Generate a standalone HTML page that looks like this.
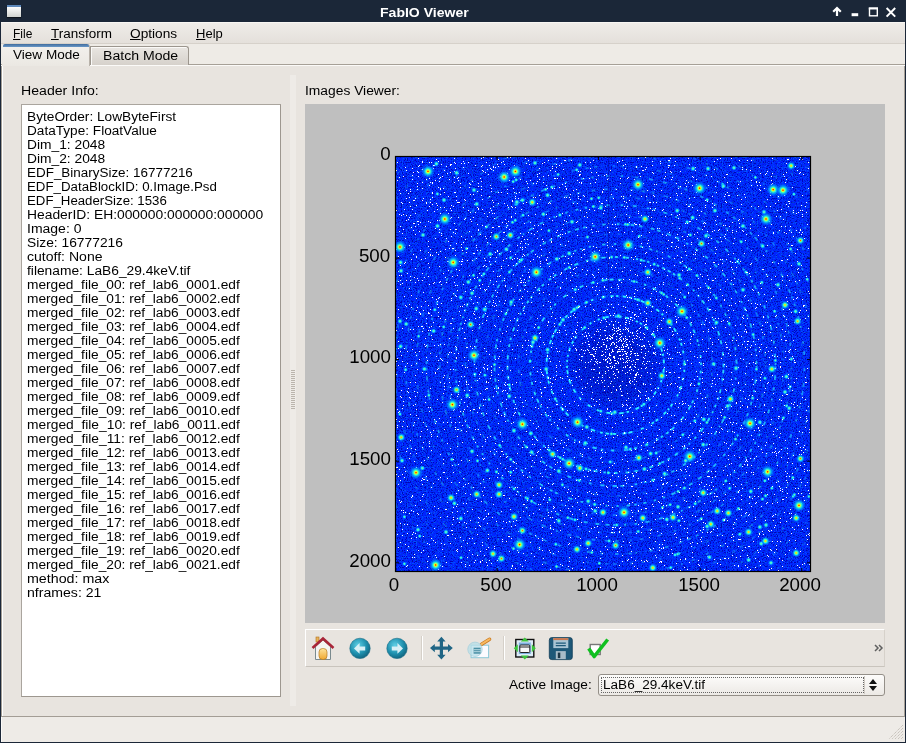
<!DOCTYPE html>
<html><head><meta charset="utf-8"><style>
*{margin:0;padding:0;box-sizing:border-box}
html,body{width:906px;height:743px;overflow:hidden;background:#1b2738}
body{position:relative;font-family:"Liberation Sans",sans-serif;font-size:12.5px;color:#000;line-height:14px}
div{position:absolute;white-space:pre}
u{text-decoration:underline}
p{height:14px;line-height:14px;white-space:pre}
.s{transform:scaleX(1.113);transform-origin:0 0}
.ax{font-size:17.5px;line-height:18px;color:#000}
</style></head><body>
<div style="left:0;top:0;width:906px;height:22px;background:#1b2738"></div><div style="left:7px;top:5px;width:14px;height:12px;background:linear-gradient(#fdfdfd,#d0d3d0);border-top:2px solid #5d88bb;box-shadow:0 1px 1px rgba(0,0,0,.5)"></div><div class="s" style="left:380px;top:6px;color:#fff;font-weight:bold;font-size:12.5px;line-height:14px;transform:scaleX(1.123)">FabIO Viewer</div><svg style="position:absolute;left:826px;top:0" width="80" height="22">
<path d="M11 16V9M7.2 11.8L11 8l3.8 3.8" stroke="#fff" stroke-width="2.2" fill="none" stroke-linecap="butt"/>
<rect x="25.6" y="13.2" width="6.6" height="3" fill="#fff"/>
<rect x="43.5" y="8.2" width="7.8" height="7.6" fill="none" stroke="#fff" stroke-width="1.4"/>
<rect x="42.8" y="7.5" width="9.2" height="2" fill="#fff"/>
<path d="M60.6 8l8.6 8.6M69.2 8l-8.6 8.6" stroke="#fff" stroke-width="2"/>
</svg><div style="left:1px;top:22px;width:904px;height:720px;background:#e8e4df"></div><div style="left:1px;top:22px;width:904px;height:21px;background:linear-gradient(#efece8,#e4e0db);border-top:1px solid #f8f6f3"></div><div style="left:1px;top:43px;width:904px;height:1px;background:#d6d1ca"></div><div class="s" style="left:13px;top:27px;transform:scaleX(0.96)"><u>F</u>ile</div><div class="s" style="left:51px;top:27px;transform:scaleX(1.078)"><u>T</u>ransform</div><div class="s" style="left:130px;top:27px;transform:scaleX(1.093)"><u>O</u>ptions</div><div class="s" style="left:196px;top:27px;transform:scaleX(1.041)"><u>H</u>elp</div><div style="left:1px;top:44px;width:904px;height:20px;background:#eeebe6"></div><div style="left:1px;top:64px;width:904px;height:1px;background:#a6a097"></div><div style="left:1px;top:65px;width:904px;height:1px;background:#fbfaf8"></div><div style="left:2px;top:44px;width:88px;height:22px;background:linear-gradient(#f3f1ee,#ebe8e3);border-right:1px solid #b8b2aa;border-radius:3px 3px 0 0"></div><div style="left:3px;top:44px;width:86px;height:3px;background:linear-gradient(#3f6b9c,#6a98c8);border-radius:2px 2px 0 0"></div><div class="s" style="left:13px;top:48px;transform:scaleX(1.085)">View Mode</div><div style="left:90px;top:46px;width:99px;height:19px;background:linear-gradient(#e9e6e2,#d6d1cb);border:1px solid #9c968e;border-bottom:none;border-radius:0 3px 0 0;box-shadow:inset 1px 1px 0 #fbfaf8"></div><div class="s" style="left:103px;top:49px;transform:scaleX(1.126)">Batch Mode</div><div style="left:1px;top:66px;width:1px;height:650px;background:#a39d95"></div><div style="left:2px;top:66px;width:1px;height:650px;background:#fff"></div><div style="left:904px;top:66px;width:1px;height:650px;background:#a6a097"></div><div style="left:1px;top:716px;width:904px;height:1px;background:#a39d95"></div><div style="left:1px;top:717px;width:904px;height:25px;background:#eeebe7;border-left:1px solid #fbfaf8"></div><div style="left:0;top:742px;width:906px;height:1px;background:#1b2738"></div><svg style="position:absolute;left:886px;top:722px" width="18" height="18"><path d="M17 3L3 17M17 6L6 17M17 9L9 17M17 12L12 17M17 15L15 17" stroke="#b8b2aa" stroke-width="1" stroke-dasharray="1,1"/></svg><div class="s" style="left:21px;top:84px;transform:scaleX(1.129)">Header Info:</div><div style="left:21px;top:104px;width:260px;height:593px;background:#fff;border:1px solid #aaa59e;border-bottom-color:#9d978f;border-right-color:#9d978f"></div><div style="left:27px;top:110px"><p style="transform:scaleX(1.095);transform-origin:0 0">ByteOrder: LowByteFirst</p><p style="transform:scaleX(1.089);transform-origin:0 0">DataType: FloatValue</p><p style="transform:scaleX(1.103);transform-origin:0 0">Dim_1: 2048</p><p style="transform:scaleX(1.103);transform-origin:0 0">Dim_2: 2048</p><p style="transform:scaleX(1.075);transform-origin:0 0">EDF_BinarySize: 16777216</p><p style="transform:scaleX(1.063);transform-origin:0 0">EDF_DataBlockID: 0.Image.Psd</p><p style="transform:scaleX(1.059);transform-origin:0 0">EDF_HeaderSize: 1536</p><p style="transform:scaleX(1.107);transform-origin:0 0">HeaderID: EH:000000:000000:000000</p><p style="transform:scaleX(1.119);transform-origin:0 0">Image: 0</p><p style="transform:scaleX(1.104);transform-origin:0 0">Size: 16777216</p><p style="transform:scaleX(1.124);transform-origin:0 0">cutoff: None</p><p style="transform:scaleX(1.102);transform-origin:0 0">filename: LaB6_29.4keV.tif</p><p style="transform:scaleX(1.097);transform-origin:0 0">merged_file_00: ref_lab6_0001.edf</p><p style="transform:scaleX(1.097);transform-origin:0 0">merged_file_01: ref_lab6_0002.edf</p><p style="transform:scaleX(1.097);transform-origin:0 0">merged_file_02: ref_lab6_0003.edf</p><p style="transform:scaleX(1.097);transform-origin:0 0">merged_file_03: ref_lab6_0004.edf</p><p style="transform:scaleX(1.097);transform-origin:0 0">merged_file_04: ref_lab6_0005.edf</p><p style="transform:scaleX(1.097);transform-origin:0 0">merged_file_05: ref_lab6_0006.edf</p><p style="transform:scaleX(1.097);transform-origin:0 0">merged_file_06: ref_lab6_0007.edf</p><p style="transform:scaleX(1.097);transform-origin:0 0">merged_file_07: ref_lab6_0008.edf</p><p style="transform:scaleX(1.097);transform-origin:0 0">merged_file_08: ref_lab6_0009.edf</p><p style="transform:scaleX(1.097);transform-origin:0 0">merged_file_09: ref_lab6_0010.edf</p><p style="transform:scaleX(1.103);transform-origin:0 0">merged_file_10: ref_lab6_0011.edf</p><p style="transform:scaleX(1.103);transform-origin:0 0">merged_file_11: ref_lab6_0012.edf</p><p style="transform:scaleX(1.097);transform-origin:0 0">merged_file_12: ref_lab6_0013.edf</p><p style="transform:scaleX(1.097);transform-origin:0 0">merged_file_13: ref_lab6_0014.edf</p><p style="transform:scaleX(1.097);transform-origin:0 0">merged_file_14: ref_lab6_0015.edf</p><p style="transform:scaleX(1.097);transform-origin:0 0">merged_file_15: ref_lab6_0016.edf</p><p style="transform:scaleX(1.097);transform-origin:0 0">merged_file_16: ref_lab6_0017.edf</p><p style="transform:scaleX(1.097);transform-origin:0 0">merged_file_17: ref_lab6_0018.edf</p><p style="transform:scaleX(1.097);transform-origin:0 0">merged_file_18: ref_lab6_0019.edf</p><p style="transform:scaleX(1.097);transform-origin:0 0">merged_file_19: ref_lab6_0020.edf</p><p style="transform:scaleX(1.097);transform-origin:0 0">merged_file_20: ref_lab6_0021.edf</p><p style="transform:scaleX(1.140);transform-origin:0 0">method: max</p><p style="transform:scaleX(1.127);transform-origin:0 0">nframes: 21</p></div><div style="left:290px;top:75px;width:6px;height:631px;background:#eeebe7"></div><div style="left:291px;top:370px;width:4px;height:39px;background:repeating-linear-gradient(#bab4ac 0 1px,transparent 1px 2px)"></div><div class="s" style="left:305px;top:84px;transform:scaleX(1.105)">Images Viewer:</div><div style="left:305px;top:104px;width:580px;height:519px;background:#bfbfbf"></div><svg width="906" height="743" style="position:absolute;left:0;top:0"><defs><radialGradient id="g3"><stop offset="0" stop-color="#e00000"/><stop offset=".07" stop-color="#ff6000"/><stop offset=".17" stop-color="#f0ff10"/><stop offset=".32" stop-color="#40ffc0"/><stop offset=".55" stop-color="#00b0ff" stop-opacity=".8"/><stop offset="1" stop-color="#0050ff" stop-opacity="0"/></radialGradient><radialGradient id="g2"><stop offset="0" stop-color="#ff3000"/><stop offset=".1" stop-color="#ffe000"/><stop offset=".38" stop-color="#30ffd0"/><stop offset=".65" stop-color="#00a0ff" stop-opacity=".7"/><stop offset="1" stop-color="#0050ff" stop-opacity="0"/></radialGradient><radialGradient id="g1"><stop offset="0" stop-color="#a0ff60"/><stop offset=".35" stop-color="#20e8ff"/><stop offset=".7" stop-color="#0090ff" stop-opacity=".6"/><stop offset="1" stop-color="#0050ff" stop-opacity="0"/></radialGradient><radialGradient id="cd"><stop offset="0" stop-color="#000080" stop-opacity=".3"/><stop offset=".6" stop-color="#000080" stop-opacity=".22"/><stop offset="1" stop-color="#000080" stop-opacity="0"/></radialGradient><filter id="nz" x="0" y="0" width="100%" height="100%"><feTurbulence type="fractalNoise" baseFrequency="0.8" numOctaves="2" seed="5"/><feColorMatrix type="matrix" values="0 0 0 0 0  0 0 0 0 0  0 0 0 0 0.4  -10 0 0 0 4.6"/></filter><filter id="nz2" x="0" y="0" width="100%" height="100%"><feTurbulence type="fractalNoise" baseFrequency="0.8" numOctaves="1" seed="11"/><feColorMatrix type="matrix" values="0 0 0 0 0  0 0 0 0 0.38  0 0 0 0 1  0 -10 0 0 4.6"/></filter><clipPath id="cl"><rect x="395" y="156" width="416" height="416"/></clipPath></defs><g clip-path="url(#cl)"><rect x="395" y="156" width="416" height="416" fill="#0024ff"/><rect x="395" y="156" width="416" height="416" fill="#000" filter="url(#nz)" opacity="0.85"/><rect x="395" y="156" width="416" height="416" filter="url(#nz2)" opacity="0.35"/><circle cx="615.5" cy="365" r="50" fill="url(#cd)"/><circle cx="615.5" cy="365" r="48.5" fill="none" stroke="#0070ff" stroke-width="2.4" stroke-opacity="0.22"/><circle cx="615.5" cy="365" r="48.5" fill="none" stroke="#30ecff" stroke-width="1.8" stroke-opacity="1.00" stroke-dasharray="3.4,2.2,2.3,3.6,3.7,6.7,4.2,2.6,2.8,2.2,2.2,5.5,1.6,3.4,3.4,5.8,2.2,6.1,3.9,2.0,3.9,6.9,2.5,3.1,4.4,4.4,1.8,2.7,4.0,6.2,3.9,7.1,3.1,8.8,2.6,5.9,4.0,6.3,4.1,6.0,3.6,2.3,2.2,4.0,1.7,3.6,1.8,3.9,3.4,4.6,2.6,3.5,2.3,8.6,3.4,6.3,2.0,7.1,2.0,4.7,4.5,6.5,3.2,6.8,4.0,7.4,2.2,2.2,2.4,3.9,2.1,8.6,4.1,4.2,3.5,4.8" stroke-dashoffset="18.3"/><circle cx="615.5" cy="365" r="69.0" fill="none" stroke="#0070ff" stroke-width="2.4" stroke-opacity="0.22"/><circle cx="615.5" cy="365" r="69.0" fill="none" stroke="#30ecff" stroke-width="1.8" stroke-opacity="1.00" stroke-dasharray="2.9,3.9,2.2,5.9,2.3,6.1,4.2,4.8,2.2,9.0,3.0,2.6,1.6,2.8,3.4,7.5,2.8,2.4,2.6,9.0,3.1,8.8,4.1,2.1,3.7,6.8,3.1,3.9,3.4,2.8,2.8,5.2,4.4,8.1,2.3,5.5,2.0,8.4,4.1,4.1,3.4,6.3,2.0,7.3,3.1,7.5,3.1,2.0,2.5,2.1,4.3,8.2,4.0,4.2,1.7,8.1,4.3,2.6,3.0,2.5,3.8,7.4,1.9,5.3,3.1,3.9,4.1,5.0,2.1,5.8,3.7,3.4,2.4,9.0,3.4,5.1,3.1,2.8,2.2,4.4,3.3,3.6,2.2,2.5,3.4,3.6,4.2,8.0,1.7,3.7,3.5,3.5,1.9,8.5,3.2,5.3,3.9,7.7,2.1,2.7,2.8,5.0,2.9,7.1,3.5,8.9" stroke-dashoffset="2.0"/><circle cx="615.5" cy="365" r="85.5" fill="none" stroke="#0070ff" stroke-width="2.4" stroke-opacity="0.19"/><circle cx="615.5" cy="365" r="85.5" fill="none" stroke="#30ecff" stroke-width="1.8" stroke-opacity="0.85" stroke-dasharray="2.7,4.9,4.1,4.2,2.1,5.8,2.8,4.4,2.2,9.5,2.8,9.0,3.2,2.6,4.5,8.8,4.4,9.5,4.0,3.5,3.0,3.9,2.7,2.7,2.6,10.0,2.3,8.4,2.9,5.6,4.4,10.0,3.2,7.9,2.0,4.6,4.4,6.8,3.1,8.1,1.7,6.8,3.0,8.9,2.0,9.8,1.7,3.7,3.3,7.5,2.2,3.2,4.2,4.2,3.3,7.1,2.8,6.8,3.1,9.6,2.1,7.9,2.2,5.3,3.5,4.6,2.4,8.1,1.7,5.8,4.5,10.1,1.7,3.9,2.3,9.6,4.1,9.1,2.6,3.5,4.0,7.8,3.3,10.0,3.5,2.3,4.0,4.6,3.5,9.6,1.9,3.1,1.8,6.6,2.3,7.0,3.7,3.8,3.4,4.3,3.0,9.3,4.0,3.0,2.8,4.4,1.5,8.3,3.4,4.3,3.7,6.6,2.8,2.3,1.7,9.2" stroke-dashoffset="18.1"/><circle cx="615.5" cy="365" r="97.0" fill="none" stroke="#0070ff" stroke-width="2.4" stroke-opacity="0.07"/><circle cx="615.5" cy="365" r="97.0" fill="none" stroke="#30ecff" stroke-width="1.8" stroke-opacity="0.30" stroke-dasharray="3.1,18.2,3.2,7.1,1.9,9.7,4.2,17.6,4.1,19.3,2.1,8.7,1.8,17.3,4.2,11.3,3.4,7.2,4.3,18.7,4.4,17.8,4.1,5.0,3.7,10.0,4.3,17.7,4.1,17.8,2.3,17.4,1.8,18.8,4.1,8.3,3.9,12.1,2.4,17.6,2.2,5.0,2.1,10.0,4.1,20.4,2.3,15.1,2.7,20.6,3.1,19.9,1.8,20.4,2.0,20.3,2.3,6.4,2.8,16.5,2.4,14.5,3.0,10.9,3.2,8.8,3.6,4.7,4.3,13.4,3.7,16.7" stroke-dashoffset="13.4"/><circle cx="615.5" cy="365" r="108.0" fill="none" stroke="#0070ff" stroke-width="2.4" stroke-opacity="0.19"/><circle cx="615.5" cy="365" r="108.0" fill="none" stroke="#30ecff" stroke-width="1.8" stroke-opacity="0.85" stroke-dasharray="2.6,2.8,3.5,4.8,2.4,8.9,3.7,4.6,2.4,5.4,2.7,4.6,1.9,5.5,4.3,7.6,4.2,7.1,2.4,6.5,1.5,4.5,2.8,6.8,3.5,5.9,2.8,3.9,2.9,9.3,3.9,3.6,1.8,6.3,3.4,4.9,4.0,8.1,3.5,4.0,2.1,2.4,2.2,6.0,4.0,2.8,2.7,7.2,2.1,7.7,3.0,4.2,3.5,2.3,3.8,8.3,1.8,5.6,2.0,9.8,3.1,2.6,2.2,8.9,2.9,8.5,3.5,10.0,3.3,9.7,4.2,7.0,3.7,6.2,4.0,6.5,4.2,8.1,2.9,4.3,2.2,7.2,3.8,6.3,3.4,4.4,1.7,4.5,2.3,4.7,3.1,3.3,2.2,7.7,3.6,2.7,2.7,6.5,2.7,3.9,2.8,9.3,3.3,7.7,4.1,8.2,2.6,2.3,2.6,8.2,4.1,9.7,2.8,8.1,3.1,7.0,2.2,4.0,2.8,2.5,2.5,7.6,2.7,3.5,2.9,3.2,3.4,2.5,2.7,6.7,1.6,7.3,1.9,5.9,1.7,5.2,2.1,4.8,3.8,5.2,3.8,8.8,2.3,2.9,1.6,6.5,4.5,5.0,3.5,8.4,3.5,8.2,4.3,3.8" stroke-dashoffset="0.4"/><circle cx="615.5" cy="365" r="121.0" fill="none" stroke="#0070ff" stroke-width="2.4" stroke-opacity="0.15"/><circle cx="615.5" cy="365" r="121.0" fill="none" stroke="#30ecff" stroke-width="1.8" stroke-opacity="0.70" stroke-dasharray="2.0,3.7,3.5,7.6,2.2,8.9,3.8,4.1,3.3,9.3,1.8,9.9,4.4,3.5,1.6,5.4,3.5,11.2,2.7,9.0,1.7,8.8,3.4,3.5,3.8,10.2,3.3,3.7,4.5,9.6,2.5,6.4,2.6,7.1,2.5,10.2,4.0,3.5,4.4,8.3,4.0,8.9,2.8,9.2,4.4,5.0,3.9,7.4,3.0,6.5,3.7,5.0,4.1,10.0,1.8,10.5,2.2,6.7,3.3,6.0,1.6,10.2,2.0,4.5,3.9,5.6,4.1,8.9,2.3,2.7,4.3,3.3,3.7,7.0,3.8,8.8,3.4,7.0,3.9,3.4,2.2,8.8,2.4,7.8,2.9,7.3,2.8,9.3,2.5,8.9,2.3,4.8,1.9,4.3,1.9,7.4,3.8,4.2,2.1,6.9,3.7,11.3,3.1,5.1,1.8,4.3,2.2,4.2,1.5,7.4,2.3,11.3,3.2,8.8,1.9,10.4,3.0,10.4,3.2,6.8,2.8,4.2,1.7,11.0,2.9,10.0,2.7,3.2,3.4,3.0,1.9,7.6,2.4,11.5,1.9,9.4,3.3,9.7,2.2,7.3,2.9,6.5,4.1,11.5,2.4,8.1,3.3,9.2,4.3,4.4" stroke-dashoffset="4.2"/><circle cx="615.5" cy="365" r="131.0" fill="none" stroke="#0070ff" stroke-width="2.4" stroke-opacity="0.06"/><circle cx="615.5" cy="365" r="131.0" fill="none" stroke="#30ecff" stroke-width="1.8" stroke-opacity="0.25" stroke-dasharray="3.5,8.2,2.0,6.7,1.5,13.6,3.3,10.7,2.2,18.3,3.6,13.7,3.6,22.3,3.9,16.8,3.5,22.5,2.8,15.3,3.4,22.1,4.0,6.6,2.0,11.0,3.7,15.8,2.4,7.6,3.6,18.2,4.3,14.5,3.0,6.8,1.6,13.3,2.5,9.9,1.8,23.0,4.0,15.9,4.4,23.7,3.5,10.3,1.6,19.2,2.9,17.3,4.2,8.6,3.3,17.0,3.0,7.0,2.5,11.4,3.5,21.1,2.5,18.1,2.4,22.7,3.9,15.4,2.9,11.1,2.5,23.2,2.7,14.8,4.5,17.4,3.1,12.9,2.1,12.0,3.8,16.8,3.8,9.0,3.1,22.4,2.8,18.2,1.9,23.3,3.3,9.7" stroke-dashoffset="3.2"/><circle cx="615.5" cy="365" r="141.0" fill="none" stroke="#0070ff" stroke-width="2.4" stroke-opacity="0.15"/><circle cx="615.5" cy="365" r="141.0" fill="none" stroke="#30ecff" stroke-width="1.8" stroke-opacity="0.70" stroke-dasharray="3.2,7.5,1.8,11.5,4.2,6.7,1.9,10.0,3.0,9.0,3.0,5.0,4.0,11.4,2.2,7.5,2.7,10.9,3.0,10.5,4.1,5.0,3.9,6.3,4.3,7.1,4.0,5.1,2.4,7.8,4.5,7.0,1.9,7.4,2.5,7.5,3.1,6.7,2.5,4.3,3.6,7.7,2.2,9.5,1.6,9.3,3.6,9.9,2.7,8.5,4.0,11.4,3.0,2.9,3.0,7.9,4.1,10.4,2.8,7.3,2.9,9.1,2.7,8.5,2.0,6.8,4.4,5.6,3.6,8.4,4.1,10.2,4.1,6.0,2.4,9.0,3.8,10.4,1.6,3.2,3.4,10.8,4.5,9.3,2.8,3.5,3.4,10.4,2.8,8.8,4.2,3.0,3.9,5.2,2.6,3.9,3.1,7.7,3.9,4.1,1.7,10.4,3.4,4.7,4.2,3.9,2.9,4.8,2.3,2.7,3.9,10.7,3.5,4.0,2.8,5.7,3.3,8.3,2.8,4.8,4.0,4.4,2.7,6.9,2.2,7.7,3.2,11.5,2.4,11.4,3.5,5.0,3.2,8.7,3.7,3.0,3.3,7.0,4.2,5.1,3.9,8.0,2.6,8.3,3.4,8.7,3.7,8.5,4.0,8.2,4.2,8.4,2.4,6.5,3.2,9.1,1.8,5.2,3.7,4.1,1.9,7.4,4.4,7.3,4.2,10.0,2.3,10.0" stroke-dashoffset="9.6"/><circle cx="615.5" cy="365" r="150.0" fill="none" stroke="#0070ff" stroke-width="2.4" stroke-opacity="0.07"/><circle cx="615.5" cy="365" r="150.0" fill="none" stroke="#30ecff" stroke-width="1.8" stroke-opacity="0.30" stroke-dasharray="3.9,16.8,2.5,6.5,4.4,6.9,4.4,18.6,3.7,20.6,4.4,17.7,2.6,17.5,1.5,13.4,2.9,15.6,3.5,14.2,4.0,19.9,1.8,8.4,1.6,19.0,3.2,19.5,2.2,5.7,4.0,19.4,2.4,11.3,1.9,20.0,2.4,12.7,1.8,19.1,1.9,12.0,3.5,16.7,4.3,11.5,3.7,7.2,2.7,6.3,3.0,11.3,4.4,5.2,2.6,11.9,4.4,18.6,1.8,15.8,3.1,20.5,2.6,11.1,2.1,6.6,4.0,12.0,3.5,15.1,3.3,5.0,3.9,8.6,1.9,13.8,1.7,17.1,2.1,8.2,4.1,10.0,1.9,19.3,1.5,18.6,1.9,6.8,2.3,7.5,3.5,5.1,1.5,17.5,2.2,9.9,2.0,5.5,3.7,13.2,3.7,12.4,3.8,13.0,1.8,12.8,4.3,5.4,3.8,18.7,3.1,12.1,4.4,5.6,2.9,11.2,3.6,12.6,4.2,5.8,1.7,14.5" stroke-dashoffset="1.3"/><circle cx="615.5" cy="365" r="160.0" fill="none" stroke="#0070ff" stroke-width="2.4" stroke-opacity="0.14"/><circle cx="615.5" cy="365" r="160.0" fill="none" stroke="#30ecff" stroke-width="1.8" stroke-opacity="0.65" stroke-dasharray="2.3,8.7,3.1,5.8,4.5,7.7,2.9,8.4,1.8,9.3,4.1,8.9,3.8,9.5,2.1,7.0,2.2,5.9,2.9,6.6,1.8,6.7,3.5,6.2,2.0,11.4,1.7,10.6,1.8,3.6,3.7,10.4,3.2,8.3,3.2,5.8,1.9,6.1,3.5,9.8,4.1,9.5,4.4,8.4,2.6,8.2,2.1,8.9,2.2,3.7,4.0,6.2,3.8,8.1,3.9,10.7,4.4,10.4,3.3,8.8,1.6,11.5,4.0,5.2,2.0,9.4,2.4,5.9,1.5,10.9,3.2,6.5,1.9,8.7,1.6,9.8,2.1,6.7,2.5,6.2,3.7,10.1,3.2,3.5,1.7,4.2,3.4,9.1,2.3,9.0,3.0,6.9,2.3,9.8,1.8,6.8,2.3,9.1,3.0,9.0,1.6,6.4,3.3,2.8,2.4,4.7,1.9,5.1,2.5,2.8,3.7,4.4,2.6,9.4,3.0,10.6,3.9,3.4,4.1,3.1,1.6,11.4,4.1,8.2,3.2,9.4,2.8,3.8,1.6,5.8,3.9,8.6,4.0,11.4,1.8,10.7,2.2,8.3,3.1,6.4,2.4,5.9,2.5,4.3,3.0,3.8,3.0,11.3,2.5,9.6,4.0,10.4,2.2,4.1,2.1,8.4,3.8,8.9,2.0,10.0,3.0,9.8,3.8,7.0,4.3,8.0,3.4,8.6,4.1,8.6,2.0,3.4,2.8,5.6,2.3,3.2,3.0,5.6,2.9,3.2,4.0,3.4,4.1,10.8,3.3,7.5,2.9,7.9,3.9,11.2,2.8,10.4,3.5,5.7" stroke-dashoffset="9.5"/><circle cx="615.5" cy="365" r="168.0" fill="none" stroke="#0070ff" stroke-width="2.4" stroke-opacity="0.07"/><circle cx="615.5" cy="365" r="168.0" fill="none" stroke="#30ecff" stroke-width="1.8" stroke-opacity="0.30" stroke-dasharray="2.0,5.7,1.8,19.3,2.5,16.3,3.0,7.5,2.2,11.8,2.8,13.1,2.0,10.7,2.3,11.3,2.5,14.4,3.9,15.2,1.7,6.2,3.5,9.3,3.7,15.3,4.2,18.8,2.5,14.1,1.9,10.3,4.4,16.0,2.7,14.3,4.3,9.7,2.6,17.5,3.9,15.5,4.0,16.7,3.6,13.2,3.4,11.5,2.6,10.5,2.0,8.1,4.3,12.6,2.2,6.9,1.7,18.4,1.8,17.2,4.0,19.0,1.6,10.1,3.8,6.8,2.6,7.3,4.0,17.2,3.9,7.3,2.8,11.3,3.5,8.5,2.8,9.3,3.7,11.9,3.1,9.7,3.9,12.3,4.0,10.6,4.3,20.7,2.9,9.2,2.6,13.2,4.4,17.9,3.9,6.9,2.3,15.1,4.1,13.7,1.8,18.4,4.1,9.3,3.8,9.1,4.2,7.0,2.8,20.0,2.2,12.0,2.5,5.1,1.7,12.8,2.2,20.8,2.6,5.1,4.3,18.3,3.4,17.5,1.9,9.3,4.0,16.0,1.9,16.1,2.8,4.7,1.7,8.8,4.0,13.6" stroke-dashoffset="14.5"/><circle cx="615.5" cy="365" r="176.0" fill="none" stroke="#0070ff" stroke-width="2.4" stroke-opacity="0.09"/><circle cx="615.5" cy="365" r="176.0" fill="none" stroke="#30ecff" stroke-width="1.8" stroke-opacity="0.40" stroke-dasharray="3.1,5.3,2.4,7.8,1.6,9.4,3.9,9.9,1.8,15.8,3.3,4.0,3.0,7.0,1.9,9.5,3.3,7.0,2.7,12.6,1.8,16.8,1.7,10.8,3.0,16.9,3.2,9.0,2.9,12.2,4.4,7.2,1.5,14.3,2.5,13.5,3.4,14.1,3.7,8.2,1.6,11.1,3.9,6.1,3.8,10.0,3.6,12.2,3.9,4.6,3.8,9.9,2.4,4.4,2.1,4.4,4.3,10.6,4.5,11.0,2.3,13.8,2.1,8.5,3.8,15.3,2.5,5.5,2.6,15.6,3.7,15.7,2.7,16.7,3.0,10.4,4.3,10.7,3.9,13.5,1.7,11.8,4.0,11.0,2.5,4.9,3.5,7.9,3.3,9.5,3.6,8.5,1.6,15.4,2.6,17.1,2.3,16.8,4.3,4.8,3.4,8.6,3.9,12.8,4.4,5.7,3.3,14.2,1.6,4.7,3.8,8.7,2.6,11.3,3.3,12.8,4.3,8.7,3.8,11.4,3.1,9.1,3.4,7.1,1.8,13.6,3.0,8.9,3.2,7.3,2.3,9.7,4.5,7.6,4.2,10.3,1.9,15.1,2.9,15.7,2.8,5.0,3.5,15.0,2.5,8.4,1.7,11.0,4.2,15.1,3.6,16.1,3.4,14.3,3.0,5.4,2.1,5.6,3.9,4.1,3.2,8.7,3.9,11.1,3.3,4.9" stroke-dashoffset="6.2"/><circle cx="615.5" cy="365" r="189.0" fill="none" stroke="#0070ff" stroke-width="2.4" stroke-opacity="0.11"/><circle cx="615.5" cy="365" r="189.0" fill="none" stroke="#30ecff" stroke-width="1.8" stroke-opacity="0.50" stroke-dasharray="4.5,11.4,3.1,12.0,4.0,4.1,4.4,10.6,2.8,11.0,2.5,13.2,3.8,10.5,2.0,14.2,2.8,13.6,1.7,4.7,2.0,5.1,2.5,11.3,2.5,13.9,4.2,12.9,2.3,10.5,3.2,4.7,2.4,9.3,3.0,5.2,4.3,5.0,3.5,11.4,3.3,12.8,3.2,12.6,1.6,3.8,3.4,9.8,3.5,12.0,2.7,10.5,3.0,10.4,2.4,14.1,2.9,12.4,3.6,6.6,1.7,3.9,2.8,8.8,2.1,10.1,2.4,11.4,3.7,13.0,4.4,4.7,2.6,9.6,2.5,8.6,2.3,6.1,1.8,6.5,2.7,10.2,2.2,13.1,2.0,7.0,3.2,6.8,3.8,8.9,3.0,8.9,2.4,3.5,4.3,9.0,4.4,5.7,2.6,3.8,3.0,13.3,3.5,8.6,3.1,12.9,2.8,13.3,3.7,11.9,2.6,7.8,3.2,5.5,3.2,4.1,3.0,11.9,2.3,14.5,3.5,4.6,4.4,7.7,3.9,7.1,4.3,11.8,2.1,9.0,3.0,3.8,1.9,7.0,2.9,8.4,3.3,9.1,2.5,10.2,2.0,14.5,3.7,6.7,2.5,12.7,3.1,11.3,2.4,12.5,2.6,10.9,4.4,9.9,3.9,11.5,3.6,3.6,2.9,14.2,3.8,12.1,3.2,11.5,3.3,5.2,3.4,10.3,4.0,4.9,3.5,3.6,4.3,4.5,1.6,6.8,2.0,11.1,2.7,12.1,4.3,13.2,3.7,4.0,1.9,5.6,2.5,10.8,3.1,6.8,2.0,13.6,2.5,7.3,3.8,11.4" stroke-dashoffset="12.9"/><circle cx="615.5" cy="365" r="199.0" fill="none" stroke="#0070ff" stroke-width="2.4" stroke-opacity="0.07"/><circle cx="615.5" cy="365" r="199.0" fill="none" stroke="#30ecff" stroke-width="1.8" stroke-opacity="0.30" stroke-dasharray="3.6,14.6,2.1,8.7,3.2,8.3,4.4,9.5,2.4,8.0,3.6,9.8,2.5,19.8,3.9,9.1,1.9,15.6,2.6,20.6,4.0,20.2,3.9,9.4,2.4,16.3,2.5,11.8,2.3,12.4,2.1,13.4,4.3,16.0,1.9,14.7,3.3,8.6,3.5,13.3,3.4,5.5,2.7,16.3,1.8,17.2,1.5,13.6,4.3,11.3,4.3,18.9,2.9,7.9,4.4,9.9,3.4,19.4,1.8,14.0,3.1,16.4,4.3,19.5,2.0,19.0,2.0,19.6,4.5,11.1,3.0,19.9,4.4,19.7,4.1,4.8,3.2,6.4,4.4,9.3,4.5,13.5,3.0,19.9,4.1,12.3,2.1,6.5,2.0,12.1,2.3,7.7,3.7,17.5,3.2,17.0,2.0,18.6,4.2,18.1,3.0,6.1,3.5,7.7,1.9,9.9,2.2,8.9,2.2,16.9,4.4,9.6,3.7,4.8,3.5,15.9,1.7,6.6,2.4,11.2,3.0,19.2,3.6,9.7,1.9,19.5,2.4,14.6,2.2,6.8,2.0,16.8,3.3,11.4,3.1,12.3,3.1,15.4,2.2,8.7,3.8,18.8,1.7,11.9,3.6,5.9,3.2,5.6,3.1,12.9,3.2,7.1,2.5,13.1,1.8,8.0,3.2,6.1,3.0,17.8" stroke-dashoffset="9.1"/><circle cx="615.5" cy="365" r="210.0" fill="none" stroke="#0070ff" stroke-width="2.4" stroke-opacity="0.08"/><circle cx="615.5" cy="365" r="210.0" fill="none" stroke="#30ecff" stroke-width="1.8" stroke-opacity="0.35" stroke-dasharray="3.0,10.8,1.7,10.9,3.9,14.7,2.7,16.1,3.7,12.6,1.6,9.2,1.7,18.7,4.3,5.2,4.3,4.6,2.7,15.4,3.8,18.5,3.4,10.3,4.5,9.8,4.1,17.4,2.6,14.1,3.5,12.0,3.5,9.2,2.0,12.0,3.1,14.8,2.2,4.2,1.6,8.5,3.5,12.1,3.1,16.2,2.2,9.2,2.3,17.9,3.7,5.8,3.9,10.3,3.8,17.1,1.5,7.2,1.8,4.7,3.3,14.4,1.6,15.0,2.7,7.6,2.2,16.8,1.7,11.5,2.4,16.1,3.7,8.8,3.3,14.0,2.5,8.6,1.9,13.8,2.2,8.6,1.7,18.0,4.1,17.5,3.4,10.4,3.0,18.4,4.3,14.0,3.9,8.8,2.7,6.3,2.6,15.2,2.9,16.6,2.4,14.5,3.9,17.5,3.2,18.3,3.2,6.1,2.2,7.1,3.4,17.6,4.0,5.5,3.7,7.0,2.3,14.0,3.3,16.9,2.1,15.3,3.7,12.3,2.9,16.9,2.5,18.1,1.5,17.8,4.4,5.9,4.5,11.2,2.2,13.0,2.1,17.5,3.2,15.5,2.6,12.0,2.6,8.0,3.0,11.4,1.8,18.5,2.9,16.4,4.2,9.6,2.7,12.4,2.2,6.3,2.3,17.8,3.2,10.3,2.0,9.0,2.6,16.3,3.0,13.7,3.6,7.9,4.0,18.3,3.4,11.3" stroke-dashoffset="3.4"/><circle cx="615.5" cy="365" r="221.0" fill="none" stroke="#0070ff" stroke-width="2.4" stroke-opacity="0.06"/><circle cx="615.5" cy="365" r="221.0" fill="none" stroke="#30ecff" stroke-width="1.8" stroke-opacity="0.25" stroke-dasharray="3.9,8.4,3.7,14.3,4.3,15.3,3.4,6.4,1.6,20.9,4.3,17.6,3.8,12.9,4.0,9.6,3.6,5.4,3.0,12.2,3.4,17.6,3.3,14.2,3.0,5.4,3.2,5.5,3.1,10.4,4.4,5.6,3.9,17.7,3.9,22.1,1.8,7.1,1.9,8.8,3.1,20.3,2.3,12.6,2.6,12.8,3.2,23.6,2.2,17.9,4.0,17.4,4.1,19.3,1.8,12.3,3.2,6.3,1.5,8.4,3.0,13.3,3.9,15.7,4.1,7.0,3.1,6.1,2.1,21.3,4.2,14.1,1.6,6.7,4.3,21.9,3.2,5.9,4.3,11.1,4.4,16.1,3.8,18.4,2.7,6.7,2.0,9.7,4.0,12.5,4.2,11.4,3.8,7.9,4.5,18.7,3.0,23.3,1.7,13.4,4.0,11.6,3.8,22.9,2.7,19.6,1.6,10.3,4.5,14.3,2.6,22.7,2.8,17.8,3.5,6.9,3.4,20.0,3.6,6.8,2.0,18.4,3.4,18.9,2.5,7.2,1.5,11.0,2.6,10.3,1.9,8.7,2.8,15.5,2.7,5.8,2.6,7.0,3.3,11.3,2.7,10.7,2.7,6.8,4.2,22.0,4.4,15.8,2.0,12.3,1.9,10.8,3.0,6.4,2.8,13.1,3.0,6.7,2.3,9.8,3.4,16.2,2.1,7.3,2.4,22.8,2.5,16.7,3.9,11.4,2.5,20.3" stroke-dashoffset="17.2"/><circle cx="615.5" cy="365" r="234.0" fill="none" stroke="#0070ff" stroke-width="2.4" stroke-opacity="0.06"/><circle cx="615.5" cy="365" r="234.0" fill="none" stroke="#30ecff" stroke-width="1.8" stroke-opacity="0.25" stroke-dasharray="4.4,7.8,2.5,22.8,2.1,11.1,4.4,23.2,2.4,18.1,3.0,15.9,2.2,12.2,3.9,12.5,1.8,15.7,3.3,15.4,3.5,15.4,4.4,13.8,3.6,13.4,2.4,18.1,4.0,20.0,2.7,14.5,3.4,9.7,3.5,18.5,3.9,6.6,4.5,14.1,2.7,14.6,4.3,18.1,3.1,19.9,2.6,21.8,3.1,17.1,1.8,19.5,3.5,11.8,3.4,6.1,4.5,17.8,2.7,19.2,4.4,13.2,1.5,10.1,3.0,14.9,3.2,15.9,2.8,12.5,3.8,16.2,3.0,11.7,1.6,7.2,2.7,23.0,1.8,22.7,1.9,11.0,2.9,9.1,2.9,14.1,2.8,18.1,2.5,10.8,3.9,7.4,4.0,17.2,3.5,8.3,4.5,9.8,2.0,8.2,3.2,23.0,2.2,12.8,2.1,17.1,2.8,5.8,3.3,8.9,3.3,12.5,3.6,9.1,3.8,20.2,1.7,7.2,4.1,8.7,2.5,13.7,2.3,21.2,3.1,17.1,3.3,16.6,3.3,11.7,4.0,16.7,3.9,18.3,2.4,16.6,1.8,7.8,1.9,10.9,2.0,18.1,3.0,13.0,1.9,12.4,2.1,17.0,3.6,17.2,4.5,15.5,3.0,7.9,2.4,13.6,1.7,11.9,1.5,7.8,3.9,23.1,3.0,14.4,3.6,13.0,4.0,14.3,1.7,5.8,3.8,10.7" stroke-dashoffset="5.5"/><circle cx="615.5" cy="365" r="247.0" fill="none" stroke="#0070ff" stroke-width="2.4" stroke-opacity="0.04"/><circle cx="615.5" cy="365" r="247.0" fill="none" stroke="#30ecff" stroke-width="1.8" stroke-opacity="0.20" stroke-dasharray="3.1,9.8,2.9,22.2,3.8,18.0,1.8,8.6,3.8,24.0,2.6,23.9,1.6,21.7,3.1,27.5,1.8,24.1,3.8,12.6,4.5,15.9,2.5,23.8,2.8,27.6,3.8,11.3,3.9,18.9,2.6,21.5,3.4,9.8,1.9,10.6,2.1,7.5,2.6,12.2,3.1,13.2,3.6,12.4,2.3,24.7,4.5,20.8,1.8,27.0,3.9,26.0,4.5,24.9,1.9,24.9,2.2,21.5,4.0,22.6,3.5,16.7,3.2,12.0,2.7,15.9,3.4,25.2,1.8,17.3,2.3,26.4,2.6,26.7,2.5,6.2,3.8,22.0,3.7,16.1,3.5,13.9,1.7,17.7,2.2,15.4,2.1,12.0,4.0,13.5,3.2,18.4,3.0,13.6,3.5,7.2,1.8,23.1,2.9,8.9,4.1,15.7,1.5,26.9,2.1,21.0,1.9,20.2,2.0,26.3,2.3,20.3,2.3,14.2,4.2,9.7,2.7,12.8,3.6,11.2,3.5,21.4,1.5,16.5,1.9,11.1,3.5,6.4,3.6,23.8,4.5,15.3,1.9,7.7,2.6,22.0,1.8,12.9,4.1,9.1,3.8,22.4,1.9,27.6,1.9,17.6,1.5,20.2,2.8,21.8,3.4,9.4" stroke-dashoffset="8.2"/><circle cx="615.5" cy="365" r="260.0" fill="none" stroke="#0070ff" stroke-width="2.4" stroke-opacity="0.04"/><circle cx="615.5" cy="365" r="260.0" fill="none" stroke="#30ecff" stroke-width="1.8" stroke-opacity="0.20" stroke-dasharray="3.6,24.7,1.8,8.3,3.8,18.9,2.7,27.0,2.4,9.2,2.3,8.0,3.2,19.1,3.3,23.0,3.6,24.5,3.5,12.7,3.1,17.2,3.7,12.6,1.7,25.6,4.4,16.9,1.8,17.0,3.3,17.6,4.4,27.5,4.3,9.0,4.1,18.4,2.6,20.9,3.8,26.8,3.8,6.5,1.7,11.8,1.6,7.5,3.9,17.1,3.4,17.0,2.7,21.3,1.7,17.8,3.3,12.2,2.4,17.2,2.1,23.6,3.1,14.6,3.4,24.2,3.5,7.6,3.6,21.9,4.0,7.4,1.8,15.6,2.9,19.3,2.4,22.2,3.7,8.7,3.6,21.3,2.0,26.8,3.1,23.1,3.7,9.8,1.9,23.0,2.3,25.3,3.8,6.8,3.9,12.0,1.7,21.6,3.2,7.8,2.9,13.9,3.0,18.4,2.6,11.7,1.8,18.6,3.7,11.1,3.0,7.1,4.1,11.5,2.9,14.4,2.0,26.3,4.1,18.1,4.2,22.2,2.8,13.1,2.7,21.7,2.3,7.9,2.6,17.0,4.2,10.0,3.9,27.4,4.4,7.7,2.9,12.3,4.0,13.2,3.2,6.3,2.1,18.3,2.4,19.6,2.9,18.9,3.0,22.9,2.1,25.6,3.8,11.5,1.5,15.0,2.2,13.7,4.0,25.1,4.4,6.2,3.5,24.5,3.7,8.4,3.1,11.3" stroke-dashoffset="9.8"/><circle cx="615.5" cy="365" r="275.0" fill="none" stroke="#0070ff" stroke-width="2.4" stroke-opacity="0.04"/><circle cx="615.5" cy="365" r="275.0" fill="none" stroke="#30ecff" stroke-width="1.8" stroke-opacity="0.18" stroke-dasharray="1.7,29.8,3.6,8.8,4.3,27.5,3.1,22.9,2.6,29.3,1.8,8.9,1.9,25.7,1.7,19.8,2.8,29.1,2.2,12.7,2.4,25.3,3.6,23.7,2.5,13.0,1.7,11.4,3.8,20.2,2.0,10.5,2.9,16.1,3.1,29.1,2.1,13.8,2.3,9.4,2.0,22.6,4.0,22.8,1.6,26.1,2.5,8.8,2.2,14.9,3.0,22.4,2.3,29.7,1.6,16.0,2.9,24.0,2.2,17.4,3.9,9.9,1.5,25.9,4.4,9.7,4.0,15.3,3.4,21.6,3.2,12.7,3.9,7.1,1.7,27.6,2.8,9.6,4.2,25.9,2.5,7.6,2.9,10.5,3.2,25.7,2.7,7.3,3.5,10.7,2.1,11.0,2.3,27.2,1.6,21.0,2.2,13.5,2.7,19.4,1.7,13.1,1.9,11.3,4.2,18.9,3.4,25.3,3.9,29.6,3.8,15.0,3.1,17.9,4.2,18.3,2.7,10.8,2.5,11.7,4.2,24.7,1.7,29.7,3.1,24.5,4.5,29.3,1.8,21.9,2.3,25.6,4.3,7.9,4.5,11.7,4.0,25.2,2.6,26.2,4.0,10.7,3.3,25.4,3.6,27.9,1.6,22.9,4.3,19.7,3.2,11.0,4.5,27.1,3.0,13.8,3.0,8.7,2.2,11.7,3.1,6.7" stroke-dashoffset="18.4"/><circle cx="615.5" cy="365" r="290.0" fill="none" stroke="#0070ff" stroke-width="2.4" stroke-opacity="0.03"/><circle cx="615.5" cy="365" r="290.0" fill="none" stroke="#30ecff" stroke-width="1.8" stroke-opacity="0.15" stroke-dasharray="2.1,11.0,3.7,31.8,4.0,16.1,1.6,23.0,4.3,28.0,4.0,30.3,4.4,17.4,4.3,18.0,1.8,15.5,1.9,11.7,4.3,28.5,4.4,24.7,2.0,33.1,3.6,32.1,3.9,13.4,3.3,12.2,2.4,25.7,1.9,26.8,4.3,32.6,2.7,33.8,4.4,8.4,3.3,31.9,4.4,13.4,3.2,32.3,1.9,27.2,2.2,33.5,2.0,30.9,1.8,26.3,3.4,31.0,2.8,14.6,2.2,9.3,2.3,10.4,1.5,17.7,3.7,33.1,4.2,20.6,2.6,22.0,1.8,20.2,4.1,24.7,3.6,11.8,1.7,29.9,2.4,16.0,4.4,9.5,2.0,17.5,3.7,22.0,4.2,10.0,3.3,23.8,2.9,8.4,4.3,11.9,4.2,11.7,1.8,13.0,2.1,26.0,3.7,26.8,2.3,15.0,2.2,8.9,3.2,29.7,2.0,17.1,2.8,15.3,3.5,23.4,2.1,8.2,2.0,15.3,1.7,29.8,2.4,18.0,3.0,25.0,1.8,21.9,2.1,30.9,2.6,19.3,2.3,19.8,2.2,14.6,1.7,27.4,3.5,9.8,2.5,21.8,4.4,23.1,3.2,29.8,4.0,18.6,3.1,30.4,2.9,30.8" stroke-dashoffset="9.5"/><circle cx="615.5" cy="365" r="305.0" fill="none" stroke="#0070ff" stroke-width="2.4" stroke-opacity="0.03"/><circle cx="615.5" cy="365" r="305.0" fill="none" stroke="#30ecff" stroke-width="1.8" stroke-opacity="0.15" stroke-dasharray="1.7,31.4,3.6,20.8,4.2,28.7,3.5,23.9,1.9,27.5,2.0,33.5,4.4,28.9,1.9,18.7,4.5,19.0,4.5,24.1,4.0,14.4,4.2,31.7,1.7,17.8,2.7,16.2,2.3,19.6,4.1,28.3,3.4,21.3,2.8,18.5,1.9,23.1,3.8,32.4,4.3,22.4,1.8,15.1,3.1,16.6,2.7,17.7,3.0,23.6,1.6,14.8,1.9,23.6,3.6,8.6,4.2,16.3,2.2,27.2,4.3,31.2,1.6,29.1,2.4,15.0,3.0,25.9,1.8,30.5,1.9,33.3,2.8,29.4,2.3,18.6,3.4,12.5,2.1,29.3,3.7,27.6,4.1,29.2,3.0,11.7,2.4,20.9,1.9,30.0,4.1,8.3,2.1,29.5,4.0,14.1,2.9,31.8,3.6,14.8,4.0,20.9,3.4,10.8,1.6,17.4,3.3,12.2,4.1,23.0,2.5,11.9,4.2,27.3,3.6,15.1,2.7,11.8,3.2,33.0,4.1,24.6,3.5,14.7,2.7,8.1,3.8,27.8,1.5,31.6,3.4,23.4,1.5,14.2,3.9,15.6,4.4,24.5,2.8,17.5,2.5,14.2,2.9,25.4,4.0,18.0,1.8,21.1,3.5,29.8,2.6,24.6,3.3,15.4,1.8,9.2" stroke-dashoffset="19.8"/><circle cx="584.7" cy="327.5" r="2.3" fill="url(#g1)"/><circle cx="646.8" cy="327.9" r="2.3" fill="url(#g1)"/><circle cx="612.1" cy="413.4" r="2.3" fill="url(#g1)"/><circle cx="603.8" cy="317.9" r="2.3" fill="url(#g1)"/><circle cx="653.3" cy="334.6" r="2.3" fill="url(#g1)"/><circle cx="600.9" cy="411.2" r="2.3" fill="url(#g1)"/><circle cx="644.0" cy="404.2" r="2.3" fill="url(#g1)"/><circle cx="620.2" cy="316.7" r="2.3" fill="url(#g1)"/><circle cx="671.2" cy="324.3" r="2.3" fill="url(#g1)"/><circle cx="639.0" cy="300.1" r="2.3" fill="url(#g1)"/><circle cx="637.8" cy="299.7" r="2.3" fill="url(#g1)"/><circle cx="559.7" cy="324.4" r="2.3" fill="url(#g1)"/><circle cx="578.7" cy="306.6" r="2.3" fill="url(#g1)"/><circle cx="586.4" cy="302.4" r="2.3" fill="url(#g1)"/><circle cx="603.1" cy="297.1" r="2.3" fill="url(#g1)"/><circle cx="576.9" cy="307.8" r="2.3" fill="url(#g1)"/><circle cx="684.5" cy="363.9" r="2.3" fill="url(#g1)"/><circle cx="611.4" cy="433.9" r="2.3" fill="url(#g1)"/><circle cx="555.3" cy="398.8" r="2.3" fill="url(#g1)"/><circle cx="562.8" cy="409.6" r="2.3" fill="url(#g1)"/><circle cx="698.9" cy="383.8" r="2.3" fill="url(#g1)"/><circle cx="593.2" cy="282.5" r="2.3" fill="url(#g1)"/><circle cx="538.6" cy="327.6" r="2.3" fill="url(#g1)"/><circle cx="647.0" cy="444.5" r="2.3" fill="url(#g1)"/><circle cx="602.9" cy="280.4" r="2.3" fill="url(#g1)"/><circle cx="630.3" cy="449.2" r="2.3" fill="url(#g1)"/><circle cx="532.0" cy="346.5" r="2.3" fill="url(#g1)"/><circle cx="634.1" cy="281.5" r="2.3" fill="url(#g1)"/><circle cx="686.7" cy="317.6" r="2.3" fill="url(#g1)"/><circle cx="575.2" cy="289.6" r="2.3" fill="url(#g1)"/><circle cx="530.1" cy="361.1" r="2.3" fill="url(#g1)"/><circle cx="663.7" cy="294.4" r="2.3" fill="url(#g1)"/><circle cx="661.6" cy="293.0" r="2.3" fill="url(#g1)"/><circle cx="684.7" cy="297.1" r="2.3" fill="url(#g1)"/><circle cx="656.2" cy="453.1" r="2.3" fill="url(#g1)"/><circle cx="694.8" cy="420.8" r="2.3" fill="url(#g1)"/><circle cx="682.8" cy="434.8" r="2.3" fill="url(#g1)"/><circle cx="610.2" cy="461.9" r="2.3" fill="url(#g1)"/><circle cx="654.2" cy="264.2" r="2.3" fill="url(#g1)"/><circle cx="624.3" cy="257.4" r="2.3" fill="url(#g1)"/><circle cx="659.6" cy="463.6" r="2.3" fill="url(#g1)"/><circle cx="569.3" cy="267.4" r="2.3" fill="url(#g1)"/><circle cx="560.2" cy="457.7" r="2.3" fill="url(#g1)"/><circle cx="706.9" cy="422.5" r="2.3" fill="url(#g1)"/><circle cx="549.2" cy="450.2" r="2.3" fill="url(#g1)"/><circle cx="611.6" cy="257.1" r="2.3" fill="url(#g1)"/><circle cx="577.6" cy="466.1" r="2.3" fill="url(#g1)"/><circle cx="641.1" cy="260.1" r="2.3" fill="url(#g1)"/><circle cx="562.7" cy="459.2" r="2.3" fill="url(#g1)"/><circle cx="608.3" cy="472.8" r="2.3" fill="url(#g1)"/><circle cx="586.0" cy="468.9" r="2.3" fill="url(#g1)"/><circle cx="679.6" cy="278.1" r="2.3" fill="url(#g1)"/><circle cx="509.3" cy="384.9" r="2.3" fill="url(#g1)"/><circle cx="687.6" cy="284.6" r="2.3" fill="url(#g1)"/><circle cx="510.8" cy="304.3" r="2.3" fill="url(#g1)"/><circle cx="729.2" cy="323.5" r="2.3" fill="url(#g1)"/><circle cx="724.6" cy="417.4" r="2.3" fill="url(#g1)"/><circle cx="708.5" cy="287.5" r="2.3" fill="url(#g1)"/><circle cx="494.5" cy="364.6" r="2.3" fill="url(#g1)"/><circle cx="696.9" cy="275.5" r="2.3" fill="url(#g1)"/><circle cx="526.4" cy="446.9" r="2.3" fill="url(#g1)"/><circle cx="579.3" cy="480.5" r="2.3" fill="url(#g1)"/><circle cx="729.6" cy="405.3" r="2.3" fill="url(#g1)"/><circle cx="689.2" cy="269.0" r="2.3" fill="url(#g1)"/><circle cx="694.2" cy="456.9" r="2.3" fill="url(#g1)"/><circle cx="652.7" cy="480.1" r="2.3" fill="url(#g1)"/><circle cx="513.7" cy="430.4" r="2.3" fill="url(#g1)"/><circle cx="505.8" cy="313.9" r="2.3" fill="url(#g1)"/><circle cx="716.3" cy="298.0" r="2.3" fill="url(#g1)"/><circle cx="489.1" cy="399.5" r="2.3" fill="url(#g1)"/><circle cx="562.4" cy="484.8" r="2.3" fill="url(#g1)"/><circle cx="587.5" cy="237.0" r="2.3" fill="url(#g1)"/><circle cx="639.2" cy="236.2" r="2.3" fill="url(#g1)"/><circle cx="484.9" cy="375.2" r="2.3" fill="url(#g1)"/><circle cx="519.6" cy="261.6" r="2.3" fill="url(#g1)"/><circle cx="678.1" cy="491.4" r="2.3" fill="url(#g1)"/><circle cx="521.9" cy="259.5" r="2.3" fill="url(#g1)"/><circle cx="756.4" cy="369.2" r="2.3" fill="url(#g1)"/><circle cx="594.7" cy="504.5" r="2.3" fill="url(#g1)"/><circle cx="625.4" cy="224.3" r="2.3" fill="url(#g1)"/><circle cx="684.5" cy="488.0" r="2.3" fill="url(#g1)"/><circle cx="628.3" cy="224.6" r="2.3" fill="url(#g1)"/><circle cx="474.8" cy="374.2" r="2.3" fill="url(#g1)"/><circle cx="627.5" cy="224.5" r="2.3" fill="url(#g1)"/><circle cx="735.5" cy="439.1" r="2.3" fill="url(#g1)"/><circle cx="509.4" cy="272.1" r="2.3" fill="url(#g1)"/><circle cx="521.3" cy="260.1" r="2.3" fill="url(#g1)"/><circle cx="499.7" cy="445.4" r="2.3" fill="url(#g1)"/><circle cx="753.2" cy="334.5" r="2.3" fill="url(#g1)"/><circle cx="510.7" cy="459.4" r="2.3" fill="url(#g1)"/><circle cx="752.6" cy="398.1" r="2.3" fill="url(#g1)"/><circle cx="662.4" cy="507.5" r="2.3" fill="url(#g1)"/><circle cx="510.7" cy="472.3" r="2.3" fill="url(#g1)"/><circle cx="764.9" cy="378.3" r="2.3" fill="url(#g1)"/><circle cx="549.8" cy="499.8" r="2.3" fill="url(#g1)"/><circle cx="690.4" cy="235.0" r="2.3" fill="url(#g1)"/><circle cx="670.2" cy="504.7" r="2.3" fill="url(#g1)"/><circle cx="548.9" cy="230.6" r="2.3" fill="url(#g1)"/><circle cx="510.6" cy="257.8" r="2.3" fill="url(#g1)"/><circle cx="616.7" cy="525.0" r="2.3" fill="url(#g1)"/><circle cx="559.9" cy="215.0" r="2.3" fill="url(#g1)"/><circle cx="526.1" cy="497.7" r="2.3" fill="url(#g1)"/><circle cx="725.8" cy="480.9" r="2.3" fill="url(#g1)"/><circle cx="496.5" cy="471.9" r="2.3" fill="url(#g1)"/><circle cx="479.7" cy="280.4" r="2.3" fill="url(#g1)"/><circle cx="695.2" cy="503.7" r="2.3" fill="url(#g1)"/><circle cx="687.1" cy="221.9" r="2.3" fill="url(#g1)"/><circle cx="567.8" cy="517.7" r="2.3" fill="url(#g1)"/><circle cx="574.9" cy="519.8" r="2.3" fill="url(#g1)"/><circle cx="593.3" cy="206.5" r="2.3" fill="url(#g1)"/><circle cx="483.9" cy="273.9" r="2.3" fill="url(#g1)"/><circle cx="531.6" cy="501.2" r="2.3" fill="url(#g1)"/><circle cx="737.5" cy="261.5" r="2.3" fill="url(#g1)"/><circle cx="775.4" cy="360.4" r="2.3" fill="url(#g1)"/><circle cx="527.5" cy="498.6" r="2.3" fill="url(#g1)"/><circle cx="745.8" cy="272.1" r="2.3" fill="url(#g1)"/><circle cx="514.1" cy="488.8" r="2.3" fill="url(#g1)"/><circle cx="678.9" cy="520.6" r="2.3" fill="url(#g1)"/><circle cx="774.6" cy="311.2" r="2.3" fill="url(#g1)"/><circle cx="761.8" cy="282.4" r="2.3" fill="url(#g1)"/><circle cx="477.5" cy="460.8" r="2.3" fill="url(#g1)"/><circle cx="638.2" cy="531.5" r="2.3" fill="url(#g1)"/><circle cx="591.5" cy="198.7" r="2.3" fill="url(#g1)"/><circle cx="729.6" cy="488.3" r="2.3" fill="url(#g1)"/><circle cx="598.7" cy="197.8" r="2.3" fill="url(#g1)"/><circle cx="473.5" cy="275.3" r="2.3" fill="url(#g1)"/><circle cx="701.3" cy="518.7" r="2.3" fill="url(#g1)"/><circle cx="497.8" cy="495.8" r="2.3" fill="url(#g1)"/><circle cx="512.5" cy="222.3" r="2.3" fill="url(#g1)"/><circle cx="786.7" cy="405.9" r="2.3" fill="url(#g1)"/><circle cx="741.2" cy="241.8" r="2.3" fill="url(#g1)"/><circle cx="609.1" cy="540.9" r="2.3" fill="url(#g1)"/><circle cx="443.7" cy="326.9" r="2.3" fill="url(#g1)"/><circle cx="783.4" cy="417.9" r="2.3" fill="url(#g1)"/><circle cx="791.4" cy="359.1" r="2.3" fill="url(#g1)"/><circle cx="523.0" cy="215.2" r="2.3" fill="url(#g1)"/><circle cx="515.3" cy="220.3" r="2.3" fill="url(#g1)"/><circle cx="790.1" cy="386.8" r="2.3" fill="url(#g1)"/><circle cx="545.6" cy="189.4" r="2.3" fill="url(#g1)"/><circle cx="451.8" cy="459.4" r="2.3" fill="url(#g1)"/><circle cx="477.5" cy="494.2" r="2.3" fill="url(#g1)"/><circle cx="434.8" cy="309.7" r="2.3" fill="url(#g1)"/><circle cx="428.9" cy="395.3" r="2.3" fill="url(#g1)"/><circle cx="723.6" cy="520.1" r="2.3" fill="url(#g1)"/><circle cx="551.7" cy="187.1" r="2.3" fill="url(#g1)"/><circle cx="486.4" cy="227.0" r="2.3" fill="url(#g1)"/><circle cx="555.8" cy="544.3" r="2.3" fill="url(#g1)"/><circle cx="515.9" cy="204.4" r="2.3" fill="url(#g1)"/><circle cx="516.7" cy="203.9" r="2.3" fill="url(#g1)"/><circle cx="591.8" cy="552.5" r="2.3" fill="url(#g1)"/><circle cx="466.6" cy="248.6" r="2.3" fill="url(#g1)"/><circle cx="738.5" cy="508.5" r="2.3" fill="url(#g1)"/><circle cx="707.2" cy="199.8" r="2.3" fill="url(#g1)"/><circle cx="764.9" cy="480.8" r="2.3" fill="url(#g1)"/><circle cx="576.7" cy="169.8" r="2.3" fill="url(#g1)"/><circle cx="762.5" cy="499.1" r="2.3" fill="url(#g1)"/><circle cx="765.6" cy="495.7" r="2.3" fill="url(#g1)"/><circle cx="771.8" cy="488.2" r="2.3" fill="url(#g1)"/><circle cx="678.6" cy="553.7" r="2.3" fill="url(#g1)"/><circle cx="677.3" cy="554.2" r="2.3" fill="url(#g1)"/><circle cx="599.3" cy="563.3" r="2.3" fill="url(#g1)"/><circle cx="418.6" cy="336.2" r="2.3" fill="url(#g1)"/><circle cx="675.0" cy="554.9" r="2.3" fill="url(#g1)"/><circle cx="558.1" cy="174.5" r="2.3" fill="url(#g1)"/><circle cx="556.5" cy="566.5" r="2.3" fill="url(#g1)"/><circle cx="819.1" cy="416.5" r="2.3" fill="url(#g1)"/><circle cx="405.6" cy="369.8" r="2.3" fill="url(#g1)"/><circle cx="670.7" cy="567.6" r="2.3" fill="url(#g1)"/><circle cx="807.2" cy="279.3" r="2.3" fill="url(#g1)"/><circle cx="513.6" cy="548.6" r="2.3" fill="url(#g1)"/><circle cx="825.5" cy="368.6" r="2.3" fill="url(#g1)"/><circle cx="516.2" cy="179.9" r="2.3" fill="url(#g1)"/><circle cx="790.6" cy="249.0" r="2.3" fill="url(#g1)"/><circle cx="722.7" cy="184.4" r="2.3" fill="url(#g1)"/><circle cx="513.2" cy="181.6" r="2.3" fill="url(#g1)"/><circle cx="739.8" cy="534.2" r="2.3" fill="url(#g1)"/><circle cx="792.8" cy="477.6" r="2.3" fill="url(#g1)"/><circle cx="395.1" cy="348.8" r="2.3" fill="url(#g1)"/><circle cx="579.0" cy="147.0" r="2.3" fill="url(#g1)"/><circle cx="793.2" cy="496.3" r="2.3" fill="url(#g1)"/><circle cx="607.3" cy="585.8" r="2.3" fill="url(#g1)"/><circle cx="641.6" cy="584.5" r="2.3" fill="url(#g1)"/><circle cx="835.9" cy="349.3" r="2.3" fill="url(#g1)"/><circle cx="552.5" cy="576.8" r="2.3" fill="url(#g1)"/><circle cx="400.0" cy="414.2" r="2.3" fill="url(#g1)"/><circle cx="794.4" cy="494.7" r="2.3" fill="url(#g1)"/><circle cx="722.1" cy="573.3" r="2.3" fill="url(#g1)"/><circle cx="842.4" cy="422.4" r="2.3" fill="url(#g1)"/><circle cx="556.5" cy="591.4" r="2.3" fill="url(#g1)"/><circle cx="690.0" cy="143.2" r="2.3" fill="url(#g1)"/><circle cx="525.7" cy="581.1" r="2.3" fill="url(#g1)"/><circle cx="598.7" cy="131.6" r="2.3" fill="url(#g1)"/><circle cx="809.0" cy="496.5" r="2.3" fill="url(#g1)"/><circle cx="627.6" cy="131.3" r="2.3" fill="url(#g1)"/><circle cx="839.8" cy="431.5" r="2.3" fill="url(#g1)"/><circle cx="755.4" cy="177.4" r="2.3" fill="url(#g1)"/><circle cx="487.6" cy="153.7" r="2.3" fill="url(#g1)"/><circle cx="733.8" cy="581.8" r="2.3" fill="url(#g1)"/><circle cx="461.0" cy="557.7" r="2.3" fill="url(#g1)"/><circle cx="387.2" cy="459.2" r="2.3" fill="url(#g1)"/><circle cx="437.4" cy="193.9" r="2.3" fill="url(#g1)"/><circle cx="793.9" cy="194.2" r="2.3" fill="url(#g1)"/><circle cx="821.6" cy="501.2" r="2.3" fill="url(#g1)"/><circle cx="713.5" cy="138.3" r="2.3" fill="url(#g1)"/><circle cx="721.9" cy="602.2" r="2.3" fill="url(#g1)"/><circle cx="404.4" cy="516.8" r="2.3" fill="url(#g1)"/><circle cx="868.2" cy="304.0" r="2.3" fill="url(#g1)"/><circle cx="579.9" cy="622.6" r="2.3" fill="url(#g1)"/><circle cx="419.7" cy="536.1" r="2.3" fill="url(#g1)"/><circle cx="769.2" cy="155.3" r="2.3" fill="url(#g1)"/><circle cx="695.7" cy="117.7" r="2.3" fill="url(#g1)"/><circle cx="461.2" cy="155.8" r="2.3" fill="url(#g1)"/><circle cx="691.0" cy="116.2" r="2.3" fill="url(#g1)"/><circle cx="824.0" cy="544.3" r="2.3" fill="url(#g1)"/><circle cx="524.3" cy="105.6" r="2.3" fill="url(#g1)"/><circle cx="872.0" cy="464.1" r="2.3" fill="url(#g1)"/><circle cx="872.7" cy="267.7" r="2.3" fill="url(#g1)"/><circle cx="763.7" cy="596.6" r="2.3" fill="url(#g1)"/><circle cx="377.9" cy="503.5" r="2.3" fill="url(#g1)"/><circle cx="384.0" cy="216.6" r="2.3" fill="url(#g1)"/><circle cx="704.2" cy="104.7" r="2.3" fill="url(#g1)"/><circle cx="489.4" cy="103.9" r="2.3" fill="url(#g1)"/><circle cx="736.9" cy="628.4" r="2.3" fill="url(#g1)"/><circle cx="404.4" cy="563.8" r="2.3" fill="url(#g1)"/><circle cx="432.6" cy="590.1" r="2.3" fill="url(#g1)"/><circle cx="900.8" cy="417.2" r="2.3" fill="url(#g1)"/><circle cx="499.4" cy="99.2" r="2.3" fill="url(#g1)"/><circle cx="768.6" cy="118.7" r="2.3" fill="url(#g1)"/><circle cx="916.3" cy="314.3" r="2.3" fill="url(#g1)"/><circle cx="823.4" cy="588.2" r="2.3" fill="url(#g1)"/><circle cx="883.1" cy="218.7" r="2.3" fill="url(#g1)"/><circle cx="846.9" cy="563.7" r="2.3" fill="url(#g1)"/><circle cx="356.7" cy="526.3" r="2.3" fill="url(#g1)"/><circle cx="907.9" cy="451.9" r="2.3" fill="url(#g1)"/><circle cx="593.3" cy="669.2" r="2.3" fill="url(#g1)"/><circle cx="495.7" cy="645.5" r="2.3" fill="url(#g1)"/><path d="M755 503h1v1h-1zM663 548h1v1h-1zM775 451h1v1h-1zM765 445h1v1h-1zM509 498h1v1h-1zM568 421h1v1h-1zM662 508h1v1h-1zM753 472h1v1h-1zM443 377h1v1h-1zM733 528h1v1h-1zM522 402h1v1h-1zM572 495h1v1h-1zM741 484h1v1h-1zM592 232h1v1h-1zM680 469h1v1h-1zM422 161h1v1h-1zM724 236h1v1h-1zM653 396h1v1h-1zM648 240h1v1h-1zM433 540h1v1h-1zM646 320h1v1h-1zM518 325h1v1h-1zM537 181h1v1h-1zM654 270h1v1h-1zM676 485h1v1h-1zM588 362h1v1h-1zM515 196h1v1h-1zM630 383h1v1h-1zM805 449h1v1h-1zM624 201h1v1h-1zM650 384h1v1h-1zM556 216h1v1h-1zM649 537h1v1h-1zM729 165h1v1h-1zM447 362h1v1h-1zM606 174h1v1h-1zM680 437h1v1h-1zM395 202h1v1h-1zM800 465h1v1h-1zM711 482h1v1h-1zM550 416h1v1h-1zM682 261h1v1h-1zM730 499h1v1h-1zM628 330h1v1h-1zM581 183h1v1h-1zM509 388h1v1h-1zM564 442h1v1h-1zM787 473h1v1h-1zM702 398h1v1h-1zM761 492h1v1h-1zM581 522h1v1h-1zM626 214h1v1h-1zM444 544h1v1h-1zM732 269h1v1h-1zM396 330h1v1h-1zM576 480h1v1h-1zM804 305h1v1h-1zM675 423h1v1h-1zM586 515h1v1h-1zM449 179h1v1h-1zM479 408h1v1h-1zM466 523h1v1h-1zM775 525h1v1h-1zM604 210h1v1h-1zM525 468h1v1h-1zM495 252h1v1h-1zM456 357h1v1h-1zM505 390h1v1h-1zM795 253h1v1h-1zM761 329h1v1h-1zM450 543h1v1h-1zM607 179h1v1h-1zM719 500h1v1h-1zM696 219h1v1h-1zM790 386h1v1h-1zM629 493h1v1h-1zM696 414h1v1h-1zM463 411h1v1h-1zM397 427h1v1h-1zM771 180h1v1h-1zM678 377h1v1h-1zM694 403h1v1h-1zM655 555h1v1h-1zM485 510h1v1h-1zM691 244h1v1h-1zM769 221h1v1h-1zM448 354h1v1h-1zM731 463h1v1h-1zM705 320h1v1h-1zM653 352h1v1h-1zM609 467h1v1h-1zM749 546h1v1h-1zM522 296h1v1h-1zM598 331h1v1h-1zM545 387h1v1h-1zM807 224h1v1h-1zM465 367h1v1h-1zM703 514h1v1h-1zM778 418h1v1h-1zM548 515h1v1h-1zM675 316h1v1h-1zM759 533h1v1h-1zM678 479h1v1h-1zM506 258h1v1h-1zM502 475h1v1h-1zM760 304h1v1h-1zM746 332h1v1h-1zM739 223h1v1h-1zM758 488h1v1h-1zM486 413h1v1h-1zM672 511h1v1h-1zM721 321h1v1h-1zM758 215h1v1h-1zM784 336h1v1h-1zM682 401h1v1h-1zM693 448h1v1h-1zM736 519h1v1h-1zM608 501h1v1h-1zM777 429h1v1h-1zM541 372h1v1h-1zM808 162h1v1h-1zM662 210h1v1h-1zM407 351h1v1h-1zM469 183h1v1h-1zM738 184h1v1h-1zM497 292h1v1h-1zM779 558h1v1h-1zM477 302h1v1h-1zM744 284h1v1h-1zM469 187h1v1h-1zM748 557h1v1h-1zM546 260h1v1h-1zM780 433h1v1h-1zM411 339h1v1h-1zM626 208h1v1h-1zM710 501h1v1h-1zM773 443h1v1h-1zM509 536h1v1h-1zM726 443h1v1h-1zM594 277h1v1h-1zM656 557h1v1h-1zM802 564h1v1h-1zM751 303h1v1h-1zM749 496h1v1h-1zM419 351h1v1h-1zM593 369h1v1h-1zM798 506h1v1h-1zM555 438h1v1h-1zM422 162h1v1h-1zM775 284h1v1h-1zM498 473h1v1h-1zM794 382h1v1h-1zM510 480h1v1h-1zM755 519h1v1h-1zM726 344h1v1h-1zM781 457h1v1h-1zM674 534h1v1h-1zM703 256h1v1h-1zM792 527h1v1h-1zM494 306h1v1h-1zM624 246h1v1h-1zM744 194h1v1h-1zM490 244h1v1h-1zM771 419h1v1h-1zM456 349h1v1h-1zM415 375h1v1h-1zM537 440h1v1h-1zM530 222h1v1h-1zM477 455h1v1h-1zM525 158h1v1h-1zM564 394h1v1h-1zM758 235h1v1h-1zM415 234h1v1h-1zM560 461h1v1h-1zM421 552h1v1h-1zM715 471h1v1h-1zM733 310h1v1h-1zM646 560h1v1h-1zM688 437h1v1h-1zM578 193h1v1h-1zM796 518h1v1h-1zM557 425h1v1h-1zM507 250h1v1h-1zM661 190h1v1h-1zM797 414h1v1h-1zM476 368h1v1h-1zM673 430h1v1h-1zM601 203h1v1h-1zM573 269h1v1h-1zM504 495h1v1h-1zM564 325h1v1h-1zM579 306h1v1h-1zM506 541h1v1h-1zM711 427h1v1h-1zM638 443h1v1h-1zM780 488h1v1h-1zM399 214h1v1h-1zM737 333h1v1h-1zM623 279h1v1h-1zM723 470h1v1h-1zM713 280h1v1h-1zM415 505h1v1h-1zM559 351h1v1h-1zM802 214h1v1h-1zM592 287h1v1h-1zM671 526h1v1h-1zM539 168h1v1h-1zM659 550h1v1h-1zM586 419h1v1h-1zM806 416h1v1h-1zM623 405h1v1h-1zM417 307h1v1h-1zM728 254h1v1h-1zM559 419h1v1h-1zM437 205h1v1h-1zM480 551h1v1h-1zM670 429h1v1h-1zM398 476h1v1h-1zM428 263h1v1h-1zM738 478h1v1h-1zM791 265h1v1h-1zM745 373h1v1h-1zM448 261h1v1h-1zM670 515h1v1h-1zM774 552h1v1h-1zM617 487h1v1h-1zM431 538h1v1h-1zM746 234h1v1h-1zM407 391h1v1h-1zM762 325h1v1h-1zM414 200h1v1h-1zM432 183h1v1h-1zM486 562h1v1h-1zM523 441h1v1h-1zM431 450h1v1h-1zM511 288h1v1h-1zM603 354h1v1h-1zM625 478h1v1h-1zM602 377h1v1h-1zM556 164h1v1h-1zM594 500h1v1h-1zM455 429h1v1h-1zM398 484h1v1h-1zM763 472h1v1h-1zM427 543h1v1h-1zM776 455h1v1h-1zM418 514h1v1h-1zM432 339h1v1h-1zM652 210h1v1h-1zM543 558h1v1h-1zM746 310h1v1h-1zM705 200h1v1h-1zM539 547h1v1h-1zM619 351h1v1h-1zM597 494h1v1h-1zM410 398h1v1h-1zM475 429h1v1h-1zM507 225h1v1h-1zM777 356h1v1h-1zM802 564h1v1h-1zM674 307h1v1h-1zM719 229h1v1h-1zM547 502h1v1h-1zM802 529h1v1h-1zM726 347h1v1h-1zM400 439h1v1h-1zM679 228h1v1h-1zM458 177h1v1h-1zM397 449h1v1h-1zM700 357h1v1h-1zM670 436h1v1h-1zM438 312h1v1h-1zM502 539h1v1h-1zM774 527h1v1h-1zM571 264h1v1h-1zM606 486h1v1h-1zM657 228h1v1h-1zM477 250h1v1h-1zM508 471h1v1h-1zM524 255h1v1h-1zM453 248h1v1h-1zM738 565h1v1h-1zM685 183h1v1h-1zM779 437h1v1h-1zM631 486h1v1h-1zM676 193h1v1h-1zM543 499h1v1h-1zM429 284h1v1h-1zM445 257h1v1h-1zM766 453h1v1h-1zM644 325h1v1h-1zM577 221h1v1h-1zM738 491h1v1h-1zM515 207h1v1h-1zM540 473h1v1h-1zM430 255h1v1h-1zM557 404h1v1h-1zM625 324h1v1h-1zM710 493h1v1h-1zM551 511h1v1h-1zM694 234h1v1h-1zM684 446h1v1h-1zM581 569h1v1h-1zM556 375h1v1h-1zM481 158h1v1h-1zM555 282h1v1h-1zM797 269h1v1h-1zM759 534h1v1h-1zM723 379h1v1h-1zM536 340h1v1h-1zM463 503h1v1h-1zM770 325h1v1h-1zM640 392h1v1h-1zM623 339h1v1h-1zM791 312h1v1h-1zM644 438h1v1h-1zM450 245h1v1h-1zM725 466h1v1h-1zM436 299h1v1h-1zM466 431h1v1h-1zM495 290h1v1h-1zM770 476h1v1h-1zM434 528h1v1h-1zM433 165h1v1h-1zM654 479h1v1h-1zM410 453h1v1h-1zM691 363h1v1h-1zM788 458h1v1h-1zM503 174h1v1h-1zM677 289h1v1h-1zM673 432h1v1h-1zM636 490h1v1h-1zM791 232h1v1h-1zM582 356h1v1h-1zM509 551h1v1h-1zM696 531h1v1h-1zM543 224h1v1h-1zM632 412h1v1h-1zM656 202h1v1h-1zM598 342h1v1h-1zM652 161h1v1h-1zM734 278h1v1h-1zM807 470h1v1h-1zM745 240h1v1h-1zM782 419h1v1h-1zM466 384h1v1h-1zM476 247h1v1h-1zM684 445h1v1h-1zM732 230h1v1h-1zM771 530h1v1h-1zM642 339h1v1h-1zM415 268h1v1h-1zM784 405h1v1h-1zM513 188h1v1h-1zM530 345h1v1h-1zM514 177h1v1h-1zM737 261h1v1h-1zM660 561h1v1h-1zM579 354h1v1h-1zM635 388h1v1h-1zM418 176h1v1h-1zM727 321h1v1h-1zM447 516h1v1h-1zM661 480h1v1h-1zM535 535h1v1h-1zM529 452h1v1h-1zM673 447h1v1h-1zM484 348h1v1h-1zM729 349h1v1h-1zM582 456h1v1h-1zM729 195h1v1h-1zM659 284h1v1h-1zM587 270h1v1h-1zM659 363h1v1h-1zM575 332h1v1h-1zM644 561h1v1h-1zM641 465h1v1h-1zM398 412h1v1h-1zM466 381h1v1h-1zM479 273h1v1h-1zM434 419h1v1h-1zM724 299h1v1h-1zM503 232h1v1h-1zM490 236h1v1h-1zM580 464h1v1h-1zM762 216h1v1h-1zM733 273h1v1h-1zM607 571h1v1h-1zM564 524h1v1h-1zM453 402h1v1h-1zM740 401h1v1h-1zM640 263h1v1h-1zM697 238h1v1h-1zM726 366h1v1h-1zM406 280h1v1h-1zM417 221h1v1h-1zM688 459h1v1h-1zM477 224h1v1h-1zM717 418h1v1h-1zM415 449h1v1h-1zM470 184h1v1h-1zM480 288h1v1h-1zM487 420h1v1h-1zM602 462h1v1h-1zM683 482h1v1h-1zM404 524h1v1h-1zM767 494h1v1h-1zM540 199h1v1h-1zM505 385h1v1h-1zM705 397h1v1h-1zM641 243h1v1h-1zM507 366h1v1h-1zM702 229h1v1h-1zM801 454h1v1h-1zM787 249h1v1h-1zM714 493h1v1h-1zM656 291h1v1h-1zM480 526h1v1h-1zM746 331h1v1h-1zM627 461h1v1h-1zM697 191h1v1h-1zM512 349h1v1h-1zM592 223h1v1h-1zM450 164h1v1h-1zM498 423h1v1h-1zM653 506h1v1h-1zM609 232h1v1h-1zM705 205h1v1h-1zM485 399h1v1h-1zM709 463h1v1h-1zM414 557h1v1h-1zM667 413h1v1h-1zM780 216h1v1h-1zM442 402h1v1h-1zM732 222h1v1h-1zM703 432h1v1h-1zM395 552h1v1h-1zM742 488h1v1h-1zM615 423h1v1h-1zM610 345h1v1h-1zM417 513h1v1h-1zM666 375h1v1h-1zM512 566h1v1h-1zM641 560h1v1h-1zM788 351h1v1h-1zM574 457h1v1h-1zM806 535h1v1h-1zM784 512h1v1h-1zM689 206h1v1h-1zM612 224h1v1h-1zM525 400h1v1h-1zM787 275h1v1h-1zM437 301h1v1h-1zM701 434h1v1h-1zM604 287h1v1h-1zM491 158h1v1h-1zM758 536h1v1h-1zM799 159h1v1h-1zM690 423h1v1h-1zM455 422h1v1h-1zM398 348h1v1h-1zM730 261h1v1h-1zM747 567h1v1h-1zM556 365h1v1h-1zM580 210h1v1h-1zM474 374h1v1h-1zM728 455h1v1h-1zM524 289h1v1h-1zM669 372h1v1h-1zM684 343h1v1h-1zM708 297h1v1h-1zM743 359h1v1h-1zM781 260h1v1h-1zM606 438h1v1h-1zM796 441h1v1h-1zM642 247h1v1h-1zM584 442h1v1h-1zM679 403h1v1h-1zM524 313h1v1h-1zM690 332h1v1h-1zM791 517h1v1h-1zM598 532h1v1h-1zM465 493h1v1h-1zM455 538h1v1h-1zM512 384h1v1h-1zM795 514h1v1h-1zM477 207h1v1h-1zM504 416h1v1h-1zM600 558h1v1h-1zM568 566h1v1h-1zM676 470h1v1h-1zM751 506h1v1h-1zM756 182h1v1h-1zM477 355h1v1h-1zM720 158h1v1h-1zM806 202h1v1h-1zM469 397h1v1h-1zM702 378h1v1h-1zM440 188h1v1h-1zM529 269h1v1h-1zM584 196h1v1h-1zM706 175h1v1h-1zM765 352h1v1h-1zM600 470h1v1h-1zM730 422h1v1h-1zM541 520h1v1h-1zM700 185h1v1h-1zM791 245h1v1h-1zM722 409h1v1h-1zM619 161h1v1h-1zM498 492h1v1h-1zM806 421h1v1h-1zM541 255h1v1h-1zM412 557h1v1h-1zM701 417h1v1h-1zM659 513h1v1h-1zM513 470h1v1h-1zM481 501h1v1h-1zM413 340h1v1h-1zM517 491h1v1h-1zM395 236h1v1h-1zM439 297h1v1h-1zM794 360h1v1h-1zM575 498h1v1h-1zM597 363h1v1h-1zM695 258h1v1h-1zM660 163h1v1h-1zM772 516h1v1h-1zM430 202h1v1h-1zM676 301h1v1h-1zM766 442h1v1h-1zM693 334h1v1h-1zM572 297h1v1h-1zM510 466h1v1h-1zM494 388h1v1h-1zM601 450h1v1h-1zM397 289h1v1h-1zM484 364h1v1h-1zM654 210h1v1h-1zM681 193h1v1h-1zM652 306h1v1h-1zM569 215h1v1h-1zM806 418h1v1h-1zM526 431h1v1h-1zM801 450h1v1h-1zM523 511h1v1h-1zM621 349h1v1h-1zM683 403h1v1h-1zM789 280h1v1h-1zM782 329h1v1h-1zM792 390h1v1h-1zM743 391h1v1h-1zM695 170h1v1h-1zM641 215h1v1h-1zM527 190h1v1h-1zM590 480h1v1h-1zM798 268h1v1h-1zM741 515h1v1h-1zM512 565h1v1h-1zM556 367h1v1h-1zM575 420h1v1h-1zM669 160h1v1h-1zM753 290h1v1h-1zM522 303h1v1h-1zM442 360h1v1h-1zM739 539h1v1h-1zM570 194h1v1h-1zM678 247h1v1h-1zM638 316h1v1h-1zM576 267h1v1h-1zM688 293h1v1h-1zM488 538h1v1h-1zM744 253h1v1h-1zM650 533h1v1h-1zM497 276h1v1h-1zM771 279h1v1h-1zM530 261h1v1h-1zM512 259h1v1h-1zM522 472h1v1h-1zM577 235h1v1h-1zM793 210h1v1h-1zM456 196h1v1h-1zM741 495h1v1h-1zM647 470h1v1h-1zM398 547h1v1h-1zM672 177h1v1h-1zM641 346h1v1h-1zM712 317h1v1h-1zM647 450h1v1h-1zM535 407h1v1h-1zM488 547h1v1h-1zM656 299h1v1h-1zM598 269h1v1h-1zM779 451h1v1h-1zM460 183h1v1h-1zM664 565h1v1h-1zM611 400h1v1h-1zM671 172h1v1h-1zM652 333h1v1h-1zM596 507h1v1h-1zM792 245h1v1h-1zM629 217h1v1h-1zM752 421h1v1h-1zM630 317h1v1h-1zM747 160h1v1h-1zM401 501h1v1h-1zM502 350h1v1h-1zM692 207h1v1h-1zM561 341h1v1h-1zM708 288h1v1h-1zM490 436h1v1h-1zM529 277h1v1h-1zM532 397h1v1h-1zM708 331h1v1h-1zM582 250h1v1h-1zM650 373h1v1h-1zM502 370h1v1h-1zM753 541h1v1h-1zM585 342h1v1h-1zM600 299h1v1h-1zM625 248h1v1h-1zM687 223h1v1h-1zM689 507h1v1h-1zM512 207h1v1h-1zM764 294h1v1h-1zM806 276h1v1h-1zM679 377h1v1h-1zM590 256h1v1h-1zM469 565h1v1h-1zM773 232h1v1h-1zM637 568h1v1h-1zM399 246h1v1h-1zM610 411h1v1h-1zM463 478h1v1h-1zM659 429h1v1h-1zM763 317h1v1h-1zM797 405h1v1h-1zM548 284h1v1h-1zM682 446h1v1h-1zM419 359h1v1h-1zM445 509h1v1h-1zM478 186h1v1h-1zM505 286h1v1h-1zM638 478h1v1h-1zM444 386h1v1h-1zM776 327h1v1h-1zM528 340h1v1h-1zM579 442h1v1h-1zM680 570h1v1h-1zM526 332h1v1h-1zM405 366h1v1h-1zM457 335h1v1h-1zM742 466h1v1h-1zM496 451h1v1h-1zM689 488h1v1h-1zM727 431h1v1h-1zM484 555h1v1h-1zM540 337h1v1h-1zM561 500h1v1h-1zM656 405h1v1h-1zM791 533h1v1h-1zM623 196h1v1h-1zM590 470h1v1h-1zM541 393h1v1h-1zM718 230h1v1h-1zM480 483h1v1h-1zM808 328h1v1h-1zM610 479h1v1h-1zM708 448h1v1h-1zM602 192h1v1h-1zM435 238h1v1h-1zM570 272h1v1h-1zM555 318h1v1h-1zM729 305h1v1h-1zM758 292h1v1h-1zM704 486h1v1h-1zM597 294h1v1h-1zM622 555h1v1h-1zM580 538h1v1h-1zM695 422h1v1h-1zM625 367h1v1h-1zM480 250h1v1h-1zM406 220h1v1h-1zM767 276h1v1h-1zM733 284h1v1h-1zM775 514h1v1h-1zM778 196h1v1h-1zM502 241h1v1h-1zM598 208h1v1h-1zM443 188h1v1h-1zM637 436h1v1h-1zM422 169h1v1h-1zM789 359h1v1h-1zM663 547h1v1h-1zM437 209h1v1h-1zM529 472h1v1h-1zM474 199h1v1h-1zM730 355h1v1h-1zM553 273h1v1h-1zM521 533h1v1h-1zM540 382h1v1h-1zM715 220h1v1h-1zM462 425h1v1h-1zM482 170h1v1h-1zM412 495h1v1h-1zM577 322h1v1h-1zM638 395h1v1h-1zM671 295h1v1h-1zM675 383h1v1h-1zM464 513h1v1h-1zM671 246h1v1h-1zM697 461h1v1h-1zM628 479h1v1h-1zM778 481h1v1h-1zM683 378h1v1h-1zM663 483h1v1h-1zM722 429h1v1h-1zM553 333h1v1h-1zM641 432h1v1h-1zM511 568h1v1h-1zM440 382h1v1h-1zM552 343h1v1h-1zM606 289h1v1h-1zM474 311h1v1h-1zM400 156h1v1h-1zM662 544h1v1h-1zM464 332h1v1h-1zM541 396h1v1h-1zM668 160h1v1h-1zM747 407h1v1h-1zM781 400h1v1h-1zM548 160h1v1h-1zM787 376h1v1h-1zM803 305h1v1h-1zM700 274h1v1h-1zM802 159h1v1h-1zM675 347h1v1h-1zM491 366h1v1h-1zM682 379h1v1h-1zM597 283h1v1h-1zM478 522h1v1h-1zM772 486h1v1h-1zM594 349h1v1h-1zM507 290h1v1h-1zM435 372h1v1h-1zM715 278h1v1h-1zM659 547h1v1h-1zM804 469h1v1h-1zM808 511h1v1h-1zM745 295h1v1h-1zM540 488h1v1h-1zM775 428h1v1h-1zM809 293h1v1h-1zM606 252h1v1h-1zM430 249h1v1h-1zM464 304h1v1h-1zM451 482h1v1h-1zM628 472h1v1h-1zM626 295h1v1h-1zM753 474h1v1h-1zM646 252h1v1h-1zM559 165h1v1h-1zM472 181h1v1h-1zM668 167h1v1h-1zM490 208h1v1h-1zM539 293h1v1h-1zM459 522h1v1h-1zM619 528h1v1h-1zM399 275h1v1h-1zM441 233h1v1h-1zM402 408h1v1h-1zM506 331h1v1h-1zM610 315h1v1h-1zM797 565h1v1h-1zM650 346h1v1h-1zM632 512h1v1h-1zM800 172h1v1h-1zM564 197h1v1h-1zM779 230h1v1h-1zM423 292h1v1h-1zM792 356h1v1h-1zM431 434h1v1h-1zM635 248h1v1h-1zM493 284h1v1h-1zM590 162h1v1h-1zM457 549h1v1h-1zM760 283h1v1h-1zM592 550h1v1h-1zM621 282h1v1h-1zM772 173h1v1h-1zM496 391h1v1h-1zM771 550h1v1h-1zM443 422h1v1h-1zM735 262h1v1h-1zM637 355h1v1h-1zM743 315h1v1h-1zM560 237h1v1h-1zM717 528h1v1h-1zM416 537h1v1h-1zM676 422h1v1h-1zM457 285h1v1h-1zM641 482h1v1h-1zM547 257h1v1h-1zM579 182h1v1h-1zM736 267h1v1h-1zM452 276h1v1h-1zM719 378h1v1h-1zM561 163h1v1h-1zM480 562h1v1h-1zM536 455h1v1h-1zM456 358h1v1h-1zM799 280h1v1h-1zM399 177h1v1h-1zM692 557h1v1h-1zM748 399h1v1h-1zM747 461h1v1h-1zM474 346h1v1h-1zM789 201h1v1h-1zM522 236h1v1h-1zM650 202h1v1h-1zM746 472h1v1h-1zM568 544h1v1h-1zM715 186h1v1h-1zM425 338h1v1h-1zM725 234h1v1h-1zM754 430h1v1h-1zM800 210h1v1h-1zM459 405h1v1h-1zM514 318h1v1h-1zM680 559h1v1h-1zM725 543h1v1h-1zM572 568h1v1h-1zM619 531h1v1h-1zM493 166h1v1h-1zM747 349h1v1h-1zM578 526h1v1h-1zM463 284h1v1h-1zM415 404h1v1h-1zM756 380h1v1h-1zM681 306h1v1h-1zM672 512h1v1h-1zM645 253h1v1h-1zM685 251h1v1h-1zM673 334h1v1h-1zM560 530h1v1h-1zM634 296h1v1h-1zM701 439h1v1h-1zM477 191h1v1h-1zM666 235h1v1h-1zM625 307h1v1h-1zM529 433h1v1h-1zM582 388h1v1h-1zM395 553h1v1h-1zM721 415h1v1h-1zM589 531h1v1h-1zM489 165h1v1h-1zM712 342h1v1h-1zM792 473h1v1h-1zM517 320h1v1h-1zM764 188h1v1h-1zM732 431h1v1h-1zM593 253h1v1h-1zM663 505h1v1h-1zM649 548h1v1h-1zM677 234h1v1h-1zM708 300h1v1h-1zM560 365h1v1h-1zM723 320h1v1h-1zM451 205h1v1h-1zM662 493h1v1h-1zM429 178h1v1h-1zM461 247h1v1h-1zM411 259h1v1h-1zM449 404h1v1h-1zM493 206h1v1h-1zM411 448h1v1h-1zM723 354h1v1h-1zM731 406h1v1h-1zM664 475h1v1h-1zM754 458h1v1h-1zM526 181h1v1h-1zM582 269h1v1h-1zM705 523h1v1h-1zM431 162h1v1h-1zM501 491h1v1h-1zM646 196h1v1h-1zM634 566h1v1h-1zM722 187h1v1h-1zM579 441h1v1h-1zM775 368h1v1h-1zM583 562h1v1h-1zM757 185h1v1h-1zM710 292h1v1h-1zM665 176h1v1h-1zM770 192h1v1h-1zM550 195h1v1h-1zM505 421h1v1h-1zM444 207h1v1h-1zM766 274h1v1h-1zM667 353h1v1h-1zM492 254h1v1h-1zM664 492h1v1h-1zM522 447h1v1h-1zM715 247h1v1h-1zM680 539h1v1h-1zM680 368h1v1h-1zM777 210h1v1h-1zM787 482h1v1h-1zM690 339h1v1h-1zM740 390h1v1h-1zM754 496h1v1h-1zM613 209h1v1h-1zM480 561h1v1h-1zM487 437h1v1h-1zM600 414h1v1h-1zM567 492h1v1h-1zM475 429h1v1h-1zM702 382h1v1h-1zM575 317h1v1h-1zM676 322h1v1h-1zM585 367h1v1h-1zM786 480h1v1h-1zM615 527h1v1h-1zM560 467h1v1h-1zM518 444h1v1h-1zM674 265h1v1h-1zM587 548h1v1h-1zM676 537h1v1h-1zM525 340h1v1h-1zM626 385h1v1h-1zM598 156h1v1h-1zM766 173h1v1h-1zM540 461h1v1h-1zM403 421h1v1h-1zM464 310h1v1h-1zM398 309h1v1h-1zM508 265h1v1h-1zM556 167h1v1h-1zM790 509h1v1h-1zM536 439h1v1h-1zM656 440h1v1h-1zM687 448h1v1h-1zM474 204h1v1h-1zM414 391h1v1h-1zM577 235h1v1h-1zM465 291h1v1h-1zM582 454h1v1h-1zM522 275h1v1h-1zM526 571h1v1h-1zM548 203h1v1h-1zM687 360h1v1h-1zM686 267h1v1h-1zM770 195h1v1h-1zM765 322h1v1h-1zM800 403h1v1h-1zM483 405h1v1h-1zM748 515h1v1h-1zM690 204h1v1h-1zM699 484h1v1h-1zM548 175h1v1h-1zM769 569h1v1h-1zM690 351h1v1h-1zM435 555h1v1h-1zM423 550h1v1h-1zM566 334h1v1h-1zM617 369h1v1h-1zM456 550h1v1h-1zM511 538h1v1h-1zM729 464h1v1h-1zM400 480h1v1h-1zM793 479h1v1h-1zM590 183h1v1h-1zM551 424h1v1h-1zM416 319h1v1h-1zM671 445h1v1h-1zM471 323h1v1h-1zM652 513h1v1h-1zM508 234h1v1h-1zM420 500h1v1h-1zM769 357h1v1h-1zM623 541h1v1h-1zM699 450h1v1h-1zM653 202h1v1h-1zM508 377h1v1h-1zM543 558h1v1h-1zM596 231h1v1h-1zM462 328h1v1h-1zM437 399h1v1h-1zM687 537h1v1h-1zM420 436h1v1h-1zM599 290h1v1h-1zM438 360h1v1h-1zM651 378h1v1h-1zM791 513h1v1h-1zM461 546h1v1h-1zM464 402h1v1h-1zM681 257h1v1h-1zM644 358h1v1h-1zM728 448h1v1h-1zM495 443h1v1h-1zM710 532h1v1h-1zM663 282h1v1h-1zM519 192h1v1h-1zM531 553h1v1h-1zM615 321h1v1h-1zM745 450h1v1h-1zM440 213h1v1h-1zM738 367h1v1h-1zM611 343h1v1h-1zM573 253h1v1h-1zM559 332h1v1h-1zM699 491h1v1h-1zM407 550h1v1h-1zM551 242h1v1h-1zM574 471h1v1h-1zM806 382h1v1h-1zM714 230h1v1h-1zM620 178h1v1h-1zM514 258h1v1h-1zM745 347h1v1h-1zM474 543h1v1h-1zM767 199h1v1h-1zM452 534h1v1h-1zM422 280h1v1h-1zM712 231h1v1h-1zM542 163h1v1h-1zM570 511h1v1h-1zM806 212h1v1h-1zM551 386h1v1h-1zM636 167h1v1h-1zM564 263h1v1h-1zM773 431h1v1h-1zM503 260h1v1h-1zM674 423h1v1h-1zM779 288h1v1h-1zM675 403h1v1h-1zM713 529h1v1h-1zM467 511h1v1h-1zM752 498h1v1h-1zM404 348h1v1h-1zM693 495h1v1h-1zM664 178h1v1h-1zM525 243h1v1h-1zM425 301h1v1h-1zM497 560h1v1h-1zM751 472h1v1h-1zM533 183h1v1h-1zM633 491h1v1h-1zM399 190h1v1h-1zM593 494h1v1h-1zM533 495h1v1h-1zM732 340h1v1h-1zM450 165h1v1h-1zM544 488h1v1h-1zM592 274h1v1h-1zM589 416h1v1h-1zM758 206h1v1h-1zM556 404h1v1h-1zM700 428h1v1h-1zM440 251h1v1h-1zM496 412h1v1h-1zM629 443h1v1h-1zM759 167h1v1h-1zM415 282h1v1h-1zM666 312h1v1h-1zM565 406h1v1h-1zM596 537h1v1h-1zM475 165h1v1h-1zM572 506h1v1h-1zM575 337h1v1h-1zM715 310h1v1h-1zM515 412h1v1h-1zM536 571h1v1h-1zM426 476h1v1h-1zM526 354h1v1h-1zM410 440h1v1h-1zM538 271h1v1h-1zM472 330h1v1h-1zM596 492h1v1h-1zM465 200h1v1h-1zM768 351h1v1h-1zM661 503h1v1h-1zM708 476h1v1h-1zM746 272h1v1h-1zM608 279h1v1h-1zM688 234h1v1h-1zM613 315h1v1h-1zM704 324h1v1h-1zM624 433h1v1h-1zM462 261h1v1h-1zM729 226h1v1h-1zM692 433h1v1h-1zM745 565h1v1h-1zM498 226h1v1h-1zM553 508h1v1h-1zM756 424h1v1h-1zM464 376h1v1h-1zM789 230h1v1h-1zM730 445h1v1h-1zM475 318h1v1h-1zM429 441h1v1h-1zM667 524h1v1h-1zM455 250h1v1h-1zM557 230h1v1h-1zM767 171h1v1h-1zM786 319h1v1h-1zM606 366h1v1h-1zM550 382h1v1h-1zM776 482h1v1h-1zM773 296h1v1h-1zM472 554h1v1h-1zM491 210h1v1h-1zM462 250h1v1h-1zM408 546h1v1h-1zM708 471h1v1h-1zM531 466h1v1h-1zM685 469h1v1h-1zM513 461h1v1h-1zM513 274h1v1h-1zM746 169h1v1h-1zM578 196h1v1h-1zM747 555h1v1h-1zM639 224h1v1h-1zM652 465h1v1h-1zM635 520h1v1h-1zM727 347h1v1h-1zM489 354h1v1h-1zM646 398h1v1h-1zM465 239h1v1h-1zM493 271h1v1h-1zM411 365h1v1h-1zM786 163h1v1h-1zM533 367h1v1h-1zM508 536h1v1h-1zM738 259h1v1h-1zM782 260h1v1h-1zM428 246h1v1h-1zM619 471h1v1h-1zM645 508h1v1h-1zM561 390h1v1h-1zM521 374h1v1h-1zM602 553h1v1h-1zM416 467h1v1h-1zM771 350h1v1h-1zM763 316h1v1h-1zM596 469h1v1h-1zM775 448h1v1h-1zM699 430h1v1h-1zM663 484h1v1h-1zM755 558h1v1h-1zM414 422h1v1h-1zM450 387h1v1h-1zM628 177h1v1h-1zM520 421h1v1h-1zM670 358h1v1h-1zM771 176h1v1h-1zM680 354h1v1h-1zM659 547h1v1h-1zM717 181h1v1h-1zM492 305h1v1h-1zM620 359h1v1h-1zM550 552h1v1h-1zM541 392h1v1h-1zM480 372h1v1h-1zM545 469h1v1h-1zM422 509h1v1h-1zM659 228h1v1h-1zM632 486h1v1h-1zM626 202h1v1h-1zM764 412h1v1h-1zM452 248h1v1h-1zM793 455h1v1h-1zM751 435h1v1h-1zM464 357h1v1h-1zM606 321h1v1h-1zM625 168h1v1h-1zM486 388h1v1h-1zM697 520h1v1h-1zM498 388h1v1h-1zM441 284h1v1h-1zM560 510h1v1h-1zM727 520h1v1h-1zM802 239h1v1h-1zM762 531h1v1h-1zM458 202h1v1h-1zM453 517h1v1h-1zM625 480h1v1h-1zM580 199h1v1h-1zM663 518h1v1h-1zM591 528h1v1h-1zM800 417h1v1h-1zM708 237h1v1h-1zM588 437h1v1h-1zM589 178h1v1h-1zM788 243h1v1h-1zM566 445h1v1h-1zM732 232h1v1h-1zM478 230h1v1h-1zM486 549h1v1h-1zM759 182h1v1h-1zM609 313h1v1h-1zM553 529h1v1h-1zM788 384h1v1h-1zM542 476h1v1h-1zM487 216h1v1h-1zM462 259h1v1h-1zM396 474h1v1h-1zM786 285h1v1h-1zM401 390h1v1h-1zM649 411h1v1h-1zM673 569h1v1h-1zM397 467h1v1h-1zM647 277h1v1h-1zM506 457h1v1h-1zM732 399h1v1h-1zM627 365h1v1h-1zM621 196h1v1h-1zM702 463h1v1h-1zM398 281h1v1h-1zM675 298h1v1h-1zM712 477h1v1h-1zM680 262h1v1h-1zM420 250h1v1h-1zM470 184h1v1h-1zM729 334h1v1h-1zM413 230h1v1h-1zM411 497h1v1h-1zM690 464h1v1h-1zM547 325h1v1h-1zM439 181h1v1h-1zM450 369h1v1h-1zM486 238h1v1h-1zM739 301h1v1h-1zM707 494h1v1h-1zM749 514h1v1h-1zM699 449h1v1h-1zM798 443h1v1h-1zM485 389h1v1h-1zM778 452h1v1h-1zM579 174h1v1h-1zM442 549h1v1h-1zM548 321h1v1h-1zM583 350h1v1h-1zM429 544h1v1h-1zM613 437h1v1h-1zM428 305h1v1h-1zM636 224h1v1h-1zM457 511h1v1h-1zM535 324h1v1h-1zM664 367h1v1h-1zM663 263h1v1h-1zM751 263h1v1h-1zM708 185h1v1h-1zM450 448h1v1h-1zM768 478h1v1h-1zM665 200h1v1h-1zM642 526h1v1h-1zM747 465h1v1h-1zM798 517h1v1h-1zM542 374h1v1h-1zM706 318h1v1h-1zM527 425h1v1h-1zM689 475h1v1h-1zM576 222h1v1h-1zM709 444h1v1h-1zM649 422h1v1h-1zM768 479h1v1h-1zM649 408h1v1h-1zM808 248h1v1h-1zM707 275h1v1h-1zM757 304h1v1h-1zM494 156h1v1h-1zM455 168h1v1h-1zM633 476h1v1h-1zM802 216h1v1h-1zM772 262h1v1h-1zM804 471h1v1h-1zM607 367h1v1h-1zM418 326h1v1h-1zM574 442h1v1h-1zM807 482h1v1h-1zM503 161h1v1h-1zM722 259h1v1h-1zM748 300h1v1h-1zM525 560h1v1h-1zM429 313h1v1h-1zM548 415h1v1h-1zM676 321h1v1h-1zM787 159h1v1h-1zM453 507h1v1h-1zM565 330h1v1h-1zM597 526h1v1h-1zM686 471h1v1h-1zM409 245h1v1h-1zM494 325h1v1h-1zM568 500h1v1h-1zM640 398h1v1h-1zM803 174h1v1h-1zM725 225h1v1h-1zM641 235h1v1h-1zM716 391h1v1h-1zM669 327h1v1h-1zM631 557h1v1h-1zM606 536h1v1h-1zM423 422h1v1h-1zM548 445h1v1h-1zM766 503h1v1h-1zM556 440h1v1h-1zM669 165h1v1h-1zM501 451h1v1h-1zM745 325h1v1h-1zM804 563h1v1h-1zM576 189h1v1h-1zM471 299h1v1h-1zM410 329h1v1h-1zM587 476h1v1h-1zM668 240h1v1h-1zM687 466h1v1h-1zM594 251h1v1h-1zM699 215h1v1h-1zM795 540h1v1h-1zM552 517h1v1h-1zM556 519h1v1h-1zM411 295h1v1h-1zM606 200h1v1h-1zM649 277h1v1h-1zM585 387h1v1h-1zM549 266h1v1h-1zM663 310h1v1h-1zM484 213h1v1h-1zM586 557h1v1h-1zM414 554h1v1h-1zM498 203h1v1h-1zM622 415h1v1h-1zM407 565h1v1h-1zM642 412h1v1h-1zM473 253h1v1h-1zM569 403h1v1h-1zM770 424h1v1h-1zM553 553h1v1h-1zM562 229h1v1h-1zM788 206h1v1h-1zM659 502h1v1h-1zM462 261h1v1h-1zM765 174h1v1h-1zM630 354h1v1h-1zM760 423h1v1h-1zM454 158h1v1h-1zM554 178h1v1h-1zM746 460h1v1h-1zM439 326h1v1h-1zM634 179h1v1h-1zM447 422h1v1h-1zM787 493h1v1h-1zM776 315h1v1h-1zM406 451h1v1h-1zM783 315h1v1h-1zM722 263h1v1h-1zM559 258h1v1h-1zM493 302h1v1h-1zM536 428h1v1h-1zM558 551h1v1h-1zM620 499h1v1h-1zM455 295h1v1h-1zM471 236h1v1h-1zM535 214h1v1h-1zM402 474h1v1h-1zM681 419h1v1h-1zM447 261h1v1h-1zM672 335h1v1h-1zM676 319h1v1h-1zM533 228h1v1h-1zM755 567h1v1h-1zM540 449h1v1h-1zM520 243h1v1h-1zM431 315h1v1h-1zM708 329h1v1h-1zM671 383h1v1h-1zM420 222h1v1h-1zM409 397h1v1h-1zM740 181h1v1h-1zM449 352h1v1h-1zM422 200h1v1h-1zM613 356h1v1h-1zM486 516h1v1h-1zM700 459h1v1h-1zM717 509h1v1h-1zM753 384h1v1h-1zM710 338h1v1h-1zM554 326h1v1h-1zM496 521h1v1h-1zM783 499h1v1h-1zM809 429h1v1h-1zM435 542h1v1h-1zM786 394h1v1h-1zM685 223h1v1h-1zM442 566h1v1h-1zM752 395h1v1h-1zM444 389h1v1h-1zM553 506h1v1h-1zM724 519h1v1h-1zM787 394h1v1h-1zM635 274h1v1h-1zM509 229h1v1h-1zM710 288h1v1h-1zM581 356h1v1h-1zM488 514h1v1h-1zM735 325h1v1h-1zM798 322h1v1h-1zM627 405h1v1h-1zM410 189h1v1h-1zM638 213h1v1h-1zM574 401h1v1h-1zM631 243h1v1h-1zM539 549h1v1h-1zM573 465h1v1h-1zM689 221h1v1h-1zM655 208h1v1h-1zM602 521h1v1h-1zM802 210h1v1h-1zM561 440h1v1h-1zM727 192h1v1h-1zM800 310h1v1h-1zM667 392h1v1h-1zM600 458h1v1h-1zM606 278h1v1h-1zM712 280h1v1h-1zM675 237h1v1h-1zM641 352h1v1h-1zM428 330h1v1h-1zM501 511h1v1h-1zM697 376h1v1h-1zM796 378h1v1h-1zM685 559h1v1h-1zM570 434h1v1h-1zM750 276h1v1h-1zM483 495h1v1h-1zM737 195h1v1h-1zM773 520h1v1h-1zM688 405h1v1h-1zM453 459h1v1h-1zM700 393h1v1h-1zM561 440h1v1h-1zM444 383h1v1h-1zM485 313h1v1h-1zM602 191h1v1h-1zM701 211h1v1h-1zM745 461h1v1h-1zM789 350h1v1h-1zM562 409h1v1h-1zM725 494h1v1h-1zM426 202h1v1h-1zM506 227h1v1h-1zM692 542h1v1h-1zM720 570h1v1h-1zM395 543h1v1h-1zM470 494h1v1h-1zM471 387h1v1h-1zM667 305h1v1h-1zM594 471h1v1h-1zM690 384h1v1h-1zM495 261h1v1h-1zM743 318h1v1h-1zM548 447h1v1h-1zM801 503h1v1h-1zM550 378h1v1h-1zM762 332h1v1h-1zM440 454h1v1h-1zM399 469h1v1h-1zM656 362h1v1h-1zM460 306h1v1h-1zM426 345h1v1h-1zM676 183h1v1h-1zM395 516h1v1h-1zM681 339h1v1h-1zM451 300h1v1h-1zM410 276h1v1h-1zM616 515h1v1h-1zM697 357h1v1h-1zM715 318h1v1h-1zM759 351h1v1h-1zM602 351h1v1h-1zM617 435h1v1h-1zM503 495h1v1h-1zM483 399h1v1h-1zM466 252h1v1h-1zM679 352h1v1h-1zM579 369h1v1h-1zM473 303h1v1h-1zM738 220h1v1h-1zM463 161h1v1h-1zM431 487h1v1h-1zM403 229h1v1h-1zM764 405h1v1h-1zM731 379h1v1h-1zM464 199h1v1h-1zM465 484h1v1h-1zM807 368h1v1h-1zM628 559h1v1h-1zM751 465h1v1h-1zM612 475h1v1h-1zM487 388h1v1h-1zM655 373h1v1h-1zM677 386h1v1h-1zM591 337h1v1h-1zM510 251h1v1h-1zM612 465h1v1h-1zM398 451h1v1h-1zM650 530h1v1h-1zM516 520h1v1h-1zM651 293h1v1h-1zM605 435h1v1h-1zM690 343h1v1h-1zM412 175h1v1h-1zM685 403h1v1h-1zM755 344h1v1h-1zM452 453h1v1h-1zM641 509h1v1h-1zM435 228h1v1h-1zM768 530h1v1h-1zM664 540h1v1h-1zM793 299h1v1h-1zM633 420h1v1h-1zM435 423h1v1h-1zM707 201h1v1h-1zM520 397h1v1h-1zM717 535h1v1h-1zM734 498h1v1h-1zM434 506h1v1h-1zM719 432h1v1h-1zM803 452h1v1h-1zM554 469h1v1h-1zM422 331h1v1h-1zM668 554h1v1h-1zM400 396h1v1h-1zM627 418h1v1h-1zM635 449h1v1h-1zM770 325h1v1h-1zM610 336h1v1h-1zM803 306h1v1h-1zM543 241h1v1h-1zM413 511h1v1h-1zM700 539h1v1h-1zM550 528h1v1h-1zM796 444h1v1h-1zM528 187h1v1h-1zM717 398h1v1h-1zM691 242h1v1h-1zM688 182h1v1h-1zM731 305h1v1h-1zM809 533h1v1h-1zM714 169h1v1h-1zM541 404h1v1h-1zM437 220h1v1h-1zM653 195h1v1h-1zM796 298h1v1h-1zM524 223h1v1h-1zM710 299h1v1h-1zM535 287h1v1h-1zM402 535h1v1h-1zM452 465h1v1h-1zM484 458h1v1h-1zM773 233h1v1h-1zM732 384h1v1h-1zM584 569h1v1h-1zM484 289h1v1h-1zM795 514h1v1h-1zM515 404h1v1h-1zM487 565h1v1h-1zM665 172h1v1h-1zM570 199h1v1h-1zM469 460h1v1h-1zM473 409h1v1h-1zM780 367h1v1h-1zM789 352h1v1h-1zM516 494h1v1h-1zM620 527h1v1h-1zM721 241h1v1h-1zM502 451h1v1h-1zM770 332h1v1h-1zM422 484h1v1h-1zM530 542h1v1h-1zM454 182h1v1h-1zM480 393h1v1h-1zM599 399h1v1h-1zM549 399h1v1h-1zM777 541h1v1h-1zM667 275h1v1h-1zM589 505h1v1h-1zM756 355h1v1h-1zM637 290h1v1h-1zM469 427h1v1h-1zM617 162h1v1h-1zM542 564h1v1h-1zM624 351h1v1h-1zM742 317h1v1h-1zM666 505h1v1h-1zM416 205h1v1h-1zM667 482h1v1h-1zM576 377h1v1h-1zM707 489h1v1h-1zM534 327h1v1h-1zM533 292h1v1h-1zM805 206h1v1h-1zM525 491h1v1h-1zM694 356h1v1h-1zM631 551h1v1h-1zM740 539h1v1h-1zM518 531h1v1h-1zM739 457h1v1h-1zM789 255h1v1h-1zM661 328h1v1h-1zM741 509h1v1h-1zM487 316h1v1h-1zM675 161h1v1h-1zM739 160h1v1h-1zM429 162h1v1h-1zM605 206h1v1h-1zM663 209h1v1h-1zM745 384h1v1h-1zM574 268h1v1h-1zM766 301h1v1h-1zM523 254h1v1h-1zM412 168h1v1h-1zM712 203h1v1h-1zM424 460h1v1h-1zM731 267h1v1h-1zM701 482h1v1h-1zM457 518h1v1h-1zM456 200h1v1h-1zM704 222h1v1h-1zM587 492h1v1h-1zM786 487h1v1h-1zM684 567h1v1h-1zM489 212h1v1h-1zM751 250h1v1h-1zM524 306h1v1h-1zM634 494h1v1h-1zM433 483h1v1h-1zM627 297h1v1h-1zM788 374h1v1h-1zM749 497h1v1h-1zM789 550h1v1h-1zM560 287h1v1h-1zM477 555h1v1h-1zM432 297h1v1h-1zM792 187h1v1h-1zM590 354h1v1h-1zM565 186h1v1h-1zM527 291h1v1h-1zM486 381h1v1h-1zM430 407h1v1h-1zM497 468h1v1h-1zM596 247h1v1h-1zM725 407h1v1h-1zM450 229h1v1h-1zM671 549h1v1h-1zM615 267h1v1h-1zM709 485h1v1h-1zM449 382h1v1h-1zM761 288h1v1h-1zM447 173h1v1h-1zM432 192h1v1h-1zM687 528h1v1h-1zM523 553h1v1h-1zM623 165h1v1h-1zM649 232h1v1h-1zM729 483h1v1h-1zM395 175h1v1h-1zM735 355h1v1h-1zM531 233h1v1h-1zM753 324h1v1h-1zM595 450h1v1h-1zM396 419h1v1h-1zM757 550h1v1h-1zM646 400h1v1h-1zM618 362h1v1h-1zM767 555h1v1h-1zM810 558h1v1h-1zM430 432h1v1h-1zM510 157h1v1h-1zM591 508h1v1h-1zM794 402h1v1h-1zM457 446h1v1h-1zM669 339h1v1h-1zM565 505h1v1h-1zM550 361h1v1h-1zM423 479h1v1h-1zM726 202h1v1h-1zM582 429h1v1h-1zM569 197h1v1h-1zM630 545h1v1h-1zM787 304h1v1h-1zM726 259h1v1h-1zM485 439h1v1h-1zM415 352h1v1h-1zM733 253h1v1h-1zM548 512h1v1h-1zM594 210h1v1h-1zM717 508h1v1h-1zM578 405h1v1h-1zM438 479h1v1h-1zM619 532h1v1h-1zM492 227h1v1h-1zM413 254h1v1h-1zM407 524h1v1h-1zM698 278h1v1h-1zM645 355h1v1h-1zM427 561h1v1h-1zM671 485h1v1h-1zM552 411h1v1h-1zM668 571h1v1h-1zM625 164h1v1h-1zM413 329h1v1h-1zM423 328h1v1h-1zM798 525h1v1h-1zM416 363h1v1h-1zM455 264h1v1h-1zM808 490h1v1h-1zM736 423h1v1h-1zM629 503h1v1h-1zM669 232h1v1h-1zM774 452h1v1h-1zM514 192h1v1h-1zM413 532h1v1h-1zM467 406h1v1h-1zM729 165h1v1h-1zM636 472h1v1h-1zM418 280h1v1h-1zM754 488h1v1h-1zM461 163h1v1h-1zM483 479h1v1h-1zM420 313h1v1h-1zM801 205h1v1h-1zM628 468h1v1h-1zM482 458h1v1h-1zM427 210h1v1h-1zM453 410h1v1h-1zM699 565h1v1h-1zM710 268h1v1h-1zM427 567h1v1h-1zM498 374h1v1h-1zM567 571h1v1h-1zM772 503h1v1h-1zM600 322h1v1h-1zM456 506h1v1h-1zM689 435h1v1h-1zM465 320h1v1h-1zM801 265h1v1h-1zM786 179h1v1h-1zM698 244h1v1h-1zM566 188h1v1h-1zM456 296h1v1h-1zM467 543h1v1h-1zM607 242h1v1h-1zM751 345h1v1h-1zM678 240h1v1h-1zM619 280h1v1h-1zM692 176h1v1h-1zM463 207h1v1h-1zM800 479h1v1h-1zM708 348h1v1h-1zM793 236h1v1h-1zM403 405h1v1h-1zM436 159h1v1h-1zM398 247h1v1h-1zM440 517h1v1h-1zM728 459h1v1h-1zM540 369h1v1h-1zM750 569h1v1h-1zM800 551h1v1h-1zM638 510h1v1h-1zM459 261h1v1h-1zM468 483h1v1h-1zM533 423h1v1h-1zM625 366h1v1h-1zM517 245h1v1h-1zM707 510h1v1h-1zM414 461h1v1h-1zM487 523h1v1h-1zM650 469h1v1h-1zM440 477h1v1h-1zM795 310h1v1h-1zM573 370h1v1h-1zM397 441h1v1h-1zM515 254h1v1h-1zM455 427h1v1h-1zM443 472h1v1h-1zM580 545h1v1h-1zM671 415h1v1h-1zM507 393h1v1h-1zM789 476h1v1h-1zM732 262h1v1h-1zM536 183h1v1h-1zM494 213h1v1h-1zM802 232h1v1h-1zM745 398h1v1h-1zM649 246h1v1h-1zM476 499h1v1h-1zM417 183h1v1h-1zM725 342h1v1h-1zM540 263h1v1h-1zM617 284h1v1h-1zM566 471h1v1h-1zM807 544h1v1h-1zM627 178h1v1h-1zM448 535h1v1h-1zM421 431h1v1h-1zM485 236h1v1h-1zM797 170h1v1h-1zM643 419h1v1h-1zM454 192h1v1h-1zM515 525h1v1h-1zM622 459h1v1h-1zM691 322h1v1h-1zM609 257h1v1h-1zM777 502h1v1h-1zM561 273h1v1h-1zM793 212h1v1h-1zM561 272h1v1h-1zM445 277h1v1h-1zM772 367h1v1h-1zM497 348h1v1h-1zM507 193h1v1h-1zM636 455h1v1h-1zM643 183h1v1h-1zM618 230h1v1h-1zM505 468h1v1h-1zM627 247h1v1h-1zM593 347h1v1h-1zM464 390h1v1h-1zM763 255h1v1h-1zM718 339h1v1h-1zM533 259h1v1h-1zM566 221h1v1h-1zM411 510h1v1h-1zM686 186h1v1h-1zM538 225h1v1h-1zM451 394h1v1h-1zM629 370h1v1h-1zM482 545h1v1h-1zM570 268h1v1h-1zM546 465h1v1h-1zM475 560h1v1h-1zM801 482h1v1h-1zM708 243h1v1h-1zM690 439h1v1h-1zM512 200h1v1h-1zM605 423h1v1h-1zM645 266h1v1h-1zM697 398h1v1h-1zM631 298h1v1h-1zM402 529h1v1h-1zM614 532h1v1h-1zM521 282h1v1h-1zM562 378h1v1h-1zM691 269h1v1h-1zM697 232h1v1h-1zM688 158h1v1h-1zM608 178h1v1h-1zM415 396h1v1h-1zM770 549h1v1h-1zM653 173h1v1h-1zM612 427h1v1h-1zM596 401h1v1h-1zM809 564h1v1h-1zM751 206h1v1h-1zM626 409h1v1h-1zM518 198h1v1h-1zM680 541h1v1h-1zM401 510h1v1h-1zM769 364h1v1h-1zM506 223h1v1h-1zM578 307h1v1h-1zM517 487h1v1h-1zM441 164h1v1h-1zM640 498h1v1h-1zM551 238h1v1h-1zM755 391h1v1h-1zM687 538h1v1h-1zM693 168h1v1h-1zM627 393h1v1h-1zM790 226h1v1h-1zM755 363h1v1h-1zM489 560h1v1h-1zM584 476h1v1h-1zM632 516h1v1h-1zM719 156h1v1h-1zM716 192h1v1h-1zM592 509h1v1h-1zM565 427h1v1h-1zM411 307h1v1h-1zM613 541h1v1h-1zM533 513h1v1h-1zM708 433h1v1h-1zM689 562h1v1h-1zM501 559h1v1h-1zM745 197h1v1h-1zM712 327h1v1h-1zM771 184h1v1h-1zM658 501h1v1h-1zM581 182h1v1h-1zM451 352h1v1h-1zM582 394h1v1h-1zM711 176h1v1h-1zM582 343h1v1h-1zM484 487h1v1h-1zM681 516h1v1h-1zM429 443h1v1h-1zM758 552h1v1h-1zM499 226h1v1h-1zM566 278h1v1h-1zM671 214h1v1h-1zM727 400h1v1h-1zM772 541h1v1h-1zM692 515h1v1h-1zM502 541h1v1h-1zM776 545h1v1h-1zM510 320h1v1h-1zM575 292h1v1h-1zM652 504h1v1h-1zM611 297h1v1h-1zM422 188h1v1h-1zM585 332h1v1h-1zM626 404h1v1h-1zM651 425h1v1h-1zM457 396h1v1h-1zM758 428h1v1h-1zM742 428h1v1h-1zM544 387h1v1h-1zM712 344h1v1h-1zM804 500h1v1h-1zM749 570h1v1h-1zM428 252h1v1h-1zM629 200h1v1h-1zM436 356h1v1h-1zM486 303h1v1h-1zM434 211h1v1h-1zM479 297h1v1h-1zM452 512h1v1h-1zM470 410h1v1h-1zM472 260h1v1h-1zM661 477h1v1h-1zM406 306h1v1h-1zM608 505h1v1h-1zM672 223h1v1h-1zM637 333h1v1h-1zM610 383h1v1h-1zM772 486h1v1h-1zM405 305h1v1h-1zM491 188h1v1h-1zM406 566h1v1h-1zM513 422h1v1h-1zM725 327h1v1h-1zM605 452h1v1h-1zM570 491h1v1h-1zM725 558h1v1h-1zM562 404h1v1h-1zM698 496h1v1h-1zM751 427h1v1h-1zM675 383h1v1h-1zM629 311h1v1h-1zM685 223h1v1h-1zM799 312h1v1h-1zM482 560h1v1h-1zM528 272h1v1h-1zM642 346h1v1h-1zM542 550h1v1h-1zM419 231h1v1h-1zM575 301h1v1h-1zM628 241h1v1h-1zM711 238h1v1h-1zM759 430h1v1h-1zM541 249h1v1h-1zM484 518h1v1h-1zM749 497h1v1h-1zM801 234h1v1h-1zM477 277h1v1h-1zM454 177h1v1h-1zM557 450h1v1h-1zM459 381h1v1h-1zM528 345h1v1h-1zM489 261h1v1h-1zM682 518h1v1h-1zM412 496h1v1h-1zM557 332h1v1h-1zM470 346h1v1h-1zM624 432h1v1h-1zM478 429h1v1h-1zM549 218h1v1h-1zM407 363h1v1h-1zM650 549h1v1h-1zM469 390h1v1h-1zM558 235h1v1h-1zM397 534h1v1h-1zM674 415h1v1h-1zM564 487h1v1h-1zM756 307h1v1h-1zM637 304h1v1h-1zM781 449h1v1h-1zM736 231h1v1h-1zM804 445h1v1h-1zM768 382h1v1h-1zM568 508h1v1h-1zM452 530h1v1h-1zM640 176h1v1h-1zM466 503h1v1h-1zM677 215h1v1h-1zM552 168h1v1h-1zM600 472h1v1h-1zM507 384h1v1h-1zM577 203h1v1h-1zM562 184h1v1h-1zM706 484h1v1h-1zM494 454h1v1h-1zM664 269h1v1h-1zM795 548h1v1h-1zM537 256h1v1h-1zM406 198h1v1h-1zM670 384h1v1h-1zM741 499h1v1h-1zM439 418h1v1h-1zM596 255h1v1h-1zM646 318h1v1h-1zM703 465h1v1h-1zM656 184h1v1h-1zM736 340h1v1h-1zM598 231h1v1h-1zM761 374h1v1h-1zM584 353h1v1h-1zM585 162h1v1h-1zM540 332h1v1h-1zM574 313h1v1h-1zM623 443h1v1h-1zM439 266h1v1h-1zM767 383h1v1h-1zM774 368h1v1h-1zM806 382h1v1h-1zM542 239h1v1h-1zM807 528h1v1h-1zM612 529h1v1h-1zM607 227h1v1h-1zM695 462h1v1h-1zM439 229h1v1h-1zM501 311h1v1h-1zM638 424h1v1h-1zM566 189h1v1h-1zM697 543h1v1h-1zM587 201h1v1h-1zM398 365h1v1h-1zM722 295h1v1h-1zM607 245h1v1h-1zM679 392h1v1h-1zM758 446h1v1h-1zM781 226h1v1h-1zM497 251h1v1h-1zM590 304h1v1h-1zM678 407h1v1h-1zM416 310h1v1h-1zM694 311h1v1h-1zM647 442h1v1h-1zM773 393h1v1h-1zM509 169h1v1h-1zM800 157h1v1h-1zM473 290h1v1h-1zM548 483h1v1h-1zM720 397h1v1h-1zM458 490h1v1h-1zM735 303h1v1h-1zM608 247h1v1h-1zM646 508h1v1h-1zM725 281h1v1h-1zM409 217h1v1h-1zM786 297h1v1h-1zM647 190h1v1h-1zM701 537h1v1h-1zM580 453h1v1h-1zM641 445h1v1h-1zM618 288h1v1h-1zM716 507h1v1h-1zM638 511h1v1h-1zM456 347h1v1h-1zM657 531h1v1h-1zM689 164h1v1h-1zM527 239h1v1h-1zM692 185h1v1h-1zM469 319h1v1h-1zM631 510h1v1h-1zM464 338h1v1h-1zM478 183h1v1h-1zM534 340h1v1h-1zM609 481h1v1h-1zM577 180h1v1h-1zM543 305h1v1h-1zM666 483h1v1h-1zM434 419h1v1h-1zM494 548h1v1h-1zM716 249h1v1h-1zM786 204h1v1h-1zM701 541h1v1h-1zM480 434h1v1h-1zM560 317h1v1h-1zM745 565h1v1h-1zM549 294h1v1h-1zM745 513h1v1h-1zM747 341h1v1h-1zM444 429h1v1h-1zM691 336h1v1h-1zM468 162h1v1h-1zM465 421h1v1h-1zM539 346h1v1h-1zM793 404h1v1h-1zM605 330h1v1h-1zM478 208h1v1h-1zM506 235h1v1h-1zM652 269h1v1h-1zM491 563h1v1h-1zM681 470h1v1h-1zM748 425h1v1h-1zM667 520h1v1h-1zM677 515h1v1h-1zM782 566h1v1h-1zM453 369h1v1h-1zM630 195h1v1h-1zM454 223h1v1h-1zM403 401h1v1h-1zM573 315h1v1h-1zM748 341h1v1h-1zM466 382h1v1h-1zM700 423h1v1h-1zM785 331h1v1h-1zM483 519h1v1h-1zM550 170h1v1h-1zM776 216h1v1h-1zM508 221h1v1h-1zM750 228h1v1h-1zM747 272h1v1h-1zM552 220h1v1h-1zM502 222h1v1h-1zM435 373h1v1h-1zM748 546h1v1h-1zM796 213h1v1h-1zM434 165h1v1h-1zM791 403h1v1h-1zM782 376h1v1h-1zM416 256h1v1h-1zM450 172h1v1h-1zM801 493h1v1h-1zM657 459h1v1h-1zM425 396h1v1h-1zM455 285h1v1h-1zM417 189h1v1h-1zM549 497h1v1h-1zM400 542h1v1h-1zM444 556h1v1h-1zM458 464h1v1h-1zM500 456h1v1h-1zM497 250h1v1h-1zM738 335h1v1h-1zM409 202h1v1h-1zM469 538h1v1h-1zM537 452h1v1h-1zM573 336h1v1h-1zM477 412h1v1h-1zM794 529h1v1h-1zM708 279h1v1h-1zM653 447h1v1h-1zM429 206h1v1h-1zM691 546h1v1h-1zM402 426h1v1h-1zM506 522h1v1h-1zM493 300h1v1h-1zM482 542h1v1h-1zM670 158h1v1h-1zM766 206h1v1h-1zM504 414h1v1h-1zM757 399h1v1h-1zM582 513h1v1h-1zM696 250h1v1h-1zM620 500h1v1h-1zM449 248h1v1h-1zM576 350h1v1h-1zM612 265h1v1h-1zM658 272h1v1h-1zM603 213h1v1h-1zM784 316h1v1h-1zM458 394h1v1h-1zM451 422h1v1h-1zM464 409h1v1h-1zM785 340h1v1h-1zM755 303h1v1h-1zM680 525h1v1h-1zM415 198h1v1h-1zM562 408h1v1h-1zM454 353h1v1h-1zM540 389h1v1h-1zM702 532h1v1h-1zM554 507h1v1h-1zM622 271h1v1h-1zM678 364h1v1h-1zM543 375h1v1h-1zM491 191h1v1h-1zM805 399h1v1h-1zM742 344h1v1h-1zM486 162h1v1h-1zM740 407h1v1h-1zM739 209h1v1h-1zM597 380h1v1h-1zM662 493h1v1h-1zM741 199h1v1h-1zM456 229h1v1h-1zM597 361h1v1h-1zM750 458h1v1h-1zM447 535h1v1h-1zM481 189h1v1h-1zM581 257h1v1h-1zM568 258h1v1h-1zM699 362h1v1h-1zM457 275h1v1h-1zM612 527h1v1h-1zM650 298h1v1h-1zM786 521h1v1h-1zM787 453h1v1h-1zM698 295h1v1h-1zM782 560h1v1h-1zM805 485h1v1h-1zM599 338h1v1h-1zM638 497h1v1h-1zM703 363h1v1h-1zM643 417h1v1h-1zM537 231h1v1h-1zM788 388h1v1h-1zM450 218h1v1h-1zM523 406h1v1h-1zM649 274h1v1h-1zM716 224h1v1h-1zM410 206h1v1h-1zM772 183h1v1h-1zM429 411h1v1h-1zM742 169h1v1h-1zM486 351h1v1h-1zM704 503h1v1h-1zM562 234h1v1h-1zM550 474h1v1h-1zM714 205h1v1h-1zM784 195h1v1h-1zM733 540h1v1h-1zM661 548h1v1h-1zM647 561h1v1h-1zM633 259h1v1h-1zM545 494h1v1h-1zM649 407h1v1h-1zM653 289h1v1h-1zM672 331h1v1h-1zM809 432h1v1h-1zM674 165h1v1h-1zM786 172h1v1h-1zM615 216h1v1h-1zM591 386h1v1h-1zM556 348h1v1h-1zM621 391h1v1h-1zM413 172h1v1h-1zM485 441h1v1h-1zM732 555h1v1h-1zM550 517h1v1h-1zM479 407h1v1h-1zM615 224h1v1h-1zM554 522h1v1h-1zM594 405h1v1h-1zM786 212h1v1h-1zM686 501h1v1h-1zM646 493h1v1h-1zM678 506h1v1h-1zM671 448h1v1h-1zM635 399h1v1h-1zM682 236h1v1h-1zM654 184h1v1h-1zM595 290h1v1h-1zM648 458h1v1h-1zM588 471h1v1h-1zM741 336h1v1h-1zM787 301h1v1h-1zM559 187h1v1h-1zM409 458h1v1h-1zM418 221h1v1h-1zM582 334h1v1h-1zM809 535h1v1h-1zM693 169h1v1h-1zM786 476h1v1h-1zM569 350h1v1h-1zM444 375h1v1h-1zM571 338h1v1h-1zM605 335h1v1h-1zM423 494h1v1h-1zM520 282h1v1h-1zM515 487h1v1h-1zM554 459h1v1h-1zM438 508h1v1h-1zM428 312h1v1h-1zM453 328h1v1h-1zM481 166h1v1h-1zM670 322h1v1h-1zM414 391h1v1h-1zM731 372h1v1h-1zM685 419h1v1h-1zM610 292h1v1h-1zM405 512h1v1h-1zM635 457h1v1h-1zM406 318h1v1h-1zM588 448h1v1h-1zM594 321h1v1h-1zM688 206h1v1h-1zM808 406h1v1h-1zM446 509h1v1h-1zM740 261h1v1h-1zM567 410h1v1h-1zM652 571h1v1h-1zM786 497h1v1h-1zM568 241h1v1h-1zM709 309h1v1h-1zM581 379h1v1h-1zM498 410h1v1h-1zM720 559h1v1h-1zM433 430h1v1h-1zM504 303h1v1h-1zM530 180h1v1h-1zM547 449h1v1h-1zM600 567h1v1h-1zM510 475h1v1h-1zM775 203h1v1h-1zM762 452h1v1h-1zM443 459h1v1h-1zM567 295h1v1h-1zM429 446h1v1h-1zM805 427h1v1h-1zM638 374h1v1h-1zM502 333h1v1h-1zM802 195h1v1h-1zM728 310h1v1h-1zM653 567h1v1h-1zM548 377h1v1h-1zM734 432h1v1h-1zM555 258h1v1h-1zM607 361h1v1h-1zM523 475h1v1h-1zM658 388h1v1h-1zM738 546h1v1h-1zM675 248h1v1h-1zM404 477h1v1h-1zM755 420h1v1h-1zM490 451h1v1h-1zM650 265h1v1h-1zM733 536h1v1h-1zM634 293h1v1h-1zM721 428h1v1h-1zM809 470h1v1h-1zM788 378h1v1h-1zM684 528h1v1h-1zM715 186h1v1h-1zM662 258h1v1h-1zM581 392h1v1h-1zM470 279h1v1h-1zM472 538h1v1h-1zM745 547h1v1h-1zM548 378h1v1h-1zM605 319h1v1h-1zM427 480h1v1h-1zM499 367h1v1h-1zM531 302h1v1h-1zM725 238h1v1h-1zM526 507h1v1h-1zM702 276h1v1h-1zM602 278h1v1h-1zM453 232h1v1h-1zM493 170h1v1h-1zM520 564h1v1h-1zM553 393h1v1h-1zM643 442h1v1h-1zM618 372h1v1h-1zM726 174h1v1h-1zM498 237h1v1h-1zM534 225h1v1h-1zM409 288h1v1h-1zM799 567h1v1h-1zM537 493h1v1h-1zM676 246h1v1h-1zM724 177h1v1h-1zM764 404h1v1h-1zM795 166h1v1h-1zM423 198h1v1h-1zM555 464h1v1h-1zM547 188h1v1h-1zM603 342h1v1h-1zM738 492h1v1h-1zM441 359h1v1h-1zM765 227h1v1h-1zM515 213h1v1h-1zM687 532h1v1h-1zM651 217h1v1h-1zM662 496h1v1h-1zM692 552h1v1h-1zM663 284h1v1h-1zM649 202h1v1h-1zM516 463h1v1h-1zM457 551h1v1h-1zM808 316h1v1h-1zM563 455h1v1h-1zM772 355h1v1h-1zM807 539h1v1h-1zM775 276h1v1h-1zM611 267h1v1h-1zM468 210h1v1h-1zM484 265h1v1h-1zM535 381h1v1h-1zM604 286h1v1h-1zM696 184h1v1h-1zM646 429h1v1h-1zM586 514h1v1h-1zM452 318h1v1h-1zM674 372h1v1h-1zM638 505h1v1h-1zM521 298h1v1h-1zM796 230h1v1h-1zM580 399h1v1h-1zM761 344h1v1h-1zM552 166h1v1h-1zM725 466h1v1h-1zM412 534h1v1h-1zM734 565h1v1h-1zM422 509h1v1h-1zM798 499h1v1h-1zM517 285h1v1h-1zM677 352h1v1h-1zM553 483h1v1h-1zM753 341h1v1h-1zM810 506h1v1h-1zM457 429h1v1h-1zM516 382h1v1h-1zM593 160h1v1h-1zM596 286h1v1h-1zM549 202h1v1h-1zM782 276h1v1h-1zM547 263h1v1h-1zM477 380h1v1h-1zM718 318h1v1h-1zM810 548h1v1h-1zM724 364h1v1h-1zM799 173h1v1h-1zM535 197h1v1h-1zM794 407h1v1h-1zM636 533h1v1h-1zM606 326h1v1h-1zM762 372h1v1h-1zM446 238h1v1h-1zM752 289h1v1h-1zM654 189h1v1h-1zM575 371h1v1h-1zM703 529h1v1h-1zM675 533h1v1h-1zM562 388h1v1h-1zM750 170h1v1h-1zM785 182h1v1h-1zM723 484h1v1h-1zM489 478h1v1h-1zM622 561h1v1h-1zM723 225h1v1h-1zM396 361h1v1h-1zM497 477h1v1h-1zM551 316h1v1h-1zM689 198h1v1h-1zM451 236h1v1h-1zM522 420h1v1h-1zM760 549h1v1h-1zM727 546h1v1h-1zM461 460h1v1h-1zM746 366h1v1h-1zM800 319h1v1h-1zM626 400h1v1h-1zM771 224h1v1h-1zM528 244h1v1h-1zM746 459h1v1h-1zM562 565h1v1h-1zM539 257h1v1h-1zM438 368h1v1h-1zM583 249h1v1h-1zM596 349h1v1h-1zM687 270h1v1h-1zM405 167h1v1h-1zM680 487h1v1h-1zM708 476h1v1h-1zM512 201h1v1h-1zM631 257h1v1h-1zM529 515h1v1h-1zM481 181h1v1h-1zM600 472h1v1h-1zM614 463h1v1h-1zM528 232h1v1h-1zM440 344h1v1h-1zM482 446h1v1h-1zM455 163h1v1h-1zM762 425h1v1h-1zM617 551h1v1h-1zM627 500h1v1h-1zM648 216h1v1h-1zM509 521h1v1h-1zM499 253h1v1h-1zM795 292h1v1h-1zM542 538h1v1h-1zM648 351h1v1h-1zM461 376h1v1h-1zM500 463h1v1h-1zM505 300h1v1h-1zM767 502h1v1h-1zM491 370h1v1h-1zM487 365h1v1h-1zM800 230h1v1h-1zM409 304h1v1h-1zM529 276h1v1h-1zM711 386h1v1h-1zM522 345h1v1h-1zM693 506h1v1h-1zM726 390h1v1h-1zM438 161h1v1h-1zM635 224h1v1h-1zM560 510h1v1h-1zM598 507h1v1h-1zM503 521h1v1h-1zM591 518h1v1h-1zM611 532h1v1h-1zM700 287h1v1h-1zM432 204h1v1h-1zM680 186h1v1h-1zM421 326h1v1h-1zM515 397h1v1h-1zM576 466h1v1h-1zM738 566h1v1h-1zM701 519h1v1h-1zM778 570h1v1h-1zM418 158h1v1h-1zM524 414h1v1h-1zM712 351h1v1h-1zM549 358h1v1h-1zM738 345h1v1h-1zM462 442h1v1h-1zM416 453h1v1h-1zM486 289h1v1h-1zM481 413h1v1h-1zM647 329h1v1h-1zM634 223h1v1h-1zM440 318h1v1h-1zM758 427h1v1h-1zM616 228h1v1h-1zM528 215h1v1h-1zM555 178h1v1h-1zM460 411h1v1h-1zM538 538h1v1h-1zM579 376h1v1h-1zM539 290h1v1h-1zM708 545h1v1h-1zM530 420h1v1h-1zM555 379h1v1h-1zM479 317h1v1h-1zM772 407h1v1h-1zM786 233h1v1h-1zM679 492h1v1h-1zM720 564h1v1h-1zM620 183h1v1h-1zM491 232h1v1h-1zM422 273h1v1h-1zM488 174h1v1h-1zM635 289h1v1h-1zM478 517h1v1h-1zM634 379h1v1h-1zM454 409h1v1h-1zM415 382h1v1h-1zM577 519h1v1h-1zM682 404h1v1h-1zM629 408h1v1h-1zM452 524h1v1h-1zM470 219h1v1h-1zM573 203h1v1h-1zM499 301h1v1h-1zM487 242h1v1h-1zM778 416h1v1h-1zM534 444h1v1h-1zM734 455h1v1h-1zM503 454h1v1h-1zM397 425h1v1h-1zM787 448h1v1h-1zM487 369h1v1h-1zM434 282h1v1h-1zM788 411h1v1h-1zM741 204h1v1h-1zM563 169h1v1h-1zM540 504h1v1h-1zM743 218h1v1h-1zM596 347h1v1h-1zM697 210h1v1h-1zM560 234h1v1h-1zM409 197h1v1h-1zM630 518h1v1h-1zM732 401h1v1h-1zM627 477h1v1h-1zM532 460h1v1h-1zM731 158h1v1h-1zM563 178h1v1h-1zM730 474h1v1h-1zM626 322h1v1h-1zM769 531h1v1h-1zM803 447h1v1h-1zM461 264h1v1h-1zM419 566h1v1h-1zM724 300h1v1h-1zM560 564h1v1h-1zM423 536h1v1h-1zM431 436h1v1h-1zM703 351h1v1h-1zM442 360h1v1h-1zM525 247h1v1h-1zM517 550h1v1h-1zM599 201h1v1h-1zM405 262h1v1h-1zM478 354h1v1h-1zM794 362h1v1h-1zM540 487h1v1h-1zM780 490h1v1h-1zM473 217h1v1h-1zM547 407h1v1h-1zM805 377h1v1h-1zM771 568h1v1h-1zM553 506h1v1h-1zM703 223h1v1h-1zM578 496h1v1h-1zM444 344h1v1h-1zM657 258h1v1h-1zM645 384h1v1h-1zM593 399h1v1h-1zM532 444h1v1h-1zM702 372h1v1h-1zM441 543h1v1h-1zM611 571h1v1h-1zM583 470h1v1h-1zM490 378h1v1h-1zM717 374h1v1h-1zM442 176h1v1h-1zM657 330h1v1h-1zM632 502h1v1h-1zM509 487h1v1h-1zM746 521h1v1h-1zM474 409h1v1h-1zM664 478h1v1h-1zM726 424h1v1h-1zM437 304h1v1h-1zM634 379h1v1h-1zM435 566h1v1h-1zM639 309h1v1h-1zM471 221h1v1h-1zM745 309h1v1h-1zM522 423h1v1h-1zM613 307h1v1h-1zM686 180h1v1h-1zM677 195h1v1h-1zM418 418h1v1h-1zM450 417h1v1h-1zM612 367h1v1h-1zM443 393h1v1h-1zM733 524h1v1h-1zM686 285h1v1h-1zM576 286h1v1h-1zM694 197h1v1h-1zM788 413h1v1h-1zM403 214h1v1h-1zM774 494h1v1h-1zM631 247h1v1h-1zM797 249h1v1h-1zM596 179h1v1h-1zM437 369h1v1h-1zM755 308h1v1h-1zM555 456h1v1h-1zM765 388h1v1h-1zM782 499h1v1h-1zM625 475h1v1h-1zM808 291h1v1h-1zM569 570h1v1h-1zM490 264h1v1h-1zM489 196h1v1h-1zM777 465h1v1h-1zM527 500h1v1h-1zM449 378h1v1h-1zM668 165h1v1h-1zM397 358h1v1h-1zM454 162h1v1h-1zM482 491h1v1h-1zM639 391h1v1h-1zM749 363h1v1h-1zM731 537h1v1h-1zM703 527h1v1h-1zM644 311h1v1h-1zM711 471h1v1h-1zM579 509h1v1h-1zM739 509h1v1h-1zM740 358h1v1h-1zM806 310h1v1h-1zM439 220h1v1h-1zM464 163h1v1h-1zM492 213h1v1h-1zM403 512h1v1h-1zM491 169h1v1h-1zM502 402h1v1h-1zM727 230h1v1h-1zM727 279h1v1h-1zM618 476h1v1h-1zM799 431h1v1h-1zM492 200h1v1h-1zM549 550h1v1h-1zM632 231h1v1h-1zM637 372h1v1h-1zM406 215h1v1h-1zM480 234h1v1h-1zM773 515h1v1h-1zM622 404h1v1h-1zM636 166h1v1h-1zM625 455h1v1h-1zM519 259h1v1h-1zM545 447h1v1h-1zM595 182h1v1h-1zM565 160h1v1h-1zM447 478h1v1h-1zM760 377h1v1h-1zM607 409h1v1h-1zM772 452h1v1h-1zM700 530h1v1h-1zM678 304h1v1h-1zM413 405h1v1h-1zM599 404h1v1h-1zM657 458h1v1h-1zM766 469h1v1h-1zM742 405h1v1h-1zM513 521h1v1h-1zM426 426h1v1h-1zM404 372h1v1h-1zM690 317h1v1h-1zM678 188h1v1h-1zM532 487h1v1h-1zM608 398h1v1h-1zM454 409h1v1h-1zM713 486h1v1h-1zM572 385h1v1h-1zM752 379h1v1h-1zM405 238h1v1h-1zM542 527h1v1h-1zM493 396h1v1h-1zM571 380h1v1h-1zM513 415h1v1h-1zM507 456h1v1h-1zM745 329h1v1h-1zM703 522h1v1h-1zM731 395h1v1h-1zM462 306h1v1h-1zM765 520h1v1h-1zM594 369h1v1h-1zM739 490h1v1h-1zM771 340h1v1h-1zM802 397h1v1h-1zM804 238h1v1h-1zM713 262h1v1h-1zM539 509h1v1h-1zM778 200h1v1h-1zM736 403h1v1h-1zM461 244h1v1h-1zM497 236h1v1h-1zM705 407h1v1h-1zM446 562h1v1h-1zM607 408h1v1h-1zM550 276h1v1h-1zM502 441h1v1h-1zM419 165h1v1h-1zM578 289h1v1h-1zM577 502h1v1h-1zM476 245h1v1h-1zM652 172h1v1h-1zM808 188h1v1h-1zM567 376h1v1h-1zM453 472h1v1h-1zM511 217h1v1h-1zM682 270h1v1h-1zM644 288h1v1h-1zM569 557h1v1h-1zM576 549h1v1h-1zM418 550h1v1h-1zM680 292h1v1h-1zM472 509h1v1h-1zM658 465h1v1h-1zM737 209h1v1h-1zM756 181h1v1h-1zM619 565h1v1h-1zM629 542h1v1h-1zM451 210h1v1h-1zM795 468h1v1h-1zM707 556h1v1h-1zM447 443h1v1h-1zM416 415h1v1h-1zM448 241h1v1h-1zM717 216h1v1h-1zM500 341h1v1h-1zM475 528h1v1h-1zM544 518h1v1h-1zM621 546h1v1h-1zM654 411h1v1h-1zM770 206h1v1h-1zM473 487h1v1h-1zM581 327h1v1h-1zM465 218h1v1h-1zM498 380h1v1h-1zM607 549h1v1h-1zM788 159h1v1h-1zM520 570h1v1h-1zM637 330h1v1h-1zM541 414h1v1h-1zM482 199h1v1h-1zM531 346h1v1h-1zM761 542h1v1h-1zM607 340h1v1h-1zM717 496h1v1h-1zM520 233h1v1h-1zM780 541h1v1h-1zM666 371h1v1h-1zM798 272h1v1h-1zM465 566h1v1h-1zM614 367h1v1h-1zM604 390h1v1h-1zM659 562h1v1h-1zM744 341h1v1h-1zM410 382h1v1h-1zM469 550h1v1h-1zM400 523h1v1h-1zM807 420h1v1h-1zM430 199h1v1h-1zM568 317h1v1h-1zM600 551h1v1h-1zM479 378h1v1h-1zM426 357h1v1h-1zM783 174h1v1h-1zM733 484h1v1h-1zM472 450h1v1h-1zM424 479h1v1h-1zM760 565h1v1h-1zM733 422h1v1h-1zM546 370h1v1h-1zM600 504h1v1h-1zM753 439h1v1h-1zM550 525h1v1h-1zM775 316h1v1h-1zM571 160h1v1h-1zM538 426h1v1h-1zM707 231h1v1h-1zM753 362h1v1h-1zM623 485h1v1h-1zM500 434h1v1h-1zM714 559h1v1h-1zM711 489h1v1h-1zM621 513h1v1h-1zM571 571h1v1h-1zM795 488h1v1h-1zM602 553h1v1h-1zM496 310h1v1h-1zM438 174h1v1h-1zM670 327h1v1h-1zM594 527h1v1h-1zM763 534h1v1h-1zM459 422h1v1h-1zM671 301h1v1h-1zM504 203h1v1h-1zM656 438h1v1h-1zM554 422h1v1h-1zM569 543h1v1h-1zM720 237h1v1h-1zM406 170h1v1h-1zM802 432h1v1h-1zM698 288h1v1h-1zM518 552h1v1h-1zM550 527h1v1h-1zM611 414h1v1h-1zM451 530h1v1h-1zM425 346h1v1h-1zM527 477h1v1h-1zM654 337h1v1h-1zM458 180h1v1h-1zM782 489h1v1h-1zM458 385h1v1h-1zM547 449h1v1h-1zM772 158h1v1h-1zM627 329h1v1h-1zM515 568h1v1h-1zM776 453h1v1h-1zM684 521h1v1h-1zM716 496h1v1h-1zM668 460h1v1h-1zM514 335h1v1h-1zM548 301h1v1h-1zM736 557h1v1h-1zM761 449h1v1h-1zM739 227h1v1h-1zM760 349h1v1h-1zM661 533h1v1h-1zM521 209h1v1h-1zM562 420h1v1h-1zM693 254h1v1h-1zM793 340h1v1h-1zM627 206h1v1h-1zM470 520h1v1h-1zM612 366h1v1h-1zM436 203h1v1h-1zM426 373h1v1h-1zM461 399h1v1h-1zM504 384h1v1h-1zM434 345h1v1h-1zM741 425h1v1h-1zM601 457h1v1h-1zM681 421h1v1h-1zM793 358h1v1h-1zM530 455h1v1h-1zM650 481h1v1h-1zM611 381h1v1h-1zM747 406h1v1h-1zM769 369h1v1h-1zM478 229h1v1h-1zM653 221h1v1h-1zM643 520h1v1h-1zM629 222h1v1h-1zM755 418h1v1h-1zM665 216h1v1h-1zM750 264h1v1h-1zM628 398h1v1h-1zM411 538h1v1h-1zM475 442h1v1h-1zM584 216h1v1h-1zM703 365h1v1h-1zM451 217h1v1h-1zM584 448h1v1h-1zM543 176h1v1h-1zM662 234h1v1h-1zM455 346h1v1h-1zM551 347h1v1h-1zM550 306h1v1h-1zM643 170h1v1h-1zM800 229h1v1h-1zM467 557h1v1h-1zM696 371h1v1h-1zM419 312h1v1h-1zM540 266h1v1h-1zM488 534h1v1h-1zM645 157h1v1h-1zM457 436h1v1h-1zM573 190h1v1h-1zM417 369h1v1h-1zM641 449h1v1h-1zM553 445h1v1h-1zM626 328h1v1h-1zM795 349h1v1h-1zM638 524h1v1h-1zM705 223h1v1h-1zM785 226h1v1h-1zM653 481h1v1h-1zM630 545h1v1h-1zM625 497h1v1h-1zM624 232h1v1h-1zM767 322h1v1h-1zM440 565h1v1h-1zM714 496h1v1h-1zM714 365h1v1h-1zM593 275h1v1h-1zM597 329h1v1h-1zM671 179h1v1h-1zM738 382h1v1h-1zM771 298h1v1h-1zM725 201h1v1h-1zM479 518h1v1h-1zM407 448h1v1h-1zM717 563h1v1h-1zM790 518h1v1h-1zM553 443h1v1h-1zM725 219h1v1h-1zM724 442h1v1h-1zM438 254h1v1h-1zM711 433h1v1h-1zM690 543h1v1h-1zM422 447h1v1h-1zM662 252h1v1h-1zM779 399h1v1h-1zM652 165h1v1h-1zM456 493h1v1h-1zM667 248h1v1h-1zM404 296h1v1h-1zM797 261h1v1h-1zM520 517h1v1h-1zM691 383h1v1h-1zM438 569h1v1h-1zM668 466h1v1h-1zM559 361h1v1h-1zM696 179h1v1h-1zM646 167h1v1h-1zM569 379h1v1h-1zM487 368h1v1h-1zM407 426h1v1h-1zM557 351h1v1h-1zM526 202h1v1h-1zM453 206h1v1h-1zM672 242h1v1h-1zM541 229h1v1h-1zM488 286h1v1h-1zM788 201h1v1h-1zM473 313h1v1h-1zM603 503h1v1h-1zM481 186h1v1h-1zM709 322h1v1h-1zM487 169h1v1h-1zM760 185h1v1h-1zM547 355h1v1h-1zM445 319h1v1h-1zM467 367h1v1h-1zM560 288h1v1h-1zM587 217h1v1h-1zM421 259h1v1h-1zM517 541h1v1h-1zM700 456h1v1h-1zM516 408h1v1h-1zM655 541h1v1h-1zM653 353h1v1h-1zM453 293h1v1h-1zM426 318h1v1h-1zM632 439h1v1h-1zM603 189h1v1h-1zM642 170h1v1h-1zM603 480h1v1h-1zM514 165h1v1h-1zM532 439h1v1h-1zM695 501h1v1h-1zM446 282h1v1h-1zM785 440h1v1h-1zM728 558h1v1h-1zM459 311h1v1h-1zM685 364h1v1h-1zM623 198h1v1h-1zM720 412h1v1h-1zM499 556h1v1h-1zM467 347h1v1h-1zM671 242h1v1h-1zM795 281h1v1h-1zM670 372h1v1h-1zM679 387h1v1h-1zM416 156h1v1h-1zM632 473h1v1h-1zM543 490h1v1h-1zM480 156h1v1h-1zM425 402h1v1h-1zM534 462h1v1h-1zM523 504h1v1h-1zM589 335h1v1h-1zM718 264h1v1h-1zM694 417h1v1h-1zM539 179h1v1h-1zM477 534h1v1h-1zM668 444h1v1h-1zM430 309h1v1h-1zM440 358h1v1h-1zM752 218h1v1h-1zM466 527h1v1h-1zM679 299h1v1h-1zM616 263h1v1h-1zM707 414h1v1h-1zM805 318h1v1h-1zM744 331h1v1h-1zM720 289h1v1h-1zM780 518h1v1h-1zM626 295h1v1h-1zM520 495h1v1h-1zM559 330h1v1h-1zM502 391h1v1h-1zM701 324h1v1h-1zM403 510h1v1h-1zM463 486h1v1h-1zM396 467h1v1h-1zM638 158h1v1h-1zM399 500h1v1h-1zM483 367h1v1h-1zM679 512h1v1h-1zM755 406h1v1h-1zM785 357h1v1h-1zM670 197h1v1h-1zM798 488h1v1h-1zM728 195h1v1h-1zM670 171h1v1h-1zM738 383h1v1h-1zM739 219h1v1h-1zM575 348h1v1h-1zM702 339h1v1h-1zM593 246h1v1h-1zM788 571h1v1h-1zM751 160h1v1h-1zM458 392h1v1h-1zM584 254h1v1h-1zM622 160h1v1h-1zM508 536h1v1h-1zM405 544h1v1h-1zM538 504h1v1h-1zM758 339h1v1h-1zM493 202h1v1h-1zM709 476h1v1h-1zM550 569h1v1h-1zM762 269h1v1h-1zM514 408h1v1h-1zM580 174h1v1h-1zM538 408h1v1h-1zM755 517h1v1h-1zM705 263h1v1h-1zM398 256h1v1h-1zM721 358h1v1h-1zM451 298h1v1h-1zM686 412h1v1h-1zM647 243h1v1h-1zM677 255h1v1h-1zM732 534h1v1h-1zM684 500h1v1h-1zM744 464h1v1h-1zM684 245h1v1h-1zM428 457h1v1h-1zM460 537h1v1h-1zM428 221h1v1h-1zM527 447h1v1h-1zM511 423h1v1h-1zM768 556h1v1h-1zM535 254h1v1h-1zM742 167h1v1h-1zM749 503h1v1h-1zM667 470h1v1h-1zM524 504h1v1h-1zM681 388h1v1h-1zM396 374h1v1h-1zM723 500h1v1h-1zM727 182h1v1h-1zM560 377h1v1h-1zM603 296h1v1h-1zM457 504h1v1h-1zM660 394h1v1h-1zM648 341h1v1h-1zM659 544h1v1h-1zM417 525h1v1h-1zM509 180h1v1h-1zM537 371h1v1h-1zM667 385h1v1h-1zM556 158h1v1h-1zM595 255h1v1h-1zM566 197h1v1h-1zM687 569h1v1h-1zM407 533h1v1h-1zM510 509h1v1h-1zM611 194h1v1h-1zM522 256h1v1h-1zM479 324h1v1h-1zM554 188h1v1h-1zM715 476h1v1h-1zM444 170h1v1h-1zM640 377h1v1h-1zM808 168h1v1h-1zM698 564h1v1h-1zM715 327h1v1h-1zM523 282h1v1h-1zM450 398h1v1h-1zM517 330h1v1h-1zM422 326h1v1h-1zM661 562h1v1h-1zM516 193h1v1h-1zM792 463h1v1h-1zM712 380h1v1h-1zM786 204h1v1h-1zM715 384h1v1h-1zM691 219h1v1h-1zM438 187h1v1h-1zM412 349h1v1h-1zM555 511h1v1h-1zM428 556h1v1h-1zM460 187h1v1h-1zM805 382h1v1h-1zM423 310h1v1h-1zM707 476h1v1h-1zM616 189h1v1h-1zM447 502h1v1h-1zM423 442h1v1h-1zM421 306h1v1h-1zM590 361h1v1h-1zM444 472h1v1h-1zM780 366h1v1h-1zM514 462h1v1h-1zM798 493h1v1h-1zM714 161h1v1h-1zM627 352h1v1h-1zM632 563h1v1h-1zM614 473h1v1h-1zM712 207h1v1h-1zM568 489h1v1h-1zM740 556h1v1h-1zM408 388h1v1h-1zM659 324h1v1h-1zM695 254h1v1h-1zM450 208h1v1h-1zM401 460h1v1h-1zM760 190h1v1h-1zM698 560h1v1h-1zM494 449h1v1h-1zM459 482h1v1h-1zM655 287h1v1h-1zM576 371h1v1h-1zM641 527h1v1h-1zM712 383h1v1h-1zM490 280h1v1h-1zM465 564h1v1h-1zM417 186h1v1h-1zM460 315h1v1h-1zM694 379h1v1h-1zM657 489h1v1h-1zM781 339h1v1h-1zM554 454h1v1h-1zM672 553h1v1h-1zM469 231h1v1h-1zM635 314h1v1h-1zM703 331h1v1h-1zM544 344h1v1h-1zM399 421h1v1h-1zM695 492h1v1h-1zM742 230h1v1h-1zM424 277h1v1h-1zM654 442h1v1h-1zM422 372h1v1h-1zM571 256h1v1h-1zM497 483h1v1h-1zM498 558h1v1h-1zM430 330h1v1h-1zM491 497h1v1h-1zM638 511h1v1h-1zM749 395h1v1h-1zM702 510h1v1h-1zM564 452h1v1h-1zM684 327h1v1h-1zM710 309h1v1h-1zM609 324h1v1h-1zM478 209h1v1h-1zM627 560h1v1h-1zM416 409h1v1h-1zM507 157h1v1h-1zM722 270h1v1h-1zM749 273h1v1h-1zM633 475h1v1h-1zM504 278h1v1h-1zM641 532h1v1h-1zM788 325h1v1h-1zM808 534h1v1h-1zM587 261h1v1h-1zM599 250h1v1h-1zM398 341h1v1h-1zM400 193h1v1h-1zM578 171h1v1h-1zM679 214h1v1h-1zM467 304h1v1h-1zM620 255h1v1h-1zM718 455h1v1h-1zM786 340h1v1h-1zM417 171h1v1h-1zM496 257h1v1h-1zM540 245h1v1h-1zM507 290h1v1h-1zM763 245h1v1h-1zM568 439h1v1h-1zM520 247h1v1h-1zM495 167h1v1h-1zM485 290h1v1h-1zM446 166h1v1h-1zM741 226h1v1h-1zM589 491h1v1h-1zM798 212h1v1h-1zM568 263h1v1h-1zM551 389h1v1h-1zM517 345h1v1h-1zM809 346h1v1h-1zM733 243h1v1h-1zM664 565h1v1h-1zM714 378h1v1h-1zM759 189h1v1h-1zM455 229h1v1h-1zM461 562h1v1h-1zM492 254h1v1h-1zM667 349h1v1h-1zM750 347h1v1h-1zM557 462h1v1h-1zM614 481h1v1h-1zM520 179h1v1h-1zM785 471h1v1h-1zM695 252h1v1h-1zM669 306h1v1h-1zM799 232h1v1h-1zM562 282h1v1h-1zM422 478h1v1h-1zM802 299h1v1h-1zM459 416h1v1h-1zM694 406h1v1h-1zM502 528h1v1h-1zM436 557h1v1h-1zM635 560h1v1h-1zM734 470h1v1h-1zM428 241h1v1h-1zM655 354h1v1h-1zM779 486h1v1h-1zM779 416h1v1h-1zM586 411h1v1h-1zM660 393h1v1h-1zM486 320h1v1h-1zM759 347h1v1h-1zM664 511h1v1h-1zM642 522h1v1h-1zM648 398h1v1h-1zM532 453h1v1h-1zM600 482h1v1h-1zM799 454h1v1h-1zM727 174h1v1h-1zM501 268h1v1h-1zM498 387h1v1h-1zM515 358h1v1h-1zM506 312h1v1h-1zM612 349h1v1h-1zM687 236h1v1h-1zM586 286h1v1h-1zM676 199h1v1h-1zM463 540h1v1h-1zM438 307h1v1h-1zM622 421h1v1h-1zM575 273h1v1h-1zM693 177h1v1h-1zM633 418h1v1h-1zM713 328h1v1h-1zM613 386h1v1h-1zM634 377h1v1h-1zM604 344h1v1h-1zM806 410h1v1h-1zM557 295h1v1h-1zM590 168h1v1h-1zM486 382h1v1h-1zM514 291h1v1h-1zM725 194h1v1h-1zM578 198h1v1h-1zM545 412h1v1h-1zM657 435h1v1h-1zM724 196h1v1h-1zM797 297h1v1h-1zM511 206h1v1h-1zM455 192h1v1h-1zM579 175h1v1h-1zM674 258h1v1h-1zM565 256h1v1h-1zM740 324h1v1h-1zM523 310h1v1h-1zM776 549h1v1h-1zM744 296h1v1h-1zM492 517h1v1h-1zM704 226h1v1h-1zM780 522h1v1h-1zM773 434h1v1h-1zM528 160h1v1h-1zM789 309h1v1h-1zM539 333h1v1h-1zM795 362h1v1h-1zM602 452h1v1h-1zM782 491h1v1h-1zM401 397h1v1h-1zM729 418h1v1h-1zM784 232h1v1h-1zM598 272h1v1h-1zM511 526h1v1h-1zM778 263h1v1h-1zM637 275h1v1h-1zM659 456h1v1h-1zM797 438h1v1h-1zM782 395h1v1h-1zM764 392h1v1h-1zM569 561h1v1h-1zM438 316h1v1h-1zM491 375h1v1h-1zM789 513h1v1h-1zM608 263h1v1h-1zM619 386h1v1h-1zM680 171h1v1h-1zM586 227h1v1h-1zM690 221h1v1h-1zM551 533h1v1h-1zM399 411h1v1h-1zM809 493h1v1h-1zM576 329h1v1h-1zM510 370h1v1h-1zM612 507h1v1h-1zM780 362h1v1h-1zM785 554h1v1h-1zM748 431h1v1h-1zM548 322h1v1h-1zM695 167h1v1h-1zM685 558h1v1h-1zM411 227h1v1h-1zM473 325h1v1h-1zM685 478h1v1h-1zM804 464h1v1h-1zM706 449h1v1h-1zM595 351h1v1h-1zM499 356h1v1h-1zM427 429h1v1h-1zM592 252h1v1h-1zM638 211h1v1h-1zM563 447h1v1h-1zM626 483h1v1h-1zM550 203h1v1h-1zM482 209h1v1h-1zM740 439h1v1h-1zM485 172h1v1h-1zM747 464h1v1h-1zM645 169h1v1h-1zM490 257h1v1h-1zM430 353h1v1h-1zM540 261h1v1h-1zM514 305h1v1h-1zM732 424h1v1h-1zM430 388h1v1h-1zM424 344h1v1h-1zM660 161h1v1h-1zM482 323h1v1h-1zM605 356h1v1h-1zM475 212h1v1h-1zM461 430h1v1h-1zM609 400h1v1h-1zM775 191h1v1h-1zM594 261h1v1h-1zM461 261h1v1h-1zM553 377h1v1h-1zM758 496h1v1h-1zM638 237h1v1h-1zM704 450h1v1h-1zM553 456h1v1h-1zM498 413h1v1h-1zM761 506h1v1h-1zM629 297h1v1h-1zM498 159h1v1h-1zM468 384h1v1h-1zM427 360h1v1h-1zM704 569h1v1h-1zM521 425h1v1h-1zM563 447h1v1h-1zM646 391h1v1h-1zM631 450h1v1h-1zM415 533h1v1h-1zM441 303h1v1h-1zM725 389h1v1h-1zM572 514h1v1h-1zM759 561h1v1h-1zM547 356h1v1h-1zM708 570h1v1h-1zM484 368h1v1h-1zM522 247h1v1h-1zM711 531h1v1h-1zM616 390h1v1h-1zM591 493h1v1h-1zM488 513h1v1h-1zM686 204h1v1h-1zM596 513h1v1h-1zM417 278h1v1h-1zM475 296h1v1h-1zM716 431h1v1h-1zM544 497h1v1h-1zM429 513h1v1h-1zM766 525h1v1h-1zM506 408h1v1h-1zM605 546h1v1h-1zM678 218h1v1h-1zM583 195h1v1h-1zM781 209h1v1h-1zM653 548h1v1h-1zM794 322h1v1h-1zM604 386h1v1h-1zM479 285h1v1h-1zM501 415h1v1h-1zM417 392h1v1h-1zM408 193h1v1h-1zM722 511h1v1h-1zM740 539h1v1h-1zM631 351h1v1h-1zM570 537h1v1h-1zM599 255h1v1h-1zM598 175h1v1h-1zM400 284h1v1h-1zM453 519h1v1h-1zM464 323h1v1h-1zM738 539h1v1h-1zM632 404h1v1h-1zM631 190h1v1h-1zM437 436h1v1h-1zM731 280h1v1h-1zM760 380h1v1h-1zM466 397h1v1h-1zM537 238h1v1h-1zM482 165h1v1h-1zM705 207h1v1h-1zM485 306h1v1h-1zM458 429h1v1h-1zM774 356h1v1h-1zM481 195h1v1h-1zM738 546h1v1h-1zM400 502h1v1h-1zM534 234h1v1h-1zM620 339h1v1h-1zM486 266h1v1h-1zM760 173h1v1h-1zM740 428h1v1h-1zM505 382h1v1h-1zM751 180h1v1h-1zM720 571h1v1h-1zM662 484h1v1h-1zM734 522h1v1h-1zM732 208h1v1h-1zM594 509h1v1h-1zM552 383h1v1h-1zM421 462h1v1h-1zM397 180h1v1h-1zM790 349h1v1h-1zM787 259h1v1h-1zM522 347h1v1h-1zM517 258h1v1h-1zM441 164h1v1h-1zM610 170h1v1h-1zM402 328h1v1h-1zM493 504h1v1h-1zM737 188h1v1h-1zM507 205h1v1h-1zM803 496h1v1h-1zM480 526h1v1h-1zM480 178h1v1h-1zM607 418h1v1h-1zM450 323h1v1h-1zM560 443h1v1h-1zM715 253h1v1h-1zM714 262h1v1h-1zM672 358h1v1h-1zM614 217h1v1h-1zM513 265h1v1h-1zM449 338h1v1h-1zM560 244h1v1h-1zM402 361h1v1h-1zM729 317h1v1h-1zM401 355h1v1h-1zM503 390h1v1h-1zM507 189h1v1h-1zM731 298h1v1h-1zM727 475h1v1h-1zM583 178h1v1h-1zM429 267h1v1h-1zM605 310h1v1h-1zM787 462h1v1h-1zM650 208h1v1h-1zM759 430h1v1h-1zM800 447h1v1h-1zM482 284h1v1h-1zM443 463h1v1h-1zM561 479h1v1h-1zM751 354h1v1h-1zM742 550h1v1h-1zM750 224h1v1h-1zM565 245h1v1h-1zM720 545h1v1h-1zM747 318h1v1h-1zM736 402h1v1h-1zM429 327h1v1h-1zM404 467h1v1h-1zM694 385h1v1h-1zM590 417h1v1h-1zM722 535h1v1h-1zM514 413h1v1h-1zM695 516h1v1h-1zM401 275h1v1h-1zM405 471h1v1h-1zM783 219h1v1h-1zM553 277h1v1h-1zM772 375h1v1h-1zM782 280h1v1h-1zM712 196h1v1h-1zM425 226h1v1h-1zM586 411h1v1h-1zM546 259h1v1h-1zM472 348h1v1h-1zM499 484h1v1h-1zM414 277h1v1h-1zM766 462h1v1h-1zM622 534h1v1h-1zM563 224h1v1h-1zM537 318h1v1h-1zM724 558h1v1h-1zM784 176h1v1h-1zM661 561h1v1h-1zM607 487h1v1h-1zM542 540h1v1h-1zM407 273h1v1h-1zM770 325h1v1h-1zM570 280h1v1h-1zM500 432h1v1h-1zM422 496h1v1h-1zM522 566h1v1h-1zM746 512h1v1h-1zM763 269h1v1h-1zM706 351h1v1h-1zM661 320h1v1h-1zM488 382h1v1h-1zM717 159h1v1h-1zM428 407h1v1h-1zM430 254h1v1h-1zM421 480h1v1h-1zM467 260h1v1h-1zM459 202h1v1h-1zM483 459h1v1h-1zM676 563h1v1h-1zM499 276h1v1h-1zM654 196h1v1h-1zM613 527h1v1h-1zM634 315h1v1h-1zM479 525h1v1h-1zM496 281h1v1h-1zM612 246h1v1h-1zM705 283h1v1h-1zM550 302h1v1h-1zM690 385h1v1h-1zM720 259h1v1h-1zM534 556h1v1h-1zM641 196h1v1h-1zM579 359h1v1h-1zM588 241h1v1h-1zM636 381h1v1h-1zM611 414h1v1h-1zM707 532h1v1h-1zM616 545h1v1h-1zM474 562h1v1h-1zM641 166h1v1h-1zM785 351h1v1h-1zM613 198h1v1h-1zM783 309h1v1h-1zM699 431h1v1h-1zM473 439h1v1h-1zM767 245h1v1h-1zM526 350h1v1h-1zM632 312h1v1h-1zM627 301h1v1h-1zM587 443h1v1h-1zM705 402h1v1h-1zM431 326h1v1h-1zM464 522h1v1h-1zM635 256h1v1h-1zM474 253h1v1h-1zM397 162h1v1h-1zM651 529h1v1h-1zM766 347h1v1h-1zM646 363h1v1h-1zM607 358h1v1h-1zM775 347h1v1h-1zM591 406h1v1h-1zM552 484h1v1h-1zM696 192h1v1h-1zM604 175h1v1h-1zM458 353h1v1h-1zM684 239h1v1h-1zM494 546h1v1h-1zM618 286h1v1h-1zM789 540h1v1h-1zM764 334h1v1h-1zM655 519h1v1h-1zM645 481h1v1h-1zM747 344h1v1h-1zM751 185h1v1h-1zM728 353h1v1h-1zM612 532h1v1h-1zM521 280h1v1h-1zM639 173h1v1h-1zM580 479h1v1h-1zM756 502h1v1h-1zM409 513h1v1h-1zM735 486h1v1h-1zM470 289h1v1h-1zM704 389h1v1h-1zM743 231h1v1h-1zM525 282h1v1h-1zM703 452h1v1h-1zM734 238h1v1h-1zM401 215h1v1h-1zM789 203h1v1h-1zM724 520h1v1h-1zM591 359h1v1h-1zM756 456h1v1h-1zM436 421h1v1h-1zM491 372h1v1h-1zM479 374h1v1h-1zM396 249h1v1h-1zM552 188h1v1h-1zM464 219h1v1h-1zM586 274h1v1h-1zM401 202h1v1h-1zM519 299h1v1h-1zM429 206h1v1h-1zM397 409h1v1h-1zM470 212h1v1h-1zM596 172h1v1h-1zM436 156h1v1h-1zM439 282h1v1h-1zM495 303h1v1h-1zM445 249h1v1h-1zM415 226h1v1h-1zM506 399h1v1h-1zM587 217h1v1h-1zM410 191h1v1h-1zM471 325h1v1h-1zM408 392h1v1h-1zM524 239h1v1h-1zM552 312h1v1h-1zM441 235h1v1h-1zM458 217h1v1h-1zM474 278h1v1h-1zM557 178h1v1h-1zM426 179h1v1h-1zM395 169h1v1h-1zM678 317h1v1h-1zM504 232h1v1h-1zM544 162h1v1h-1zM580 171h1v1h-1zM508 207h1v1h-1zM455 255h1v1h-1zM554 323h1v1h-1zM597 156h1v1h-1zM546 214h1v1h-1zM422 182h1v1h-1zM455 233h1v1h-1zM493 227h1v1h-1zM451 323h1v1h-1zM440 194h1v1h-1zM572 288h1v1h-1zM426 323h1v1h-1zM436 252h1v1h-1zM513 265h1v1h-1zM507 173h1v1h-1zM517 453h1v1h-1zM589 209h1v1h-1zM498 166h1v1h-1zM586 212h1v1h-1zM449 262h1v1h-1zM482 225h1v1h-1zM429 185h1v1h-1zM624 267h1v1h-1zM688 292h1v1h-1zM543 342h1v1h-1zM404 247h1v1h-1zM415 213h1v1h-1zM537 174h1v1h-1zM476 258h1v1h-1zM531 297h1v1h-1zM447 311h1v1h-1zM608 223h1v1h-1zM453 260h1v1h-1zM516 263h1v1h-1zM399 231h1v1h-1zM398 317h1v1h-1zM494 218h1v1h-1zM408 219h1v1h-1zM609 258h1v1h-1zM402 233h1v1h-1zM400 280h1v1h-1zM440 189h1v1h-1zM484 258h1v1h-1zM402 203h1v1h-1zM474 364h1v1h-1zM565 233h1v1h-1zM522 249h1v1h-1zM520 278h1v1h-1zM404 263h1v1h-1zM483 266h1v1h-1zM518 313h1v1h-1zM404 209h1v1h-1zM435 180h1v1h-1zM410 414h1v1h-1zM396 210h1v1h-1zM540 315h1v1h-1zM533 197h1v1h-1zM434 156h1v1h-1zM602 203h1v1h-1zM490 168h1v1h-1zM504 280h1v1h-1zM433 283h1v1h-1zM457 202h1v1h-1zM503 239h1v1h-1zM454 171h1v1h-1zM591 229h1v1h-1zM516 156h1v1h-1zM444 192h1v1h-1zM495 326h1v1h-1zM438 298h1v1h-1zM516 468h1v1h-1zM661 417h1v1h-1zM428 276h1v1h-1zM456 269h1v1h-1zM425 258h1v1h-1zM493 167h1v1h-1zM430 222h1v1h-1zM416 355h1v1h-1zM406 190h1v1h-1zM440 207h1v1h-1zM504 164h1v1h-1zM555 171h1v1h-1zM591 431h1v1h-1zM490 185h1v1h-1zM541 457h1v1h-1zM400 265h1v1h-1zM483 171h1v1h-1zM418 224h1v1h-1zM463 242h1v1h-1zM520 290h1v1h-1zM569 252h1v1h-1zM496 296h1v1h-1zM458 173h1v1h-1zM505 285h1v1h-1zM410 215h1v1h-1zM431 335h1v1h-1zM396 170h1v1h-1zM416 298h1v1h-1zM538 451h1v1h-1zM556 371h1v1h-1zM584 249h1v1h-1zM439 178h1v1h-1zM463 167h1v1h-1zM686 255h1v1h-1zM481 275h1v1h-1zM546 185h1v1h-1zM418 172h1v1h-1zM402 283h1v1h-1zM498 409h1v1h-1zM456 243h1v1h-1zM465 338h1v1h-1zM498 316h1v1h-1zM500 275h1v1h-1zM420 314h1v1h-1zM432 197h1v1h-1zM505 219h1v1h-1zM459 270h1v1h-1zM537 176h1v1h-1zM473 194h1v1h-1zM400 351h1v1h-1zM448 270h1v1h-1zM467 248h1v1h-1zM440 177h1v1h-1zM616 249h1v1h-1zM414 223h1v1h-1zM403 176h1v1h-1zM523 203h1v1h-1zM443 273h1v1h-1zM539 173h1v1h-1zM438 345h1v1h-1zM525 285h1v1h-1zM624 206h1v1h-1zM457 290h1v1h-1zM454 282h1v1h-1zM412 209h1v1h-1zM446 210h1v1h-1zM469 275h1v1h-1zM412 179h1v1h-1zM524 172h1v1h-1zM485 260h1v1h-1zM629 279h1v1h-1zM488 156h1v1h-1zM520 200h1v1h-1zM428 313h1v1h-1zM530 204h1v1h-1zM440 281h1v1h-1zM497 164h1v1h-1zM468 173h1v1h-1zM560 274h1v1h-1zM400 226h1v1h-1zM458 353h1v1h-1zM539 195h1v1h-1zM416 257h1v1h-1zM501 266h1v1h-1zM470 194h1v1h-1zM570 316h1v1h-1zM432 182h1v1h-1zM398 271h1v1h-1zM441 284h1v1h-1zM556 232h1v1h-1zM564 160h1v1h-1zM432 255h1v1h-1zM507 326h1v1h-1zM485 226h1v1h-1zM590 438h1v1h-1zM418 166h1v1h-1zM430 182h1v1h-1zM432 193h1v1h-1zM433 168h1v1h-1zM461 236h1v1h-1zM439 232h1v1h-1zM448 213h1v1h-1zM501 162h1v1h-1zM500 176h1v1h-1zM593 309h1v1h-1zM474 314h1v1h-1zM466 347h1v1h-1zM529 164h1v1h-1zM462 365h1v1h-1zM537 203h1v1h-1zM448 196h1v1h-1zM498 192h1v1h-1zM496 305h1v1h-1zM527 183h1v1h-1zM572 275h1v1h-1zM451 164h1v1h-1zM526 163h1v1h-1zM426 203h1v1h-1zM524 279h1v1h-1zM562 213h1v1h-1zM565 183h1v1h-1zM395 306h1v1h-1zM413 223h1v1h-1zM591 172h1v1h-1zM483 157h1v1h-1zM630 270h1v1h-1zM543 292h1v1h-1zM468 360h1v1h-1zM501 192h1v1h-1zM413 200h1v1h-1zM551 241h1v1h-1zM457 178h1v1h-1zM564 220h1v1h-1zM515 198h1v1h-1zM593 355h1v1h-1zM511 216h1v1h-1zM410 280h1v1h-1zM780 192h1v1h-1zM524 266h1v1h-1zM521 241h1v1h-1zM549 252h1v1h-1zM433 322h1v1h-1zM395 238h1v1h-1zM413 425h1v1h-1zM495 359h1v1h-1zM543 182h1v1h-1zM617 333h1v1h-1zM498 358h1v1h-1zM606 347h1v1h-1zM652 368h1v1h-1zM573 345h1v1h-1zM603 359h1v1h-1zM613 357h1v1h-1zM632 341h1v1h-1zM588 341h1v1h-1zM631 361h1v1h-1zM616 363h1v1h-1zM618 322h1v1h-1zM623 367h1v1h-1zM644 337h1v1h-1zM622 344h1v1h-1zM594 356h1v1h-1zM602 351h1v1h-1zM607 337h1v1h-1zM618 351h1v1h-1zM629 341h1v1h-1zM614 357h1v1h-1zM612 350h1v1h-1zM609 348h1v1h-1zM635 367h1v1h-1zM635 375h1v1h-1zM622 370h1v1h-1zM613 371h1v1h-1zM634 384h1v1h-1zM635 364h1v1h-1zM626 339h1v1h-1zM607 367h1v1h-1zM595 382h1v1h-1zM623 362h1v1h-1zM638 355h1v1h-1zM618 304h1v1h-1zM626 361h1v1h-1zM592 354h1v1h-1zM618 371h1v1h-1zM587 338h1v1h-1zM616 331h1v1h-1zM623 306h1v1h-1zM576 349h1v1h-1zM630 332h1v1h-1zM627 356h1v1h-1zM630 351h1v1h-1zM587 349h1v1h-1zM622 381h1v1h-1zM591 398h1v1h-1zM618 327h1v1h-1zM614 373h1v1h-1zM620 334h1v1h-1zM633 370h1v1h-1zM620 385h1v1h-1zM660 299h1v1h-1zM620 388h1v1h-1zM629 381h1v1h-1zM630 319h1v1h-1zM607 349h1v1h-1zM645 348h1v1h-1zM610 338h1v1h-1zM623 354h1v1h-1zM663 347h1v1h-1zM596 362h1v1h-1zM625 353h1v1h-1zM606 359h1v1h-1zM610 338h1v1h-1zM608 370h1v1h-1zM592 348h1v1h-1zM614 365h1v1h-1zM616 369h1v1h-1zM605 359h1v1h-1zM625 351h1v1h-1zM649 361h1v1h-1zM625 373h1v1h-1zM627 344h1v1h-1zM638 396h1v1h-1zM609 363h1v1h-1zM622 351h1v1h-1zM584 336h1v1h-1zM604 380h1v1h-1zM598 377h1v1h-1zM601 346h1v1h-1zM612 338h1v1h-1zM590 379h1v1h-1zM641 375h1v1h-1zM638 369h1v1h-1zM643 333h1v1h-1zM630 380h1v1h-1zM626 346h1v1h-1zM603 344h1v1h-1zM611 287h1v1h-1zM629 382h1v1h-1zM631 353h1v1h-1zM606 345h1v1h-1zM646 321h1v1h-1zM663 318h1v1h-1zM636 335h1v1h-1zM611 304h1v1h-1zM638 359h1v1h-1zM640 339h1v1h-1zM645 353h1v1h-1zM616 339h1v1h-1zM643 357h1v1h-1zM628 318h1v1h-1zM618 328h1v1h-1zM604 311h1v1h-1zM631 347h1v1h-1zM620 329h1v1h-1zM623 329h1v1h-1zM618 363h1v1h-1zM627 362h1v1h-1zM607 309h1v1h-1zM625 327h1v1h-1zM613 325h1v1h-1zM615 363h1v1h-1zM613 324h1v1h-1zM622 355h1v1h-1zM620 355h1v1h-1zM643 384h1v1h-1zM633 342h1v1h-1zM626 320h1v1h-1zM620 389h1v1h-1zM619 349h1v1h-1zM605 373h1v1h-1zM614 356h1v1h-1zM613 324h1v1h-1zM616 328h1v1h-1zM607 338h1v1h-1zM652 363h1v1h-1zM625 336h1v1h-1zM631 347h1v1h-1zM643 345h1v1h-1zM652 345h1v1h-1zM621 340h1v1h-1zM619 329h1v1h-1zM598 315h1v1h-1zM604 330h1v1h-1zM625 336h1v1h-1zM617 377h1v1h-1zM631 317h1v1h-1zM627 362h1v1h-1zM617 330h1v1h-1zM626 344h1v1h-1zM625 362h1v1h-1zM627 339h1v1h-1zM589 352h1v1h-1zM617 346h1v1h-1zM626 361h1v1h-1zM599 367h1v1h-1zM626 353h1v1h-1zM621 395h1v1h-1zM628 348h1v1h-1zM589 344h1v1h-1zM629 323h1v1h-1zM617 352h1v1h-1zM634 318h1v1h-1zM616 345h1v1h-1zM620 358h1v1h-1zM636 373h1v1h-1zM669 354h1v1h-1zM628 347h1v1h-1zM618 330h1v1h-1zM616 336h1v1h-1zM595 353h1v1h-1zM609 354h1v1h-1zM614 360h1v1h-1zM647 361h1v1h-1zM613 342h1v1h-1zM624 341h1v1h-1zM613 374h1v1h-1zM625 340h1v1h-1zM623 347h1v1h-1zM610 355h1v1h-1zM612 337h1v1h-1zM633 335h1v1h-1zM646 324h1v1h-1zM628 358h1v1h-1zM626 356h1v1h-1zM637 344h1v1h-1zM612 342h1v1h-1zM657 328h1v1h-1zM640 332h1v1h-1zM630 373h1v1h-1zM596 331h1v1h-1zM636 375h1v1h-1zM608 386h1v1h-1zM614 358h1v1h-1zM644 334h1v1h-1zM651 334h1v1h-1zM618 341h1v1h-1zM664 350h1v1h-1zM636 374h1v1h-1zM611 368h1v1h-1zM614 313h1v1h-1zM612 351h1v1h-1zM577 325h1v1h-1zM618 358h1v1h-1zM632 349h1v1h-1zM607 362h1v1h-1zM594 364h1v1h-1zM591 369h1v1h-1zM602 382h1v1h-1zM611 337h1v1h-1zM600 362h1v1h-1zM597 344h1v1h-1zM628 331h1v1h-1zM602 339h1v1h-1zM594 334h1v1h-1zM619 317h1v1h-1zM620 351h1v1h-1zM623 349h1v1h-1zM575 331h1v1h-1zM625 346h1v1h-1zM598 383h1v1h-1zM643 321h1v1h-1zM617 361h1v1h-1zM650 305h1v1h-1zM632 341h1v1h-1zM623 343h1v1h-1zM651 390h1v1h-1zM614 330h1v1h-1zM668 358h1v1h-1zM599 373h1v1h-1zM616 342h1v1h-1zM640 313h1v1h-1zM637 353h1v1h-1zM626 354h1v1h-1zM588 333h1v1h-1zM627 360h1v1h-1zM618 315h1v1h-1zM614 333h1v1h-1zM605 360h1v1h-1zM625 318h1v1h-1zM617 361h1v1h-1zM623 346h1v1h-1zM620 325h1v1h-1zM655 352h1v1h-1zM603 311h1v1h-1zM586 336h1v1h-1zM639 337h1v1h-1zM614 328h1v1h-1zM648 397h1v1h-1zM568 342h1v1h-1zM629 360h1v1h-1zM610 339h1v1h-1zM632 381h1v1h-1zM586 335h1v1h-1zM628 328h1v1h-1zM609 377h1v1h-1zM625 338h1v1h-1zM629 321h1v1h-1zM623 359h1v1h-1zM642 363h1v1h-1zM622 345h1v1h-1zM615 375h1v1h-1zM643 361h1v1h-1zM620 331h1v1h-1zM594 340h1v1h-1zM634 353h1v1h-1zM644 346h1v1h-1zM589 335h1v1h-1zM635 355h1v1h-1zM622 349h1v1h-1zM610 363h1v1h-1zM609 358h1v1h-1zM620 316h1v1h-1zM649 344h1v1h-1zM635 362h1v1h-1zM619 340h1v1h-1zM623 338h1v1h-1zM604 339h1v1h-1zM588 328h1v1h-1zM617 361h1v1h-1zM581 360h1v1h-1zM645 368h1v1h-1zM645 324h1v1h-1zM601 320h1v1h-1zM645 395h1v1h-1zM589 346h1v1h-1zM594 310h1v1h-1zM601 380h1v1h-1zM610 366h1v1h-1zM632 332h1v1h-1zM645 327h1v1h-1zM610 359h1v1h-1zM614 344h1v1h-1zM635 374h1v1h-1zM585 350h1v1h-1zM643 383h1v1h-1zM572 333h1v1h-1zM621 341h1v1h-1zM633 360h1v1h-1zM630 344h1v1h-1zM616 369h1v1h-1zM630 357h1v1h-1zM622 333h1v1h-1zM605 352h1v1h-1zM639 328h1v1h-1zM626 358h1v1h-1zM615 347h1v1h-1zM632 333h1v1h-1zM646 313h1v1h-1zM632 364h1v1h-1zM646 307h1v1h-1zM599 372h1v1h-1zM605 349h1v1h-1zM640 327h1v1h-1zM600 329h1v1h-1zM619 334h1v1h-1zM621 347h1v1h-1zM629 336h1v1h-1zM630 367h1v1h-1zM636 359h1v1h-1zM611 352h1v1h-1zM593 356h1v1h-1zM637 336h1v1h-1zM646 367h1v1h-1zM657 326h1v1h-1zM621 336h1v1h-1zM612 366h1v1h-1zM641 349h1v1h-1zM613 327h1v1h-1zM619 355h1v1h-1zM631 369h1v1h-1zM609 335h1v1h-1zM645 355h1v1h-1zM587 383h1v1h-1zM607 367h1v1h-1zM613 351h1v1h-1zM651 311h1v1h-1zM613 334h1v1h-1zM614 343h1v1h-1zM637 359h1v1h-1zM611 381h1v1h-1zM636 331h1v1h-1zM612 335h1v1h-1zM624 341h1v1h-1zM634 338h1v1h-1zM620 337h1v1h-1zM608 367h1v1h-1zM591 354h1v1h-1zM635 377h1v1h-1zM602 375h1v1h-1zM617 351h1v1h-1zM625 322h1v1h-1zM644 364h1v1h-1zM607 337h1v1h-1zM664 345h1v1h-1zM618 315h1v1h-1zM615 360h1v1h-1zM609 353h1v1h-1zM626 342h1v1h-1zM639 345h1v1h-1zM618 349h1v1h-1zM585 362h1v1h-1zM634 366h1v1h-1zM628 348h1v1h-1zM630 407h1v1h-1zM599 362h1v1h-1zM629 367h1v1h-1zM592 392h1v1h-1zM644 345h1v1h-1zM654 353h1v1h-1zM660 354h1v1h-1zM581 349h1v1h-1zM611 321h1v1h-1zM601 355h1v1h-1zM605 371h1v1h-1zM588 344h1v1h-1zM628 358h1v1h-1zM609 355h1v1h-1zM600 335h1v1h-1zM593 377h1v1h-1zM612 329h1v1h-1zM614 378h1v1h-1zM653 331h1v1h-1zM654 348h1v1h-1zM641 368h1v1h-1zM605 335h1v1h-1zM588 350h1v1h-1zM627 345h1v1h-1zM596 359h1v1h-1zM635 353h1v1h-1zM608 357h1v1h-1zM602 355h1v1h-1zM627 372h1v1h-1zM655 388h1v1h-1zM636 338h1v1h-1zM632 320h1v1h-1zM619 347h1v1h-1zM610 360h1v1h-1zM611 392h1v1h-1zM616 389h1v1h-1zM625 329h1v1h-1zM622 395h1v1h-1zM617 351h1v1h-1zM630 366h1v1h-1zM634 314h1v1h-1zM606 338h1v1h-1zM677 333h1v1h-1zM622 406h1v1h-1zM629 378h1v1h-1zM636 316h1v1h-1zM611 344h1v1h-1zM585 306h1v1h-1zM638 390h1v1h-1zM599 347h1v1h-1zM647 372h1v1h-1zM593 349h1v1h-1zM627 310h1v1h-1zM609 338h1v1h-1zM576 333h1v1h-1zM622 358h1v1h-1zM595 361h1v1h-1zM616 347h1v1h-1zM608 304h1v1h-1zM636 359h1v1h-1zM619 338h1v1h-1zM594 358h1v1h-1zM611 362h1v1h-1zM632 339h1v1h-1zM606 346h1v1h-1z" fill="#fff"/><path d="M608.5 156V290" stroke="#0010a0" stroke-width="1" opacity=".5"/><circle cx="428" cy="171.4" r="7.2" fill="url(#g3)"/><circle cx="436.4" cy="163.8" r="3.0" fill="url(#g1)"/><circle cx="456.6" cy="172.8" r="3.0" fill="url(#g1)"/><circle cx="504.2" cy="177" r="7.2" fill="url(#g3)"/><circle cx="515.4" cy="171.4" r="7.2" fill="url(#g3)"/><circle cx="535" cy="163" r="3.0" fill="url(#g1)"/><circle cx="579.8" cy="165" r="3.0" fill="url(#g1)"/><circle cx="444" cy="200" r="3.0" fill="url(#g1)"/><circle cx="444.8" cy="219" r="7.2" fill="url(#g3)"/><circle cx="437.5" cy="226" r="3.0" fill="url(#g1)"/><circle cx="476.7" cy="204" r="3.0" fill="url(#g1)"/><circle cx="474" cy="190" r="3.0" fill="url(#g1)"/><circle cx="532.2" cy="202.2" r="4.6" fill="url(#g2)"/><circle cx="522.4" cy="200.2" r="3.0" fill="url(#g1)"/><circle cx="516.8" cy="202" r="3.0" fill="url(#g1)"/><circle cx="543.4" cy="214.2" r="3.0" fill="url(#g1)"/><circle cx="547.6" cy="195.2" r="3.0" fill="url(#g1)"/><circle cx="600.8" cy="207.8" r="3.0" fill="url(#g1)"/><circle cx="572" cy="221.8" r="3.0" fill="url(#g1)"/><circle cx="496.3" cy="236.6" r="4.6" fill="url(#g2)"/><circle cx="510.3" cy="235.2" r="4.6" fill="url(#g2)"/><circle cx="400" cy="247" r="7.2" fill="url(#g3)"/><circle cx="423" cy="235" r="3.0" fill="url(#g1)"/><circle cx="453.2" cy="262.4" r="7.2" fill="url(#g3)"/><circle cx="400.6" cy="262.4" r="3.0" fill="url(#g1)"/><circle cx="401" cy="270.8" r="3.0" fill="url(#g1)"/><circle cx="536.4" cy="272.2" r="7.2" fill="url(#g3)"/><circle cx="595.2" cy="256.8" r="7.2" fill="url(#g3)"/><circle cx="506.4" cy="249.2" r="3.0" fill="url(#g1)"/><circle cx="569.1" cy="253.4" r="3.0" fill="url(#g1)"/><circle cx="556.8" cy="259" r="3.0" fill="url(#g1)"/><circle cx="490.2" cy="254" r="3.0" fill="url(#g1)"/><circle cx="468.3" cy="282" r="3.0" fill="url(#g1)"/><circle cx="460.8" cy="297.4" r="3.0" fill="url(#g1)"/><circle cx="476.2" cy="308.6" r="3.0" fill="url(#g1)"/><circle cx="472" cy="293.2" r="3.0" fill="url(#g1)"/><circle cx="511.2" cy="302.1" r="3.0" fill="url(#g1)"/><circle cx="574.2" cy="309.4" r="3.0" fill="url(#g1)"/><circle cx="563" cy="319.8" r="3.0" fill="url(#g1)"/><circle cx="470.6" cy="324.5" r="4.6" fill="url(#g2)"/><circle cx="400" cy="321.2" r="3.0" fill="url(#g1)"/><circle cx="406.2" cy="324" r="3.0" fill="url(#g1)"/><circle cx="433.6" cy="331" r="3.0" fill="url(#g1)"/><circle cx="535" cy="338" r="4.6" fill="url(#g2)"/><circle cx="533" cy="342.2" r="3.0" fill="url(#g1)"/><circle cx="547.6" cy="349.7" r="3.0" fill="url(#g1)"/><circle cx="474" cy="355.3" r="7.2" fill="url(#g3)"/><circle cx="400.6" cy="346.4" r="3.0" fill="url(#g1)"/><circle cx="484.6" cy="309.4" r="3.0" fill="url(#g1)"/><circle cx="638" cy="184.6" r="7.2" fill="url(#g3)"/><circle cx="699.6" cy="188.2" r="7.2" fill="url(#g3)"/><circle cx="693.1" cy="168.6" r="3.0" fill="url(#g1)"/><circle cx="708" cy="168.6" r="3.0" fill="url(#g1)"/><circle cx="734" cy="167.8" r="3.0" fill="url(#g1)"/><circle cx="791.1" cy="165.8" r="4.6" fill="url(#g2)"/><circle cx="773.2" cy="189.6" r="7.2" fill="url(#g3)"/><circle cx="783" cy="190.2" r="7.2" fill="url(#g3)"/><circle cx="645" cy="219" r="4.6" fill="url(#g2)"/><circle cx="677.2" cy="210.6" r="3.0" fill="url(#g1)"/><circle cx="692.6" cy="217.6" r="3.0" fill="url(#g1)"/><circle cx="715" cy="210.6" r="3.0" fill="url(#g1)"/><circle cx="766" cy="219" r="7.2" fill="url(#g3)"/><circle cx="743" cy="226" r="3.0" fill="url(#g1)"/><circle cx="628.2" cy="245" r="7.2" fill="url(#g3)"/><circle cx="701.5" cy="243.6" r="4.6" fill="url(#g2)"/><circle cx="706" cy="235.8" r="3.0" fill="url(#g1)"/><circle cx="762.6" cy="246" r="3.0" fill="url(#g1)"/><circle cx="800.4" cy="240.5" r="4.6" fill="url(#g2)"/><circle cx="647.8" cy="272.2" r="4.6" fill="url(#g2)"/><circle cx="679.1" cy="275" r="3.0" fill="url(#g1)"/><circle cx="799" cy="263.8" r="3.0" fill="url(#g1)"/><circle cx="778" cy="284.8" r="3.0" fill="url(#g1)"/><circle cx="743" cy="289.8" r="3.0" fill="url(#g1)"/><circle cx="647.8" cy="303" r="4.6" fill="url(#g2)"/><circle cx="682" cy="311.4" r="7.2" fill="url(#g3)"/><circle cx="669.3" cy="321.7" r="4.6" fill="url(#g2)"/><circle cx="716.4" cy="322.6" r="3.0" fill="url(#g1)"/><circle cx="785" cy="305" r="4.6" fill="url(#g2)"/><circle cx="795.6" cy="311.4" r="3.0" fill="url(#g1)"/><circle cx="797.6" cy="321.2" r="4.6" fill="url(#g2)"/><circle cx="618.4" cy="316" r="3.0" fill="url(#g1)"/><circle cx="659.8" cy="343" r="7.2" fill="url(#g3)"/><circle cx="723.4" cy="186.2" r="3.0" fill="url(#g1)"/><circle cx="764" cy="212" r="3.0" fill="url(#g1)"/><circle cx="456.6" cy="389.8" r="4.6" fill="url(#g2)"/><circle cx="452.4" cy="404.6" r="7.2" fill="url(#g3)"/><circle cx="467.2" cy="395.4" r="3.0" fill="url(#g1)"/><circle cx="401.2" cy="437.3" r="4.6" fill="url(#g2)"/><circle cx="402" cy="460.6" r="3.0" fill="url(#g1)"/><circle cx="416" cy="472.6" r="7.2" fill="url(#g3)"/><circle cx="422.4" cy="468.1" r="3.0" fill="url(#g1)"/><circle cx="522.4" cy="424.2" r="7.2" fill="url(#g3)"/><circle cx="514" cy="430.6" r="3.0" fill="url(#g1)"/><circle cx="530.8" cy="433.4" r="3.0" fill="url(#g1)"/><circle cx="577.5" cy="422.2" r="7.2" fill="url(#g3)"/><circle cx="586.8" cy="427" r="3.0" fill="url(#g1)"/><circle cx="585.4" cy="443" r="3.0" fill="url(#g1)"/><circle cx="552.6" cy="454.1" r="4.6" fill="url(#g2)"/><circle cx="531.6" cy="452.2" r="3.0" fill="url(#g1)"/><circle cx="569.1" cy="463.4" r="7.2" fill="url(#g3)"/><circle cx="579.8" cy="468.1" r="4.6" fill="url(#g2)"/><circle cx="558.8" cy="471" r="3.0" fill="url(#g1)"/><circle cx="499.1" cy="484.9" r="4.6" fill="url(#g2)"/><circle cx="499.1" cy="494.2" r="4.6" fill="url(#g2)"/><circle cx="476.7" cy="494.2" r="4.6" fill="url(#g2)"/><circle cx="451" cy="497.8" r="4.6" fill="url(#g2)"/><circle cx="454.4" cy="503.4" r="3.0" fill="url(#g1)"/><circle cx="460.8" cy="518.5" r="3.0" fill="url(#g1)"/><circle cx="514" cy="516.6" r="4.6" fill="url(#g2)"/><circle cx="558.8" cy="520.8" r="3.0" fill="url(#g1)"/><circle cx="522.4" cy="530.6" r="4.6" fill="url(#g2)"/><circle cx="595.2" cy="511" r="3.0" fill="url(#g1)"/><circle cx="588.2" cy="501.2" r="3.0" fill="url(#g1)"/><circle cx="519.6" cy="544.6" r="7.2" fill="url(#g3)"/><circle cx="577" cy="549.3" r="4.6" fill="url(#g2)"/><circle cx="588.2" cy="543.2" r="4.6" fill="url(#g2)"/><circle cx="493" cy="553.8" r="4.6" fill="url(#g2)"/><circle cx="501.4" cy="558.6" r="4.6" fill="url(#g2)"/><circle cx="435.6" cy="565" r="7.2" fill="url(#g3)"/><circle cx="418" cy="529.7" r="3.0" fill="url(#g1)"/><circle cx="446" cy="532" r="3.0" fill="url(#g1)"/><circle cx="509.2" cy="396.2" r="3.0" fill="url(#g1)"/><circle cx="546.2" cy="369" r="3.0" fill="url(#g1)"/><circle cx="424.4" cy="369" r="3.0" fill="url(#g1)"/><circle cx="487.4" cy="470.4" r="3.0" fill="url(#g1)"/><circle cx="472" cy="451.3" r="3.0" fill="url(#g1)"/><circle cx="661.8" cy="375.8" r="4.6" fill="url(#g2)"/><circle cx="713.6" cy="364" r="3.0" fill="url(#g1)"/><circle cx="771.8" cy="369" r="4.6" fill="url(#g2)"/><circle cx="786.4" cy="376.6" r="3.0" fill="url(#g1)"/><circle cx="785" cy="392" r="3.0" fill="url(#g1)"/><circle cx="730.4" cy="399" r="4.6" fill="url(#g2)"/><circle cx="727.6" cy="406" r="3.0" fill="url(#g1)"/><circle cx="789.2" cy="408.2" r="3.0" fill="url(#g1)"/><circle cx="750" cy="423.4" r="7.2" fill="url(#g3)"/><circle cx="759.8" cy="422.2" r="3.0" fill="url(#g1)"/><circle cx="689.8" cy="456.4" r="7.2" fill="url(#g3)"/><circle cx="685.6" cy="460.6" r="3.0" fill="url(#g1)"/><circle cx="638.8" cy="457.8" r="4.6" fill="url(#g2)"/><circle cx="650.6" cy="453.6" r="3.0" fill="url(#g1)"/><circle cx="703.2" cy="444.6" r="3.0" fill="url(#g1)"/><circle cx="626" cy="447.4" r="3.0" fill="url(#g1)"/><circle cx="614.8" cy="412.2" r="3.0" fill="url(#g1)"/><circle cx="644.4" cy="469" r="3.0" fill="url(#g1)"/><circle cx="664.6" cy="473.7" r="3.0" fill="url(#g1)"/><circle cx="767.6" cy="471.8" r="7.2" fill="url(#g3)"/><circle cx="800.4" cy="458.6" r="4.6" fill="url(#g2)"/><circle cx="703.2" cy="492.8" r="4.6" fill="url(#g2)"/><circle cx="799" cy="505.4" r="7.2" fill="url(#g3)"/><circle cx="796.2" cy="518" r="4.6" fill="url(#g2)"/><circle cx="603" cy="512.4" r="4.6" fill="url(#g2)"/><circle cx="624" cy="512.4" r="7.2" fill="url(#g3)"/><circle cx="642.8" cy="518" r="4.6" fill="url(#g2)"/><circle cx="673" cy="517.4" r="4.6" fill="url(#g2)"/><circle cx="666.8" cy="519.4" r="3.0" fill="url(#g1)"/><circle cx="678" cy="506.8" r="3.0" fill="url(#g1)"/><circle cx="717.2" cy="511" r="4.6" fill="url(#g2)"/><circle cx="728.4" cy="513" r="4.6" fill="url(#g2)"/><circle cx="750.8" cy="491.4" r="3.0" fill="url(#g1)"/><circle cx="710.8" cy="524.1" r="4.6" fill="url(#g2)"/><circle cx="707.1" cy="526.4" r="3.0" fill="url(#g1)"/><circle cx="748.6" cy="532" r="4.6" fill="url(#g2)"/><circle cx="759.8" cy="527" r="3.0" fill="url(#g1)"/><circle cx="766" cy="525" r="3.0" fill="url(#g1)"/><circle cx="765.4" cy="541" r="4.6" fill="url(#g2)"/><circle cx="761.2" cy="543.7" r="3.0" fill="url(#g1)"/><circle cx="615.6" cy="545.4" r="4.6" fill="url(#g2)"/><circle cx="796.2" cy="553" r="4.6" fill="url(#g2)"/><circle cx="652.8" cy="567.8" r="4.6" fill="url(#g2)"/><circle cx="709.4" cy="557.2" r="3.0" fill="url(#g1)"/><circle cx="748.6" cy="560" r="3.0" fill="url(#g1)"/><circle cx="771" cy="562.8" r="3.0" fill="url(#g1)"/><circle cx="736" cy="368.2" r="3.0" fill="url(#g1)"/><circle cx="703.8" cy="419.4" r="3.0" fill="url(#g1)"/></g><rect x="395.5" y="156.5" width="415" height="415" fill="none" stroke="#000" stroke-width="1.2"/><path d="M395.5 572v-4M395.5 156v4M395 156.5h4M811 156.5h-4M497.1 572v-4M497.1 156v4M395 258.1h4M811 258.1h-4M598.6 572v-4M598.6 156v4M395 359.6h4M811 359.6h-4M700.2 572v-4M700.2 156v4M395 461.2h4M811 461.2h-4M801.8 572v-4M801.8 156v4M395 562.8h4M811 562.8h-4" stroke="#000" stroke-width="1" fill="none"/></svg><div class="ax" style="right:515.5px;top:145.3px;transform:scaleX(1.07);transform-origin:100% 0">0</div><div class="ax" style="right:515.5px;top:246.9px;transform:scaleX(1.07);transform-origin:100% 0">500</div><div class="ax" style="right:515.5px;top:348.4px;transform:scaleX(1.07);transform-origin:100% 0">1000</div><div class="ax" style="right:515.5px;top:450.0px;transform:scaleX(1.07);transform-origin:100% 0">1500</div><div class="ax" style="right:515.5px;top:551.6px;transform:scaleX(1.07);transform-origin:100% 0">2000</div><div class="ax" style="left:294.0px;width:200px;text-align:center;top:576px;transform:scaleX(1.07);transform-origin:50% 0">0</div><div class="ax" style="left:395.6px;width:200px;text-align:center;top:576px;transform:scaleX(1.07);transform-origin:50% 0">500</div><div class="ax" style="left:497.1px;width:200px;text-align:center;top:576px;transform:scaleX(1.07);transform-origin:50% 0">1000</div><div class="ax" style="left:598.7px;width:200px;text-align:center;top:576px;transform:scaleX(1.07);transform-origin:50% 0">1500</div><div class="ax" style="left:700.3px;width:200px;text-align:center;top:576px;transform:scaleX(1.07);transform-origin:50% 0">2000</div><div style="left:305px;top:629px;width:580px;height:38px;border-top:1px solid #fff;border-left:1px solid #fff;border-bottom:1px solid #c9c4bd;border-right:1px solid #d6d1ca"></div><div style="left:421px;top:636px;width:2px;height:24px;background:linear-gradient(90deg,#d5d0c9 0 1px,#fff 1px)"></div><div style="left:503px;top:636px;width:2px;height:24px;background:linear-gradient(90deg,#d5d0c9 0 1px,#fff 1px)"></div><svg style="position:absolute;left:873px;top:642px" width="14" height="12"><path d="M2 3l3 3-3 3M6 3l3 3-3 3" stroke="#606060" stroke-width="1.5" fill="none"/></svg><svg style="position:absolute;left:305px;top:629px" width="320" height="38">
<defs>
<radialGradient id="bb" cx=".4" cy=".35" r=".7"><stop offset="0" stop-color="#5fd0e6"/><stop offset=".6" stop-color="#1e8fad"/><stop offset="1" stop-color="#105f7a"/></radialGradient>
<linearGradient id="door" x1="0" y1="0" x2="0" y2="1"><stop offset="0" stop-color="#fde29a"/><stop offset="1" stop-color="#f0a830"/></linearGradient>
</defs>
<!-- home: source x 312-334, y 637-660 -->
<g transform="translate(7,8)">
<rect x="4" y="0" width="3" height="5" fill="#e8b25a" stroke="#b07020" stroke-width=".6"/>
<path d="M3.5 9.5V22.5H18.5V9.5L11 3z" fill="#f4f4f2" stroke="#7a8a8e" stroke-width="1"/>
<rect x="7" y="11.5" width="8" height="11" rx="3.5" fill="url(#door)" stroke="#b47820" stroke-width=".7"/>
<path d="M0.5 11L11 1.5L21.5 11" stroke="#a82538" stroke-width="2.6" fill="none" stroke-linejoin="miter"/>
</g>
<!-- back -->
<circle cx="55" cy="19.4" r="10.2" fill="url(#bb)" stroke="#1a6b85" stroke-width=".6"/>
<path d="M49 19.4l5.6-5.4v3.4h5.6v4h-5.6v3.4z" fill="#d8f0f6"/>
<!-- forward -->
<circle cx="92" cy="19.4" r="10.2" fill="url(#bb)" stroke="#1a6b85" stroke-width=".6"/>
<path d="M98 19.4l-5.6-5.4v3.4h-5.6v4h5.6v3.4z" fill="#d8f0f6"/>
<!-- move: center 441.4,648 -> 136.4,19 -->
<g fill="#1f6585">
<path d="M136.4 7.7l4.2 4.8h-2.6v5h5v-2.6l4.8 4.2-4.8 4.2v-2.6h-5v5h2.6l-4.2 4.8-4.2-4.8h2.6v-5h-5v2.6l-4.8-4.2 4.8-4.2v2.6h5v-5h-2.6z"/>
</g>
<!-- zoom rect: x 467.6-491, y 637.7-657.8 -->
<g transform="translate(162.6,8.7)">
<rect x="3.5" y="7.5" width="17.5" height="12.5" fill="#fbfbff" stroke="#8cc8d8" stroke-width="1"/>
<path d="M14 6.5l8-5" stroke="#c87a20" stroke-width="3.4" stroke-linecap="round"/>
<path d="M14 6.5l8-5" stroke="#f8b860" stroke-width="2" stroke-linecap="round"/>
<circle cx="7.4" cy="11.6" r="7.2" fill="#b8dfe8" fill-opacity=".75" stroke="#a8d0dc" stroke-width=".8"/>
<rect x="6" y="10" width="7" height="6" fill="#2a7a92" opacity=".8"/>
<path d="M6 12h7M6 14h7" stroke="#cfeaf0" stroke-width=".8"/>
</g>
<!-- subplots: x 514.3-535.7 y 638-658.4 -->
<g transform="translate(209.3,9)">
<rect x="1.5" y="1.5" width="18" height="17.5" fill="#dcebf7" stroke="#111" stroke-width="1.4"/>
<rect x="4.5" y="4.5" width="12" height="11.5" fill="#7eb2e0"/>
<rect x="5.5" y="7" width="10" height="7.5" rx="1" fill="#f8f8f8" stroke="#222" stroke-width="1"/>
<path d="M5.5 9h10" stroke="#222" stroke-width="1"/>
<path d="M10.5 -.5l4 4h-8zM10.5 21.5l4-4h-8zM-.5 10.2l4-4v8zM21.5 10.2l-4-4v8z" fill="#3cc43c"/>
</g>
<!-- save: x 548.8-572.9 y 637.1-659.5 -->
<g transform="translate(243.8,8.1)">
<rect x=".5" y=".5" width="23" height="22" rx="2.5" fill="#1d5878" stroke="#123e58" stroke-width=".8"/>
<rect x="4.5" y="1" width="15" height="10" fill="#a8c4d4"/>
<rect x="4.5" y="1" width="15" height="2" fill="#c87850"/>
<path d="M7 6h10M7 8.5h10" stroke="#1d5878" stroke-width="1.1"/>
<rect x="7" y="14" width="10" height="8" fill="#a8bcc8"/>
<rect x="9" y="15.5" width="2.5" height="5.5" fill="#1d3848"/>
</g>
<!-- check: x 587.7-608.4 y 638-657.8 -->
<g transform="translate(282.7,9)">
<rect x="2.5" y="6.5" width="10" height="10" fill="#fff" stroke="#777" stroke-width="1.4"/>
<path d="M1 10.5l5.5 8L20 1.5" stroke="#10c020" stroke-width="3.6" fill="none" stroke-linejoin="round"/>
</g>
</svg><div class="s" style="left:509px;top:678px;transform:scaleX(1.092)">Active Image:</div><div style="left:598px;top:674px;width:287px;height:22px;background:linear-gradient(#fdfcfb,#ece9e5);border:1px solid #948f88;border-radius:3px"></div><div style="left:601px;top:677px;width:263px;height:16px;border:1px dotted #666"></div><div style="left:864px;top:676px;width:1px;height:18px;background:#d0cbc4"></div><svg style="position:absolute;left:865px;top:677px" width="18" height="16"><path d="M4 7l4-5 4 5zM4 9l4 5 4-5z" fill="#111"/></svg><div class="s" style="left:603px;top:678px;transform:scaleX(1.085)">LaB6_29.4keV.tif</div>
</body></html>
